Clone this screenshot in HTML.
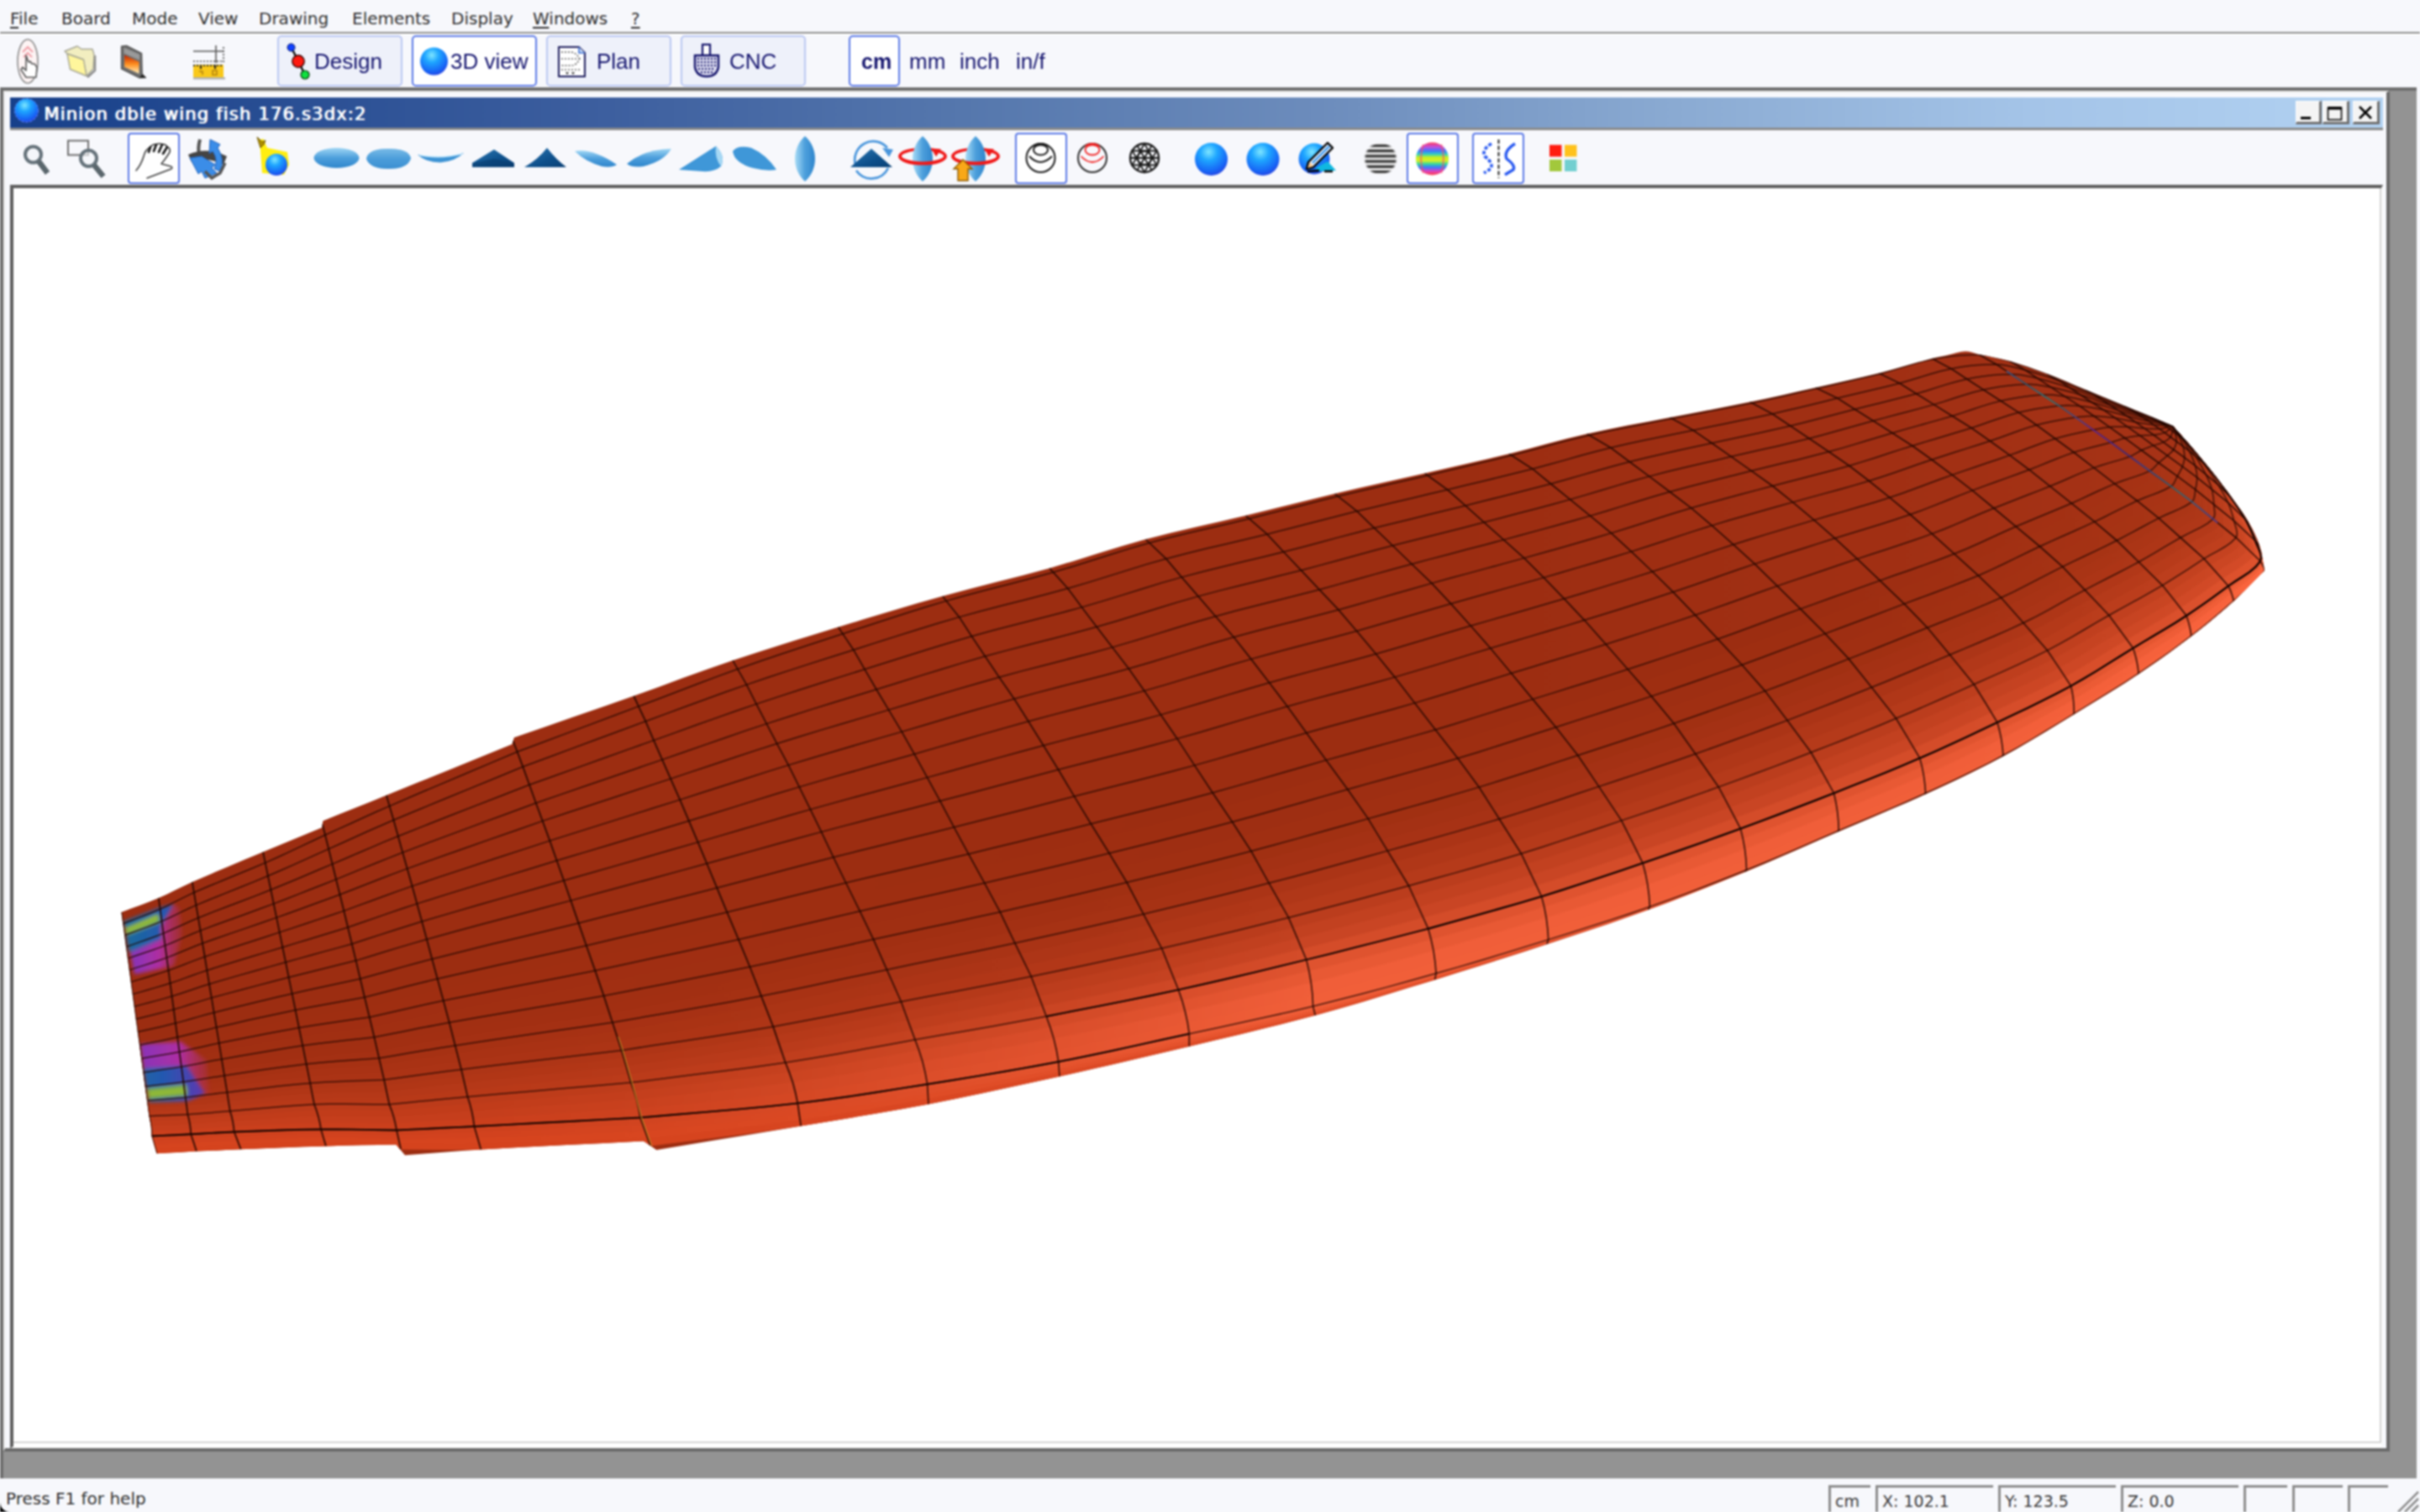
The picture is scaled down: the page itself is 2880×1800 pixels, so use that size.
<!DOCTYPE html>
<html lang="en">
<head>
<meta charset="utf-8">
<title>Minion dble wing fish 176.s3dx:2</title>
<style>
html,body{margin:0;padding:0;}
body{width:2880px;height:1800px;overflow:hidden;background:#f7f8fc;position:relative;font-family:"DejaVu Sans","Liberation Sans",sans-serif;color:#2a2a2a;}
.abs{position:absolute;}
#menubar{left:0;top:0;width:2880px;height:38px;background:#f7f8fc;}
#menubar span{position:absolute;top:8px;font-size:20px;line-height:28px;color:#303030;white-space:nowrap;}
#menubar u{text-decoration:underline;text-underline-offset:3px;text-decoration-thickness:2px;}
#menuline{left:0;top:38px;width:2880px;height:2px;background:#8e8e8e;}
#menuline2{left:0;top:40px;width:2880px;height:2px;background:#ffffff;}
.tbtn{position:absolute;top:42px;height:57px;width:145px;border:2px solid #b9c6f2;border-radius:5px;background:#eef1fa;box-sizing:content-box;}
.tbtn.sel{border-color:#5a78e6;background:#ffffff;}
.tlabel{position:absolute;font-family:"Liberation Sans",sans-serif;font-size:26px;line-height:30px;color:#14146e;white-space:nowrap;top:58px;}
#mdi{left:0;top:104px;width:2876px;height:1656px;background:#939393;}
#mdi .topline{position:absolute;left:0;top:0;width:2876px;height:4px;background:#6e6e6e;}
#mdi .leftline{position:absolute;left:0;top:0;width:4px;height:1656px;background:#6e6e6e;}
#child{left:4px;top:108px;width:2840px;height:1620px;background:#f7f8fc;box-sizing:border-box;border-right:4px solid #6a6a6a;border-bottom:4px solid #6a6a6a;border-left:2px solid #e8e8e8;border-top:2px solid #e8e8e8;}
#title{left:12px;top:116px;width:2824px;height:36px;background:linear-gradient(90deg,#17408a 0%,#2a4f94 12%,#3d5f9f 25%,#5577ad 40%,#6c8cbc 55%,#8aaad2 70%,#a4c4e8 85%,#b2d2f2 100%);}
#title .txt{position:absolute;left:40px;top:5px;font-size:21px;line-height:30px;color:#fff;font-weight:normal;letter-spacing:1.2px;text-shadow:1px 0 0 #fff;white-space:nowrap;font-family:"DejaVu Sans",sans-serif;}
#titleline{left:12px;top:152px;width:2824px;height:3px;background:#8a8a8a;}
.wbtn{position:absolute;top:120px;height:24px;background:#f4f4f4;border-right:3px solid #707070;border-bottom:3px solid #707070;border-left:1px solid #fff;border-top:1px solid #fff;}
#canvasframe{left:12px;top:220px;width:2824px;height:1504px;background:#fff;box-sizing:border-box;border-left:4px solid #5e5e5e;border-top:4px solid #5e5e5e;border-right:2px solid #fafafa;border-bottom:2px solid #fafafa;}
#canvasinner{left:16px;top:224px;width:2818px;height:1494px;background:#fff;box-sizing:border-box;border-right:2px solid #d4d4d4;border-bottom:2px solid #d4d4d4;}
.ibtn{position:absolute;top:158px;width:58px;height:57px;border:2px solid #5a78e6;border-radius:4px;background:#fff;box-sizing:content-box;}
#status{left:0;top:1760px;width:2880px;height:40px;background:#f7f8fc;}
#status .f{position:absolute;top:8px;height:32px;border-left:3px solid #8c8c8c;border-top:3px solid #8c8c8c;box-sizing:border-box;font-size:19px;line-height:28px;color:#383838;padding-left:5px;padding-top:2px;white-space:nowrap;}
#status .help{position:absolute;left:7px;top:10px;font-size:20px;line-height:28px;color:#303030;white-space:nowrap;}
svg{position:absolute;overflow:visible;}
#root{position:absolute;left:0;top:0;width:2880px;height:1800px;overflow:hidden;filter:blur(0.8px);}
</style>
</head>
<body>
<div id="root">
<div id="menubar" class="abs">
<span style="left:12px"><u>F</u>ile</span>
<span style="left:73px">Board</span>
<span style="left:157px">Mode</span>
<span style="left:236px">View</span>
<span style="left:308px">Drawing</span>
<span style="left:419px">Elements</span>
<span style="left:537px">Display</span>
<span style="left:634px"><u>W</u>indows</span>
<span style="left:751px"><u>?</u></span>
</div>
<div id="menuline" class="abs"></div>
<div id="menuline2" class="abs"></div>

<div class="tbtn" style="left:330px"></div>
<div class="tbtn sel" style="left:490px"></div>
<div class="tbtn" style="left:650px"></div>
<div class="tbtn" style="left:810px"></div>
<div class="tbtn sel" style="left:1010px;width:57px"></div>
<div class="tlabel" style="left:374px">Design</div>
<div class="tlabel" style="left:536px">3D view</div>
<div class="tlabel" style="left:710px">Plan</div>
<div class="tlabel" style="left:868px">CNC</div>
<div class="tlabel" style="left:1025px;font-weight:bold;font-size:25px">cm</div>
<div class="tlabel" style="left:1082px">mm</div>
<div class="tlabel" style="left:1142px">inch</div>
<div class="tlabel" style="left:1209px">in/f</div>

<div id="mdi" class="abs"><div class="topline"></div><div class="leftline"></div></div>
<div id="child" class="abs"></div>
<div id="title" class="abs"><div class="txt">Minion dble wing fish 176.s3dx:2</div></div>
<div id="titleline" class="abs"></div>
<div class="wbtn" style="left:2732px;width:27px"></div>
<div class="wbtn" style="left:2764px;width:28px"></div>
<div class="wbtn" style="left:2800px;width:28px"></div>
<svg style="left:2732px;top:120px" width="100" height="28" viewBox="0 0 100 28">
<rect x="6" y="19" width="12" height="3" fill="#000"/>
<rect x="38.5" y="8.5" width="16" height="14" fill="none" stroke="#000" stroke-width="1.6"/><rect x="38" y="7" width="17" height="3.5" fill="#000"/>
<path d="M76 7 L90 21 M90 7 L76 21" stroke="#000" stroke-width="2.6" fill="none"/>
</svg>

<div class="ibtn" style="left:152px"></div>
<div class="ibtn" style="left:1208px"></div>
<div class="ibtn" style="left:1674px"></div>
<div class="ibtn" style="left:1752px"></div>

<div id="canvasframe" class="abs"></div>
<div id="canvasinner" class="abs"></div>

<div id="status" class="abs">
<div class="help">Press F1 for help</div>
<div class="f" style="left:2176px;width:50px">cm</div>
<div class="f" style="left:2232px;width:140px">X: 102.1</div>
<div class="f" style="left:2378px;width:140px">Y: 123.5</div>
<div class="f" style="left:2524px;width:140px">Z: 0.0</div>
<div class="f" style="left:2670px;width:52px"></div>
<div class="f" style="left:2728px;width:60px"></div>
<div class="f" style="left:2794px;width:48px"></div>
<svg style="left:2846px;top:8px" width="34" height="32" viewBox="0 0 34 32"><path d="M8 32 L32 8 M16 32 L32 16 M24 32 L32 24" stroke="#8c8c8c" stroke-width="2.5" fill="none"/></svg>
</div>
<svg style="left:0;top:1788px" width="12" height="12" viewBox="0 0 12 12"><path d="M0 0 L0 12 L12 12 A12 12 0 0 1 0 0 Z" fill="#000"/></svg>
<svg id="icons" style="left:0;top:0" width="2880" height="230" viewBox="0 0 2880 230">
<defs>
<radialGradient id="gSph" cx="0.42" cy="0.28" r="0.75"><stop offset="0" stop-color="#7fe6ff"/><stop offset="0.35" stop-color="#1ea6ff"/><stop offset="0.8" stop-color="#1763f5"/><stop offset="1" stop-color="#2a44e0"/></radialGradient>
<linearGradient id="gEl" x1="0" y1="0" x2="0" y2="1"><stop offset="0" stop-color="#9fd6f4"/><stop offset="0.5" stop-color="#4d9fdc"/><stop offset="1" stop-color="#2f86cc"/></linearGradient>
<linearGradient id="gElH" x1="0" y1="0" x2="1" y2="0"><stop offset="0" stop-color="#a8dcf6"/><stop offset="0.5" stop-color="#4d9fdc"/><stop offset="1" stop-color="#2f86cc"/></linearGradient>
<linearGradient id="gTri" x1="0" y1="0" x2="1" y2="1"><stop offset="0" stop-color="#2c78b4"/><stop offset="0.6" stop-color="#0d4f8a"/><stop offset="1" stop-color="#0a3f74"/></linearGradient>
<linearGradient id="gFlame" x1="0" y1="0" x2="0" y2="1"><stop offset="0" stop-color="#c02000"/><stop offset="0.5" stop-color="#ff9020"/><stop offset="1" stop-color="#fff0c0"/></linearGradient>
<linearGradient id="gGrey" x1="0" y1="0" x2="0" y2="1"><stop offset="0" stop-color="#d8d8d8"/><stop offset="0.5" stop-color="#8a8a8a"/><stop offset="1" stop-color="#d0d0d0"/></linearGradient>
<linearGradient id="gRain" x1="0" y1="0" x2="0" y2="1"><stop offset="0" stop-color="#ff3a5a"/><stop offset="0.14" stop-color="#c050e0"/><stop offset="0.26" stop-color="#3c78ff"/><stop offset="0.36" stop-color="#30d0c0"/><stop offset="0.46" stop-color="#c8f020"/><stop offset="0.56" stop-color="#d8f028"/><stop offset="0.66" stop-color="#30d8a0"/><stop offset="0.76" stop-color="#3c78ff"/><stop offset="0.88" stop-color="#e040c0"/><stop offset="1" stop-color="#ff4040"/></linearGradient>
<clipPath id="cStr"><circle cx="1643" cy="189" r="19.5"/></clipPath>
</defs>

<!-- toolbar 1 -->
<g id="ic-board-hand">
<ellipse cx="33" cy="73" rx="12" ry="26" fill="#fdf4f4" stroke="#8a8a8a" stroke-width="1.6"/>
<path d="M27 62 L33 56 L39 62 M28 68 L33 63 L38 68" stroke="#f0a0a8" stroke-width="2" fill="none"/>
<path d="M31 66 L31 84 L27 80 L25 83 L31 92 L43 92 L44 80 L41 76 L38 76 L36 73 L34 74 Z" fill="#ffffff" stroke="#555" stroke-width="1.6" stroke-linejoin="round"/>
</g>
<g id="ic-folder">
<path d="M104 92 L113 84 L113 66" fill="none" stroke="#8c8c8c" stroke-width="2.4"/>
<path d="M77 61 L92 55 L97 58.500 L110 58.500 L112 65 L111 82 L103 90.500 L99 71 L80 64 Z" fill="#f2eec0" stroke="#a4a494" stroke-width="1.4" stroke-linejoin="round"/>
<path d="M80 64 L99.500 71 L103 90.500 L83.500 82.500 Z" fill="#fff69c" stroke="#a4a494" stroke-width="1.4" stroke-linejoin="round"/>
</g>
<g id="ic-save">
<path d="M144.500 55 L150.500 54.300 L168.600 63.600 L169.200 88.300 L173.500 92.500 L166 92.700 L144.500 82 Z" fill="#6e6e6e" stroke="#4a4a4a" stroke-width="1.2" stroke-linejoin="round"/>
<path d="M147.500 56.700 L166 64.800 L166 71.600 L147.500 63.500 Z" fill="#9a9a9a"/>
<path d="M148.100 65.400 L165.500 73.500 L165.500 87.700 L148.100 79.700 Z" fill="url(#gFlame)"/>
<path d="M166 92.700 L173.500 92.500 L169.200 88.300" fill="#222"/>
</g>
<g id="ic-ruler">
<path d="M230 61 L266 61 M257 54 L257 75" stroke="#555" stroke-width="1.6" fill="none"/>
<path d="M230 73 L266 73 M266 56 L266 75" stroke="#444" stroke-width="1.6" stroke-dasharray="2 2" fill="none"/>
<rect x="230" y="77" width="36" height="15" fill="#f9c81a"/>
<path d="M230 78 L266 78" stroke="#222" stroke-width="2" stroke-dasharray="2 2"/>
<path d="M239 77 L239 82 M256 77 L256 82" stroke="#222" stroke-width="2"/>
<path d="M237 85 L241 85 L241 89 M253 84 L258 84 L258 89 L253 89 Z" stroke="#b08010" stroke-width="1.5" fill="none"/>
<rect x="230" y="92" width="38" height="2.5" fill="#b0b0b0"/>
</g>
<g id="ic-design">
<path d="M347 57 L363 89" stroke="#000" stroke-width="2.2"/>
<circle cx="346.5" cy="56.5" r="4.5" fill="#1040ff" stroke="#001060" stroke-width="1"/>
<circle cx="363" cy="89" r="5" fill="#10e040" stroke="#003000" stroke-width="1.2"/>
<circle cx="355" cy="73" r="7.2" fill="#ff1a10" stroke="#300" stroke-width="1.4"/>
</g>
<circle cx="516.5" cy="73" r="16.5" fill="url(#gSph)"/>
<g id="ic-plan">
<path d="M665 56 L689 56 L696 63 L696 91 L665 91 Z" fill="#ffffff" stroke="#1a1a5a" stroke-width="2"/>
<path d="M689 56 L689 63 L696 63" fill="#cfe6ff" stroke="#3a6ad0" stroke-width="1.6"/>
<path d="M668 62 L680 62 Q686 63 690 70 Q686 78 680 78 L668 78" fill="none" stroke="#555" stroke-width="1.4" stroke-dasharray="2 2"/>
<path d="M668 70 L692 70 M668 83 L692 83" stroke="#666" stroke-width="1.4" stroke-dasharray="2 2"/>
<path d="M673 86 L677 86 L675 89 Z M680 86 L684 86 L682 89 Z" fill="#333"/>
</g>
<g id="ic-cnc">
<rect x="836" y="53" width="9" height="13" fill="#fff" stroke="#12126a" stroke-width="2.2"/>
<path d="M827 66 L855 66 L855 80 Q853 91 841 91 Q829 91 827 80 Z" fill="#dcdcf0" stroke="#12126a" stroke-width="2.4"/>
<path d="M830 70 L852 70 M830 74 L852 74 M830 78 L852 78 M831 82 L851 82 M834 86 L848 86" stroke="#12126a" stroke-width="2" stroke-dasharray="2 2"/>
</g>

<!-- toolbar 2 -->
<g id="ic-zoom">
<circle cx="39.5" cy="184" r="9.5" fill="#f4f6fa" stroke="#65727a" stroke-width="4"/>
<path d="M46 192 L56.5 206" stroke="#5a666c" stroke-width="6.5" stroke-linecap="butt"/>
</g>
<g id="ic-zoomrect">
<rect x="81" y="167.5" width="24" height="17" fill="none" stroke="#6e6e6e" stroke-width="2"/>
<circle cx="105.5" cy="188.5" r="9.5" fill="rgba(244,246,250,0.6)" stroke="#65727a" stroke-width="4"/>
<path d="M112 196.500 L123 210" stroke="#5a666c" stroke-width="6.5"/>
</g>
<g id="ic-hand" fill="none" stroke="#3c3c3c" stroke-width="1.6" stroke-linecap="round" stroke-linejoin="round">
<path d="M162 203 Q168 196 171 186 Q173 178 179 175 Q182 171 186 172 Q190 170 193 172 Q197 171 199 175 Q203 176 202 181 Q199 186 196 190 Q193 194 192 195 L203 198 Q206 199 204 201 L175 212"/>
<path d="M179 175 L177 181 M186 172 L183 180 M193 172 L189 181 M199 175 L194 183" stroke="#111" stroke-width="2.6"/>
</g>
<g id="ic-rotate">
<path d="M238 166 Q232 186 247 208" fill="none" stroke="#555" stroke-width="4"/>
<path d="M224 184 Q246 174 270 186 L266 196 Q246 186 228 193 Z" fill="#444"/>
<path d="M250 166 L262 172 L259 176 Q268 190 262 204 L255 201 Q260 190 253 180 L249 183 Z" fill="#3b8de8" stroke="#2060b8" stroke-width="1"/>
<path d="M226 188 L240 186 L256 196 L252 200 L258 206 L244 212 L240 204 L236 207 Z" fill="#3b8de8" stroke="#2060b8" stroke-width="1"/>
<path d="M244 204 L252 212 L262 206 L268 194" fill="none" stroke="#555" stroke-width="3.5"/>
</g>
<g id="ic-light">
<path d="M309 167 L313 165 L318 176 L342 181 L344 196 L338 208 L312 206 Z" fill="#ffee10"/>
<path d="M306 163 L312 169 L316 167 L314 172 L310 176 L308 170 Z" fill="#b09000" stroke="#705800" stroke-width="1"/>
<circle cx="329" cy="196" r="13" fill="url(#gSph)"/>
</g>
<ellipse cx="400.5" cy="188" rx="27" ry="12" fill="url(#gEl)"/>
<path d="M436 189 Q438 177 462 177 Q486 177 489 188 Q486 201 462 201 Q440 201 436 189 Z" fill="#4a9bd8"/>
<path d="M436 189 Q438 177 462 177 Q486 177 489 188 Q486 201 462 201 Q440 201 436 189 Z" fill="url(#gEl)" opacity="0.55"/>
<path d="M497 184 Q524 190 552 182 Q542 192 524 193.5 Q506 193 497 184 Z" fill="#3d93d4"/>
<path d="M499 184.5 Q524 189.5 550 183" stroke="#cfeeff" stroke-width="1.6" fill="none"/>
<path d="M562 199 L562 194 L588 178 L612 194 L612 199 Z" fill="url(#gTri)"/>
<path d="M562 194 L588 189 L612 194 L612 199 L562 199 Z" fill="#0a3a6c" opacity="0.55"/>
<path d="M624 199 Q640 190 651 176 Q662 190 674 199 Z" fill="url(#gTri)"/>
<path d="M684 180 Q704 176 734 196 Q728 200 716 198 Q696 192 684 180 Z" fill="url(#gEl)"/>
<path d="M746 195 Q766 178 799 177 Q790 192 766 198 Q752 200 746 195 Z" fill="url(#gEl)"/>
<path d="M808 202 L852 174 Q864 186 858 198 Q850 205 836 204 Z" fill="#3f97d8"/>
<path d="M852 174 Q864 186 858 198 Q850 188 852 174 Z" fill="#a6d8f4"/>
<path d="M872 180 Q878 172 894 176 Q912 184 924 202 Q912 204 896 200 Q874 194 872 180 Z" fill="#3f97d8"/>
<path d="M958 162 C966 169 970 179 970 189 C970 199 966 209 958 216 C950 209 946 199 946 189 C946 179 950 169 958 162 Z" fill="url(#gElH)"/>
<g id="ic-tri-rot">
<path d="M1018 196 A22 22 0 0 1 1056 176" fill="none" stroke="#4a96dc" stroke-width="2.8"/>
<path d="M1050 176 L1063 178 L1058 187 Z" fill="#4a96dc"/>
<path d="M1057 200 A22 22 0 0 1 1019 203" fill="none" stroke="#4a96dc" stroke-width="2.8"/>
<path d="M1012 199 L1062 199 L1037 177 Z" fill="url(#gTri)"/>
</g>
<g id="ic-rot1">
<path d="M1071 186 A27 8.500 0 0 1 1125 186" fill="none" stroke="#f01818" stroke-width="3.6"/>
<path d="M1098 162 C1106 169 1110 179 1110 189 C1110 199 1106 209 1098 216 C1090 209 1086 199 1086 189 C1086 179 1090 169 1098 162 Z" fill="url(#gElH)"/>
<path d="M1071 186 A27 8.500 0 0 0 1125 186" fill="none" stroke="#f01818" stroke-width="4"/>
<path d="M1108 176.500 L1120 177.500 L1114 186.500 Z" fill="#f01818"/>
</g>
<g id="ic-rot2">
<path d="M1134 186 A27 8.500 0 0 1 1188 186" fill="none" stroke="#f01818" stroke-width="3.6"/>
<path d="M1161 162 C1169 169 1173 179 1173 189 C1173 199 1169 209 1161 216 C1153 209 1149 199 1149 189 C1149 179 1153 169 1161 162 Z" fill="url(#gElH)"/>
<path d="M1134 186 A27 8.500 0 0 0 1188 186" fill="none" stroke="#f01818" stroke-width="4"/>
<path d="M1171 176.500 L1183 177.500 L1177 186.500 Z" fill="#f01818"/>
<path d="M1146 190 L1157 201 L1152 201 L1152 215 L1140 215 L1140 201 L1135 201 Z" fill="#f9a818" stroke="#8a5800" stroke-width="1.4"/>
</g>
<g id="ic-circ-black" fill="none" stroke="#1a1a1a" stroke-width="2">
<circle cx="1238.5" cy="188" r="17"/>
<ellipse cx="1238.5" cy="178.500" rx="8.5" ry="6"/>
<path d="M1225 186 Q1238 200 1252 186"/>
<path d="M1230 174 Q1238.500 168 1247 174"/>
</g>
<g id="ic-circ-red" fill="none" stroke="#f02020" stroke-width="1.8">
<circle cx="1300" cy="188" r="17" stroke="#2a2a2a" stroke-width="2"/>
<ellipse cx="1300" cy="178.500" rx="8.5" ry="6"/>
<path d="M1286.500 186 Q1300 200 1313.500 186"/>
<path d="M1291.500 174 Q1300 168 1308.500 174"/>
</g>
<g id="ic-mesh" fill="none" stroke="#1a1a1a" stroke-width="1.8">
<circle cx="1362" cy="188" r="17" stroke-width="2.4"/>
<circle cx="1362" cy="188" r="8"/>
<path d="M1362 171 L1347.500 196.500 L1376.500 196.500 Z M1362 205 L1347.500 179.500 L1376.500 179.500 Z"/>
<path d="M1345 188 L1379 188 M1353.500 173.500 L1370.500 202.500 M1370.500 173.500 L1353.500 202.500"/>
</g>
<circle cx="1441.500" cy="189.500" r="19.500" fill="url(#gSph)"/>
<circle cx="1503" cy="189.500" r="19.500" fill="url(#gSph)"/>
<g id="ic-sph-pen">
<circle cx="1564" cy="189" r="18.500" fill="url(#gSph)"/>
<path d="M1566 200 L1580 192 L1590 203 L1568 204 Z" fill="#10b8e0"/>
<path d="M1556 204 L1570 203 M1576 204 L1586 204" stroke="#000" stroke-width="2.4"/>
<path d="M1557 193 L1580 170 L1586 176 L1563 199 L1555 201 Z" fill="#e8f2ff" stroke="#000" stroke-width="2.4" stroke-linejoin="round"/>
<path d="M1562 194 L1582 174" stroke="#4aa0f0" stroke-width="2.5"/>
<path d="M1556 200 L1559 193 L1563 198 Z" fill="#f8c890"/>
</g>
<g id="ic-sph-stripe">
<circle cx="1643" cy="189" r="19.500" fill="#e4e4e4"/>
<g clip-path="url(#cStr)" stroke="#3c3c3c" stroke-width="3.2">
<path d="M1620 173.500 L1666 173.500 M1620 179.700 L1666 179.700 M1620 185.900 L1666 185.900 M1620 192.100 L1666 192.100 M1620 198.300 L1666 198.300 M1620 204.500 L1666 204.500"/>
</g>
<circle cx="1643" cy="189" r="19.500" fill="none" stroke="#f7f8fc" stroke-width="3" opacity="0.55"/>
</g>
<g id="ic-sph-rain">
<circle cx="1704.500" cy="189" r="19.500" fill="url(#gRain)"/>
<path d="M1694 172 Q1688 189 1694 206 M1715 172 Q1721 189 1715 206" fill="none" stroke="#ff4a60" stroke-width="2.4" opacity="0.55"/>
</g>
<g id="ic-sis" fill="none">
<path d="M1783.500 166 L1783.500 212" stroke="#222" stroke-width="2" stroke-dasharray="5 2.500"/>
<path d="M1775 171 Q1763 178 1767 186 Q1778 195 1774 201 L1766 206" stroke="#2858f0" stroke-width="3.6" stroke-dasharray="4 2.200"/>
<path d="M1803 171 Q1789 180 1793 189 Q1804 197 1801 202 L1791 208" stroke="#2858f0" stroke-width="3.400"/>
</g>
<g id="ic-squares">
<rect x="1844" y="172.500" width="14.500" height="14" fill="#ff1c10"/>
<rect x="1862" y="172.500" width="14.500" height="14" fill="#ffc21c"/>
<rect x="1844" y="190" width="14.500" height="14" fill="#a2c83c"/>
<rect x="1862" y="190" width="14.500" height="14" fill="#72cfd0"/>
</g>
<circle cx="31.5" cy="131.5" r="14" fill="url(#gSph)" stroke="#6a8cff" stroke-width="1" stroke-dasharray="3 2"/>
</svg>
<svg id="board" style="left:0;top:0" width="2880" height="1800" viewBox="0 0 2880 1800">
<defs><clipPath id="bclip"><path d="M144.4,1086.0 L155.5,1081.8 L166.7,1077.7 L177.8,1073.5 L188.8,1069.0 L198.9,1064.4 L208.8,1059.6 L218.8,1054.7 L228.8,1050.0 L249.8,1040.9 L270.8,1032.0 L291.9,1023.1 L313.0,1014.3 L330.5,1007.0 L348.0,999.7 L365.5,992.5 L383.0,985.2 L384.4,977.2 L403.3,969.6 L422.1,962.0 L441.0,954.4 L459.8,946.8 L497.2,931.6 L534.6,916.4 L571.9,901.2 L609.3,886.0 L611.9,878.0 L647.5,865.7 L683.1,853.3 L718.7,841.0 L754.2,828.5 L783.6,817.9 L813.0,807.1 L842.4,796.5 L872.0,786.2 L903.3,775.9 L934.7,765.9 L966.1,756.2 L997.6,746.5 L1028.5,737.1 L1059.5,727.8 L1090.6,718.6 L1121.7,709.8 L1153.5,701.3 L1185.4,693.1 L1217.2,685.0 L1249.0,676.4 L1277.7,667.9 L1306.2,659.0 L1334.8,650.2 L1363.5,642.0 L1393.1,634.5 L1422.9,627.5 L1452.7,620.8 L1482.5,613.8 L1509.0,607.3 L1535.4,600.7 L1561.9,594.2 L1588.4,587.8 L1615.1,581.6 L1641.9,575.6 L1668.7,569.6 L1695.5,563.5 L1720.6,557.8 L1745.8,552.0 L1770.9,546.2 L1796.0,540.2 L1819.2,534.3 L1842.3,528.1 L1865.4,522.0 L1888.6,516.4 L1913.2,511.2 L1937.9,506.3 L1962.6,501.7 L1987.3,497.0 L2011.1,492.4 L2034.9,487.9 L2058.7,483.3 L2082.5,478.6 L2102.1,474.5 L2121.6,470.2 L2141.1,465.8 L2160.6,461.4 L2179.5,457.2 L2198.4,453.0 L2217.2,448.7 L2236.0,444.2 L2251.9,440.0 L2267.7,435.6 L2283.5,431.1 L2299.3,426.8 L2304.4,425.6 L2309.6,424.4 L2314.8,423.4 L2320.0,422.3 L2324.7,421.1 L2329.4,419.8 L2334.1,418.7 L2338.8,418.2 L2342.9,418.6 L2346.9,419.6 L2350.9,420.8 L2355.0,421.9 L2364.3,423.8 L2373.6,425.7 L2382.8,427.7 L2392.0,430.0 L2403.1,433.4 L2414.1,437.0 L2425.1,440.9 L2436.0,445.0 L2447.6,449.6 L2459.1,454.3 L2470.5,459.2 L2482.0,464.0 L2493.5,468.8 L2505.0,473.5 L2516.5,478.3 L2528.0,483.0 L2536.0,486.3 L2544.0,489.5 L2552.0,492.7 L2560.0,496.0 L2566.4,498.7 L2572.9,501.5 L2579.3,504.2 L2585.7,507.0 L2591.3,513.2 L2596.9,519.4 L2602.5,525.7 L2608.0,532.0 L2614.1,539.2 L2620.1,546.4 L2626.1,553.7 L2632.0,561.0 L2638.4,569.1 L2644.7,577.4 L2650.9,585.6 L2657.0,594.0 L2662.0,600.9 L2666.9,607.8 L2671.6,614.8 L2676.0,622.0 L2679.7,628.8 L2683.2,635.7 L2686.3,642.8 L2689.0,650.0 L2691.0,657.1 L2692.4,664.4 L2693.7,671.7 L2695.0,679.0 L2687.6,686.5 L2680.2,694.0 L2672.9,701.5 L2665.4,708.8 L2657.7,716.0 L2647.8,724.7 L2637.8,733.3 L2627.7,741.7 L2617.4,749.9 L2607.0,758.0 L2594.6,767.3 L2582.2,776.5 L2569.6,785.5 L2556.8,794.3 L2544.0,803.0 L2528.8,812.9 L2513.5,822.6 L2498.0,832.1 L2482.5,841.6 L2467.0,851.0 L2450.2,861.2 L2433.5,871.5 L2416.6,881.6 L2399.7,891.5 L2382.5,901.0 L2364.3,910.5 L2345.9,919.7 L2327.3,928.7 L2308.7,937.4 L2290.0,946.0 L2269.4,955.2 L2248.7,964.1 L2228.0,972.9 L2207.2,981.7 L2186.5,990.5 L2164.6,1000.0 L2142.7,1009.7 L2120.7,1019.3 L2098.8,1028.8 L2076.7,1038.0 L2053.8,1047.3 L2030.9,1056.5 L2007.9,1065.6 L1984.8,1074.4 L1961.6,1083.0 L1937.6,1091.6 L1913.5,1099.9 L1889.4,1108.0 L1865.2,1116.0 L1841.0,1124.0 L1814.4,1132.7 L1787.7,1141.3 L1761.1,1149.7 L1734.3,1158.1 L1707.6,1166.4 L1679.2,1175.1 L1650.8,1183.8 L1622.4,1192.4 L1593.9,1200.7 L1565.3,1208.7 L1535.4,1216.6 L1505.5,1224.1 L1475.4,1231.4 L1445.4,1238.6 L1415.3,1245.7 L1384.5,1253.0 L1353.6,1260.3 L1322.8,1267.4 L1291.9,1274.5 L1261.0,1281.4 L1229.9,1288.3 L1198.7,1295.1 L1167.5,1301.8 L1136.3,1308.3 L1105.0,1314.5 L1074.7,1320.1 L1044.4,1325.3 L1014.0,1330.4 L983.6,1335.4 L953.2,1340.4 L918.8,1346.2 L884.4,1351.9 L850.1,1357.6 L815.7,1363.3 L781.3,1369.0 L766.0,1358.4 L717.6,1360.9 L669.2,1363.3 L620.8,1365.8 L572.4,1368.5 L549.8,1370.0 L527.2,1371.7 L504.6,1373.5 L482.0,1375.3 L471.2,1362.4 L450.4,1362.9 L429.5,1363.3 L408.7,1363.8 L387.9,1364.4 L362.6,1365.3 L337.3,1366.2 L312.0,1367.3 L286.7,1368.3 L273.5,1368.8 L260.3,1369.4 L247.1,1370.0 L233.9,1370.6 L222.0,1371.2 L210.2,1371.9 L198.3,1372.6 L186.5,1373.3 L183.5,1362.9 L180.5,1352.5 L179.7,1340.5 L177.5,1328.7 L176.2,1319.5 L175.0,1310.3 L173.8,1301.8 L172.7,1293.4 L171.5,1285.1 L170.4,1276.7 L169.3,1268.5 L168.2,1260.2 L167.1,1252.2 L166.0,1244.2 L164.9,1236.3 L163.8,1228.5 L162.8,1220.8 L161.7,1213.2 L160.7,1205.8 L159.7,1198.3 L158.7,1191.0 L157.7,1183.6 L156.7,1176.4 L155.7,1169.1 L154.8,1162.0 L153.8,1154.9 L152.9,1148.0 L151.9,1141.1 L151.0,1134.2 L150.0,1127.3 L149.1,1120.4 L148.2,1113.5 L146.3,1099.7 Z"/></clipPath>
<linearGradient id="g0" gradientUnits="userSpaceOnUse" x1="144" y1="0" x2="2700" y2="0"><stop offset="0.009" stop-color="#9e2e11"/><stop offset="0.027" stop-color="#9e2e11"/><stop offset="0.045" stop-color="#9e2e11"/><stop offset="0.082" stop-color="#9e2e11"/><stop offset="0.114" stop-color="#9e2e11"/><stop offset="0.148" stop-color="#9e2e11"/><stop offset="0.218" stop-color="#9e2e11"/><stop offset="0.284" stop-color="#9e2e11"/><stop offset="0.339" stop-color="#9e2e11"/><stop offset="0.396" stop-color="#9d2e11"/><stop offset="0.454" stop-color="#9d2d11"/><stop offset="0.511" stop-color="#9c2d11"/><stop offset="0.564" stop-color="#9c2d11"/><stop offset="0.615" stop-color="#9c2d11"/><stop offset="0.660" stop-color="#9c2d11"/><stop offset="0.704" stop-color="#9c2d11"/><stop offset="0.746" stop-color="#9c2d11"/><stop offset="0.785" stop-color="#9c2d11"/><stop offset="0.822" stop-color="#9e2e12"/><stop offset="0.856" stop-color="#a02f12"/><stop offset="0.885" stop-color="#a23013"/><stop offset="0.911" stop-color="#a43114"/><stop offset="0.931" stop-color="#a53214"/><stop offset="0.947" stop-color="#a73315"/><stop offset="0.951" stop-color="#a93416"/><stop offset="0.955" stop-color="#aa3516"/><stop offset="0.957" stop-color="#aa3516"/><stop offset="0.958" stop-color="#aa3516"/><stop offset="0.957" stop-color="#aa3516"/></linearGradient><linearGradient id="g1" gradientUnits="userSpaceOnUse" x1="144" y1="0" x2="2700" y2="0"><stop offset="0.009" stop-color="#9f2e11"/><stop offset="0.027" stop-color="#9f2e11"/><stop offset="0.045" stop-color="#9f2e11"/><stop offset="0.082" stop-color="#9f2e11"/><stop offset="0.115" stop-color="#9f2e11"/><stop offset="0.149" stop-color="#9f2e11"/><stop offset="0.220" stop-color="#9f2e11"/><stop offset="0.286" stop-color="#9f2e11"/><stop offset="0.342" stop-color="#9e2e11"/><stop offset="0.400" stop-color="#9e2e11"/><stop offset="0.458" stop-color="#9e2e11"/><stop offset="0.515" stop-color="#9e2e11"/><stop offset="0.569" stop-color="#9e2e11"/><stop offset="0.620" stop-color="#9e2e11"/><stop offset="0.665" stop-color="#9e2e11"/><stop offset="0.710" stop-color="#9e2e11"/><stop offset="0.752" stop-color="#9e2e11"/><stop offset="0.791" stop-color="#9e2e11"/><stop offset="0.827" stop-color="#9f2f12"/><stop offset="0.862" stop-color="#a13013"/><stop offset="0.891" stop-color="#a33113"/><stop offset="0.916" stop-color="#a43214"/><stop offset="0.936" stop-color="#a63314"/><stop offset="0.952" stop-color="#a83415"/><stop offset="0.955" stop-color="#aa3516"/><stop offset="0.958" stop-color="#ac3616"/><stop offset="0.959" stop-color="#ac3616"/><stop offset="0.959" stop-color="#ac3616"/><stop offset="0.958" stop-color="#ac3616"/></linearGradient><linearGradient id="g2" gradientUnits="userSpaceOnUse" x1="144" y1="0" x2="2700" y2="0"><stop offset="0.010" stop-color="#a02e12"/><stop offset="0.027" stop-color="#a02e12"/><stop offset="0.046" stop-color="#a02e12"/><stop offset="0.083" stop-color="#a02e12"/><stop offset="0.116" stop-color="#a02e12"/><stop offset="0.151" stop-color="#a02e12"/><stop offset="0.222" stop-color="#a02e12"/><stop offset="0.289" stop-color="#a02e12"/><stop offset="0.346" stop-color="#9f2e12"/><stop offset="0.404" stop-color="#9f2e12"/><stop offset="0.462" stop-color="#9f2e12"/><stop offset="0.520" stop-color="#9e2e12"/><stop offset="0.574" stop-color="#9e2e12"/><stop offset="0.625" stop-color="#9e2e12"/><stop offset="0.671" stop-color="#9e2e12"/><stop offset="0.715" stop-color="#9e2e12"/><stop offset="0.757" stop-color="#9e2e12"/><stop offset="0.796" stop-color="#9e2e12"/><stop offset="0.833" stop-color="#a02f12"/><stop offset="0.867" stop-color="#a23013"/><stop offset="0.896" stop-color="#a43114"/><stop offset="0.921" stop-color="#a63214"/><stop offset="0.941" stop-color="#a73315"/><stop offset="0.957" stop-color="#a93415"/><stop offset="0.960" stop-color="#ab3516"/><stop offset="0.961" stop-color="#ac3617"/><stop offset="0.962" stop-color="#ac3617"/><stop offset="0.961" stop-color="#ac3617"/><stop offset="0.958" stop-color="#ac3617"/></linearGradient><linearGradient id="g3" gradientUnits="userSpaceOnUse" x1="144" y1="0" x2="2700" y2="0"><stop offset="0.010" stop-color="#a12f12"/><stop offset="0.028" stop-color="#a12f12"/><stop offset="0.047" stop-color="#a12f12"/><stop offset="0.084" stop-color="#a12f12"/><stop offset="0.117" stop-color="#a12f12"/><stop offset="0.152" stop-color="#a12f12"/><stop offset="0.224" stop-color="#a12f12"/><stop offset="0.291" stop-color="#a02f12"/><stop offset="0.349" stop-color="#a02f12"/><stop offset="0.407" stop-color="#a02f12"/><stop offset="0.466" stop-color="#a02f12"/><stop offset="0.524" stop-color="#a02f12"/><stop offset="0.578" stop-color="#a02f12"/><stop offset="0.630" stop-color="#a02f12"/><stop offset="0.676" stop-color="#a02f12"/><stop offset="0.720" stop-color="#a02f12"/><stop offset="0.763" stop-color="#a02f12"/><stop offset="0.802" stop-color="#a02f12"/><stop offset="0.838" stop-color="#a13012"/><stop offset="0.873" stop-color="#a33113"/><stop offset="0.901" stop-color="#a53214"/><stop offset="0.927" stop-color="#a63314"/><stop offset="0.946" stop-color="#a83415"/><stop offset="0.962" stop-color="#aa3516"/><stop offset="0.964" stop-color="#ac3616"/><stop offset="0.965" stop-color="#ae3717"/><stop offset="0.964" stop-color="#ae3717"/><stop offset="0.962" stop-color="#ae3717"/><stop offset="0.959" stop-color="#ae3717"/></linearGradient><linearGradient id="g4" gradientUnits="userSpaceOnUse" x1="144" y1="0" x2="2700" y2="0"><stop offset="0.010" stop-color="#a12f12"/><stop offset="0.028" stop-color="#a12f12"/><stop offset="0.047" stop-color="#a12f12"/><stop offset="0.085" stop-color="#a12f12"/><stop offset="0.118" stop-color="#a12f12"/><stop offset="0.153" stop-color="#a12f12"/><stop offset="0.225" stop-color="#a12f12"/><stop offset="0.294" stop-color="#a12f12"/><stop offset="0.351" stop-color="#a12f12"/><stop offset="0.410" stop-color="#a12f12"/><stop offset="0.470" stop-color="#a13012"/><stop offset="0.528" stop-color="#a13012"/><stop offset="0.582" stop-color="#a13012"/><stop offset="0.634" stop-color="#a13012"/><stop offset="0.680" stop-color="#a13012"/><stop offset="0.725" stop-color="#a13012"/><stop offset="0.767" stop-color="#a13012"/><stop offset="0.806" stop-color="#a13012"/><stop offset="0.843" stop-color="#a33113"/><stop offset="0.877" stop-color="#a53214"/><stop offset="0.906" stop-color="#a73314"/><stop offset="0.931" stop-color="#a83415"/><stop offset="0.950" stop-color="#aa3516"/><stop offset="0.966" stop-color="#ac3616"/><stop offset="0.967" stop-color="#ae3717"/><stop offset="0.968" stop-color="#af3817"/><stop offset="0.967" stop-color="#af3817"/><stop offset="0.963" stop-color="#af3817"/><stop offset="0.959" stop-color="#af3817"/></linearGradient><linearGradient id="g5" gradientUnits="userSpaceOnUse" x1="144" y1="0" x2="2700" y2="0"><stop offset="0.011" stop-color="#a22f12"/><stop offset="0.029" stop-color="#a22f12"/><stop offset="0.048" stop-color="#a22f12"/><stop offset="0.085" stop-color="#a22f12"/><stop offset="0.119" stop-color="#a22f12"/><stop offset="0.154" stop-color="#a22f12"/><stop offset="0.227" stop-color="#a22f12"/><stop offset="0.295" stop-color="#a33012"/><stop offset="0.353" stop-color="#a33013"/><stop offset="0.413" stop-color="#a33013"/><stop offset="0.472" stop-color="#a43113"/><stop offset="0.530" stop-color="#a43114"/><stop offset="0.585" stop-color="#a43114"/><stop offset="0.637" stop-color="#a43114"/><stop offset="0.683" stop-color="#a43114"/><stop offset="0.728" stop-color="#a43114"/><stop offset="0.771" stop-color="#a43114"/><stop offset="0.810" stop-color="#a43114"/><stop offset="0.846" stop-color="#a63214"/><stop offset="0.881" stop-color="#a83315"/><stop offset="0.909" stop-color="#a93415"/><stop offset="0.934" stop-color="#ab3516"/><stop offset="0.954" stop-color="#ad3617"/><stop offset="0.969" stop-color="#ae3717"/><stop offset="0.970" stop-color="#b03818"/><stop offset="0.970" stop-color="#b23918"/><stop offset="0.968" stop-color="#b23918"/><stop offset="0.964" stop-color="#b23918"/><stop offset="0.960" stop-color="#b23918"/></linearGradient><linearGradient id="g6" gradientUnits="userSpaceOnUse" x1="144" y1="0" x2="2700" y2="0"><stop offset="0.011" stop-color="#a43013"/><stop offset="0.029" stop-color="#a43013"/><stop offset="0.048" stop-color="#a43013"/><stop offset="0.086" stop-color="#a43013"/><stop offset="0.120" stop-color="#a43013"/><stop offset="0.155" stop-color="#a43013"/><stop offset="0.228" stop-color="#a43013"/><stop offset="0.297" stop-color="#a53113"/><stop offset="0.356" stop-color="#a53114"/><stop offset="0.415" stop-color="#a63214"/><stop offset="0.475" stop-color="#a63214"/><stop offset="0.533" stop-color="#a73215"/><stop offset="0.588" stop-color="#a73215"/><stop offset="0.640" stop-color="#a73215"/><stop offset="0.687" stop-color="#a73215"/><stop offset="0.731" stop-color="#a73215"/><stop offset="0.774" stop-color="#a73215"/><stop offset="0.813" stop-color="#a73215"/><stop offset="0.850" stop-color="#a83315"/><stop offset="0.884" stop-color="#aa3416"/><stop offset="0.913" stop-color="#ac3516"/><stop offset="0.938" stop-color="#ae3617"/><stop offset="0.957" stop-color="#af3718"/><stop offset="0.972" stop-color="#b13818"/><stop offset="0.973" stop-color="#b33919"/><stop offset="0.972" stop-color="#b53a1a"/><stop offset="0.970" stop-color="#b53a1a"/><stop offset="0.965" stop-color="#b53a1a"/><stop offset="0.960" stop-color="#b53a1a"/></linearGradient><linearGradient id="g7" gradientUnits="userSpaceOnUse" x1="144" y1="0" x2="2700" y2="0"><stop offset="0.011" stop-color="#a63113"/><stop offset="0.029" stop-color="#a63113"/><stop offset="0.048" stop-color="#a63113"/><stop offset="0.087" stop-color="#a63113"/><stop offset="0.121" stop-color="#a63113"/><stop offset="0.156" stop-color="#a63113"/><stop offset="0.230" stop-color="#a73114"/><stop offset="0.299" stop-color="#a83214"/><stop offset="0.358" stop-color="#a83315"/><stop offset="0.417" stop-color="#a93315"/><stop offset="0.477" stop-color="#aa3416"/><stop offset="0.536" stop-color="#ab3416"/><stop offset="0.591" stop-color="#ab3416"/><stop offset="0.643" stop-color="#ab3416"/><stop offset="0.690" stop-color="#ab3416"/><stop offset="0.735" stop-color="#ab3416"/><stop offset="0.778" stop-color="#ab3416"/><stop offset="0.817" stop-color="#ab3416"/><stop offset="0.853" stop-color="#ac3517"/><stop offset="0.888" stop-color="#ae3617"/><stop offset="0.916" stop-color="#b03718"/><stop offset="0.941" stop-color="#b23818"/><stop offset="0.961" stop-color="#b33919"/><stop offset="0.976" stop-color="#b53a1a"/><stop offset="0.976" stop-color="#b73b1a"/><stop offset="0.975" stop-color="#b93c1b"/><stop offset="0.972" stop-color="#b93c1b"/><stop offset="0.967" stop-color="#b93c1b"/><stop offset="0.961" stop-color="#b93c1b"/></linearGradient><linearGradient id="g8" gradientUnits="userSpaceOnUse" x1="144" y1="0" x2="2700" y2="0"><stop offset="0.012" stop-color="#a93214"/><stop offset="0.030" stop-color="#a93214"/><stop offset="0.049" stop-color="#a93214"/><stop offset="0.087" stop-color="#a93214"/><stop offset="0.121" stop-color="#a93214"/><stop offset="0.157" stop-color="#a93214"/><stop offset="0.231" stop-color="#a93314"/><stop offset="0.301" stop-color="#ab3415"/><stop offset="0.360" stop-color="#ac3416"/><stop offset="0.420" stop-color="#ad3517"/><stop offset="0.480" stop-color="#af3617"/><stop offset="0.539" stop-color="#b03718"/><stop offset="0.595" stop-color="#b03718"/><stop offset="0.647" stop-color="#b03718"/><stop offset="0.693" stop-color="#b03718"/><stop offset="0.738" stop-color="#b03718"/><stop offset="0.781" stop-color="#b03718"/><stop offset="0.821" stop-color="#b03718"/><stop offset="0.857" stop-color="#b23819"/><stop offset="0.891" stop-color="#b43919"/><stop offset="0.920" stop-color="#b53a1a"/><stop offset="0.945" stop-color="#b73b1a"/><stop offset="0.964" stop-color="#b93c1b"/><stop offset="0.979" stop-color="#ba3d1c"/><stop offset="0.979" stop-color="#bc3e1c"/><stop offset="0.977" stop-color="#be3f1d"/><stop offset="0.973" stop-color="#be3f1d"/><stop offset="0.968" stop-color="#be3f1d"/><stop offset="0.961" stop-color="#be3f1d"/></linearGradient><linearGradient id="g9" gradientUnits="userSpaceOnUse" x1="144" y1="0" x2="2700" y2="0"><stop offset="0.012" stop-color="#ab3315"/><stop offset="0.030" stop-color="#ab3315"/><stop offset="0.049" stop-color="#ab3315"/><stop offset="0.088" stop-color="#ab3315"/><stop offset="0.122" stop-color="#ab3315"/><stop offset="0.158" stop-color="#ab3315"/><stop offset="0.232" stop-color="#ac3415"/><stop offset="0.303" stop-color="#ae3516"/><stop offset="0.362" stop-color="#b03617"/><stop offset="0.423" stop-color="#b23718"/><stop offset="0.483" stop-color="#b33919"/><stop offset="0.542" stop-color="#b53a1a"/><stop offset="0.598" stop-color="#b53a1a"/><stop offset="0.650" stop-color="#b53a1a"/><stop offset="0.697" stop-color="#b53a1a"/><stop offset="0.742" stop-color="#b53a1a"/><stop offset="0.785" stop-color="#b53a1a"/><stop offset="0.825" stop-color="#b53a1a"/><stop offset="0.861" stop-color="#b73b1b"/><stop offset="0.895" stop-color="#b93c1b"/><stop offset="0.924" stop-color="#bb3d1c"/><stop offset="0.949" stop-color="#bc3e1d"/><stop offset="0.968" stop-color="#be3f1d"/><stop offset="0.983" stop-color="#c0401e"/><stop offset="0.982" stop-color="#c2411e"/><stop offset="0.980" stop-color="#c3421f"/><stop offset="0.975" stop-color="#c3421f"/><stop offset="0.969" stop-color="#c3421f"/><stop offset="0.962" stop-color="#c3421f"/></linearGradient><linearGradient id="g10" gradientUnits="userSpaceOnUse" x1="144" y1="0" x2="2700" y2="0"><stop offset="0.012" stop-color="#ae3516"/><stop offset="0.030" stop-color="#ae3516"/><stop offset="0.050" stop-color="#ae3516"/><stop offset="0.088" stop-color="#ae3516"/><stop offset="0.123" stop-color="#ae3516"/><stop offset="0.159" stop-color="#ae3516"/><stop offset="0.234" stop-color="#af3516"/><stop offset="0.304" stop-color="#b13717"/><stop offset="0.364" stop-color="#b43819"/><stop offset="0.425" stop-color="#b63a1a"/><stop offset="0.486" stop-color="#b93b1b"/><stop offset="0.545" stop-color="#bb3d1d"/><stop offset="0.601" stop-color="#bb3d1d"/><stop offset="0.653" stop-color="#bb3d1d"/><stop offset="0.700" stop-color="#bb3d1d"/><stop offset="0.745" stop-color="#bb3d1d"/><stop offset="0.788" stop-color="#bb3d1d"/><stop offset="0.828" stop-color="#bb3d1d"/><stop offset="0.864" stop-color="#bd3e1d"/><stop offset="0.898" stop-color="#bf3f1e"/><stop offset="0.927" stop-color="#c1401f"/><stop offset="0.952" stop-color="#c2411f"/><stop offset="0.971" stop-color="#c44220"/><stop offset="0.986" stop-color="#c64320"/><stop offset="0.985" stop-color="#c84421"/><stop offset="0.982" stop-color="#c94522"/><stop offset="0.977" stop-color="#c94522"/><stop offset="0.970" stop-color="#c94522"/><stop offset="0.962" stop-color="#c94522"/></linearGradient><linearGradient id="g11" gradientUnits="userSpaceOnUse" x1="144" y1="0" x2="2700" y2="0"><stop offset="0.012" stop-color="#b13616"/><stop offset="0.030" stop-color="#b13616"/><stop offset="0.050" stop-color="#b13616"/><stop offset="0.089" stop-color="#b13616"/><stop offset="0.123" stop-color="#b13616"/><stop offset="0.160" stop-color="#b13616"/><stop offset="0.235" stop-color="#b33717"/><stop offset="0.306" stop-color="#b63919"/><stop offset="0.366" stop-color="#b93b1b"/><stop offset="0.426" stop-color="#bc3d1d"/><stop offset="0.487" stop-color="#bf3f1e"/><stop offset="0.547" stop-color="#c24120"/><stop offset="0.603" stop-color="#c24120"/><stop offset="0.656" stop-color="#c24120"/><stop offset="0.702" stop-color="#c24120"/><stop offset="0.748" stop-color="#c24120"/><stop offset="0.791" stop-color="#c24120"/><stop offset="0.831" stop-color="#c24120"/><stop offset="0.867" stop-color="#c44221"/><stop offset="0.901" stop-color="#c64321"/><stop offset="0.930" stop-color="#c74422"/><stop offset="0.955" stop-color="#c94522"/><stop offset="0.974" stop-color="#cb4623"/><stop offset="0.989" stop-color="#cc4724"/><stop offset="0.988" stop-color="#ce4824"/><stop offset="0.984" stop-color="#d04925"/><stop offset="0.978" stop-color="#d04925"/><stop offset="0.970" stop-color="#d04925"/><stop offset="0.963" stop-color="#d04925"/></linearGradient><linearGradient id="g12" gradientUnits="userSpaceOnUse" x1="144" y1="0" x2="2700" y2="0"><stop offset="0.013" stop-color="#b53818"/><stop offset="0.031" stop-color="#b53818"/><stop offset="0.050" stop-color="#b53818"/><stop offset="0.089" stop-color="#b53818"/><stop offset="0.124" stop-color="#b53818"/><stop offset="0.160" stop-color="#b53818"/><stop offset="0.236" stop-color="#b73919"/><stop offset="0.307" stop-color="#ba3b1b"/><stop offset="0.367" stop-color="#be3e1d"/><stop offset="0.428" stop-color="#c2401f"/><stop offset="0.489" stop-color="#c54221"/><stop offset="0.549" stop-color="#c94524"/><stop offset="0.605" stop-color="#c94524"/><stop offset="0.658" stop-color="#c94524"/><stop offset="0.705" stop-color="#c94524"/><stop offset="0.750" stop-color="#c94524"/><stop offset="0.794" stop-color="#c94524"/><stop offset="0.833" stop-color="#c94524"/><stop offset="0.870" stop-color="#cb4624"/><stop offset="0.904" stop-color="#cd4725"/><stop offset="0.933" stop-color="#ce4825"/><stop offset="0.957" stop-color="#d04926"/><stop offset="0.977" stop-color="#d24a27"/><stop offset="0.992" stop-color="#d44b27"/><stop offset="0.990" stop-color="#d54c28"/><stop offset="0.986" stop-color="#d74d29"/><stop offset="0.980" stop-color="#d74d29"/><stop offset="0.971" stop-color="#d74d29"/><stop offset="0.963" stop-color="#d74d29"/></linearGradient><linearGradient id="g13" gradientUnits="userSpaceOnUse" x1="144" y1="0" x2="2700" y2="0"><stop offset="0.013" stop-color="#b83918"/><stop offset="0.031" stop-color="#b83918"/><stop offset="0.051" stop-color="#b83918"/><stop offset="0.090" stop-color="#b83918"/><stop offset="0.125" stop-color="#b83918"/><stop offset="0.161" stop-color="#b83918"/><stop offset="0.237" stop-color="#bb3b1a"/><stop offset="0.309" stop-color="#c03e1d"/><stop offset="0.369" stop-color="#c54220"/><stop offset="0.430" stop-color="#ca4523"/><stop offset="0.491" stop-color="#cf4826"/><stop offset="0.551" stop-color="#d44c29"/><stop offset="0.608" stop-color="#d44c29"/><stop offset="0.660" stop-color="#d44c29"/><stop offset="0.707" stop-color="#d44c29"/><stop offset="0.753" stop-color="#d44c29"/><stop offset="0.796" stop-color="#d44c29"/><stop offset="0.836" stop-color="#d44c29"/><stop offset="0.872" stop-color="#d64d2a"/><stop offset="0.907" stop-color="#d84e2a"/><stop offset="0.935" stop-color="#d94f2b"/><stop offset="0.960" stop-color="#db502c"/><stop offset="0.980" stop-color="#dd512c"/><stop offset="0.995" stop-color="#df522d"/><stop offset="0.992" stop-color="#e0532d"/><stop offset="0.988" stop-color="#e2542e"/><stop offset="0.981" stop-color="#e2542e"/><stop offset="0.972" stop-color="#e2542e"/><stop offset="0.963" stop-color="#e2542e"/></linearGradient><linearGradient id="g14" gradientUnits="userSpaceOnUse" x1="144" y1="0" x2="2700" y2="0"><stop offset="0.013" stop-color="#bc3b1a"/><stop offset="0.031" stop-color="#bc3b1a"/><stop offset="0.051" stop-color="#bc3b1a"/><stop offset="0.091" stop-color="#bc3b1a"/><stop offset="0.126" stop-color="#bc3b1a"/><stop offset="0.162" stop-color="#bc3b1a"/><stop offset="0.238" stop-color="#bf3d1b"/><stop offset="0.310" stop-color="#c6411f"/><stop offset="0.371" stop-color="#cc4623"/><stop offset="0.432" stop-color="#d24a27"/><stop offset="0.493" stop-color="#d94e2b"/><stop offset="0.553" stop-color="#df532f"/><stop offset="0.609" stop-color="#df532f"/><stop offset="0.662" stop-color="#df532f"/><stop offset="0.709" stop-color="#df532f"/><stop offset="0.755" stop-color="#df532f"/><stop offset="0.798" stop-color="#df532f"/><stop offset="0.838" stop-color="#df532f"/><stop offset="0.874" stop-color="#e1542f"/><stop offset="0.908" stop-color="#e25530"/><stop offset="0.937" stop-color="#e45630"/><stop offset="0.962" stop-color="#e65731"/><stop offset="0.982" stop-color="#e85832"/><stop offset="0.996" stop-color="#e95932"/><stop offset="0.994" stop-color="#eb5a33"/><stop offset="0.989" stop-color="#ed5b34"/><stop offset="0.982" stop-color="#ed5b34"/><stop offset="0.973" stop-color="#ed5b34"/><stop offset="0.964" stop-color="#ed5b34"/></linearGradient><linearGradient id="g15" gradientUnits="userSpaceOnUse" x1="144" y1="0" x2="2700" y2="0"><stop offset="0.014" stop-color="#c13c1a"/><stop offset="0.032" stop-color="#c13c1a"/><stop offset="0.052" stop-color="#c13c1a"/><stop offset="0.091" stop-color="#c13c1a"/><stop offset="0.127" stop-color="#c13c1a"/><stop offset="0.163" stop-color="#c13c1a"/><stop offset="0.240" stop-color="#c43f1d"/><stop offset="0.312" stop-color="#cb4421"/><stop offset="0.372" stop-color="#d34926"/><stop offset="0.434" stop-color="#da4e2b"/><stop offset="0.495" stop-color="#e1532f"/><stop offset="0.554" stop-color="#e85934"/><stop offset="0.611" stop-color="#e85934"/><stop offset="0.663" stop-color="#e85934"/><stop offset="0.710" stop-color="#e85934"/><stop offset="0.756" stop-color="#e85934"/><stop offset="0.799" stop-color="#e85934"/><stop offset="0.839" stop-color="#e85934"/><stop offset="0.875" stop-color="#ea5a35"/><stop offset="0.909" stop-color="#eb5b35"/><stop offset="0.938" stop-color="#ed5c36"/><stop offset="0.963" stop-color="#ef5d37"/><stop offset="0.982" stop-color="#f15e37"/><stop offset="0.997" stop-color="#f25f38"/><stop offset="0.994" stop-color="#f46038"/><stop offset="0.990" stop-color="#f66139"/><stop offset="0.982" stop-color="#f66139"/><stop offset="0.973" stop-color="#f66139"/><stop offset="0.964" stop-color="#f66139"/></linearGradient><linearGradient id="g16" gradientUnits="userSpaceOnUse" x1="144" y1="0" x2="2700" y2="0"><stop offset="0.014" stop-color="#c53e1c"/><stop offset="0.032" stop-color="#c53e1c"/><stop offset="0.052" stop-color="#c53e1c"/><stop offset="0.092" stop-color="#c53e1c"/><stop offset="0.127" stop-color="#c53e1c"/><stop offset="0.164" stop-color="#c53e1c"/><stop offset="0.241" stop-color="#c9411e"/><stop offset="0.313" stop-color="#d14724"/><stop offset="0.374" stop-color="#d94c29"/><stop offset="0.435" stop-color="#e1522e"/><stop offset="0.496" stop-color="#e85834"/><stop offset="0.554" stop-color="#f05e39"/><stop offset="0.612" stop-color="#f05e39"/><stop offset="0.664" stop-color="#f05e39"/><stop offset="0.711" stop-color="#f05e39"/><stop offset="0.756" stop-color="#f05e39"/><stop offset="0.799" stop-color="#f05e39"/><stop offset="0.840" stop-color="#f05e39"/><stop offset="0.876" stop-color="#f25f3a"/><stop offset="0.909" stop-color="#f4603a"/><stop offset="0.939" stop-color="#f5613b"/><stop offset="0.963" stop-color="#f7623c"/><stop offset="0.983" stop-color="#f9633c"/><stop offset="0.997" stop-color="#fb643d"/><stop offset="0.995" stop-color="#fc653d"/><stop offset="0.990" stop-color="#fe663e"/><stop offset="0.983" stop-color="#fe663e"/><stop offset="0.973" stop-color="#fe663e"/><stop offset="0.964" stop-color="#fe663e"/></linearGradient><linearGradient id="g17" gradientUnits="userSpaceOnUse" x1="144" y1="0" x2="2700" y2="0"><stop offset="0.014" stop-color="#ca3f1c"/><stop offset="0.032" stop-color="#ca3f1c"/><stop offset="0.053" stop-color="#ca3f1c"/><stop offset="0.093" stop-color="#ca3f1c"/><stop offset="0.128" stop-color="#ca3f1c"/><stop offset="0.164" stop-color="#ca3f1c"/><stop offset="0.241" stop-color="#cd421f"/><stop offset="0.315" stop-color="#d54824"/><stop offset="0.375" stop-color="#dc4e2a"/><stop offset="0.436" stop-color="#e3532f"/><stop offset="0.497" stop-color="#ea5934"/><stop offset="0.555" stop-color="#f15f39"/><stop offset="0.612" stop-color="#f15f39"/><stop offset="0.664" stop-color="#f15f39"/><stop offset="0.712" stop-color="#f15f39"/><stop offset="0.757" stop-color="#f15f39"/><stop offset="0.800" stop-color="#f15f39"/><stop offset="0.840" stop-color="#f15f39"/><stop offset="0.876" stop-color="#f3603a"/><stop offset="0.909" stop-color="#f5613b"/><stop offset="0.939" stop-color="#f7623b"/><stop offset="0.964" stop-color="#f8633c"/><stop offset="0.983" stop-color="#fa643d"/><stop offset="0.998" stop-color="#fc653d"/><stop offset="0.995" stop-color="#fe663e"/><stop offset="0.990" stop-color="#ff673e"/><stop offset="0.983" stop-color="#ff673e"/><stop offset="0.973" stop-color="#ff673e"/><stop offset="0.964" stop-color="#ff673e"/></linearGradient><linearGradient id="g18" gradientUnits="userSpaceOnUse" x1="144" y1="0" x2="2700" y2="0"><stop offset="0.015" stop-color="#ce411d"/><stop offset="0.033" stop-color="#ce411d"/><stop offset="0.053" stop-color="#ce411d"/><stop offset="0.093" stop-color="#ce411d"/><stop offset="0.129" stop-color="#ce411d"/><stop offset="0.165" stop-color="#ce411d"/><stop offset="0.242" stop-color="#d14420"/><stop offset="0.315" stop-color="#d84925"/><stop offset="0.375" stop-color="#df4f2a"/><stop offset="0.437" stop-color="#e5552f"/><stop offset="0.497" stop-color="#ec5a35"/><stop offset="0.555" stop-color="#f3603a"/><stop offset="0.612" stop-color="#f3603a"/><stop offset="0.665" stop-color="#f3603a"/><stop offset="0.712" stop-color="#f3603a"/><stop offset="0.757" stop-color="#f3603a"/><stop offset="0.800" stop-color="#f3603a"/><stop offset="0.840" stop-color="#f3603a"/><stop offset="0.876" stop-color="#f4613a"/><stop offset="0.909" stop-color="#f6623b"/><stop offset="0.939" stop-color="#f8633c"/><stop offset="0.964" stop-color="#fa643c"/><stop offset="0.984" stop-color="#fb653d"/><stop offset="0.998" stop-color="#fd663e"/><stop offset="0.996" stop-color="#ff673e"/><stop offset="0.991" stop-color="#ff683f"/><stop offset="0.983" stop-color="#ff683f"/><stop offset="0.973" stop-color="#ff683f"/><stop offset="0.964" stop-color="#ff683f"/></linearGradient><linearGradient id="g19" gradientUnits="userSpaceOnUse" x1="144" y1="0" x2="2700" y2="0"><stop offset="0.015" stop-color="#d2421e"/><stop offset="0.034" stop-color="#d2421e"/><stop offset="0.054" stop-color="#d2421e"/><stop offset="0.094" stop-color="#d2421e"/><stop offset="0.129" stop-color="#d2421e"/><stop offset="0.166" stop-color="#d2421e"/><stop offset="0.244" stop-color="#d54520"/><stop offset="0.316" stop-color="#da4924"/><stop offset="0.376" stop-color="#df4e29"/><stop offset="0.437" stop-color="#e5532d"/><stop offset="0.497" stop-color="#ea5731"/><stop offset="0.555" stop-color="#ef5c36"/><stop offset="0.612" stop-color="#ef5c36"/><stop offset="0.664" stop-color="#ef5c36"/><stop offset="0.712" stop-color="#ef5c36"/><stop offset="0.757" stop-color="#ef5c36"/><stop offset="0.800" stop-color="#ef5c36"/><stop offset="0.840" stop-color="#ef5c36"/><stop offset="0.876" stop-color="#f15d36"/><stop offset="0.909" stop-color="#f35e37"/><stop offset="0.939" stop-color="#f45f38"/><stop offset="0.964" stop-color="#f66038"/><stop offset="0.984" stop-color="#f86139"/><stop offset="0.998" stop-color="#fa623a"/><stop offset="0.996" stop-color="#fb633a"/><stop offset="0.991" stop-color="#fd643b"/><stop offset="0.983" stop-color="#fd643b"/><stop offset="0.973" stop-color="#fd643b"/><stop offset="0.964" stop-color="#fd643b"/></linearGradient><linearGradient id="g20" gradientUnits="userSpaceOnUse" x1="144" y1="0" x2="2700" y2="0"><stop offset="0.016" stop-color="#d6441e"/><stop offset="0.034" stop-color="#d6441e"/><stop offset="0.055" stop-color="#d6441e"/><stop offset="0.095" stop-color="#d6441e"/><stop offset="0.130" stop-color="#d6441e"/><stop offset="0.166" stop-color="#d6441e"/><stop offset="0.245" stop-color="#d84620"/><stop offset="0.316" stop-color="#db4923"/><stop offset="0.376" stop-color="#df4c26"/><stop offset="0.437" stop-color="#e24f29"/><stop offset="0.497" stop-color="#e6532d"/><stop offset="0.556" stop-color="#ea5630"/><stop offset="0.612" stop-color="#ea5630"/><stop offset="0.664" stop-color="#ea5630"/><stop offset="0.711" stop-color="#ea5630"/><stop offset="0.756" stop-color="#ea5630"/><stop offset="0.799" stop-color="#ea5630"/><stop offset="0.840" stop-color="#ea5630"/><stop offset="0.876" stop-color="#eb5730"/><stop offset="0.909" stop-color="#ed5831"/><stop offset="0.939" stop-color="#ef5932"/><stop offset="0.964" stop-color="#f15a32"/><stop offset="0.984" stop-color="#f25b33"/><stop offset="0.998" stop-color="#f45c34"/><stop offset="0.996" stop-color="#f65d34"/><stop offset="0.991" stop-color="#f85e35"/><stop offset="0.983" stop-color="#f85e35"/><stop offset="0.973" stop-color="#f85e35"/><stop offset="0.964" stop-color="#f85e35"/></linearGradient><linearGradient id="g21" gradientUnits="userSpaceOnUse" x1="144" y1="0" x2="2700" y2="0"><stop offset="0.016" stop-color="#d5431d"/><stop offset="0.035" stop-color="#d5431d"/><stop offset="0.055" stop-color="#d5431d"/><stop offset="0.095" stop-color="#d5431d"/><stop offset="0.130" stop-color="#d5431d"/><stop offset="0.167" stop-color="#d5431d"/><stop offset="0.246" stop-color="#d6441e"/><stop offset="0.316" stop-color="#d84520"/><stop offset="0.376" stop-color="#da4722"/><stop offset="0.437" stop-color="#dc4924"/><stop offset="0.497" stop-color="#de4b26"/><stop offset="0.556" stop-color="#e04d28"/><stop offset="0.612" stop-color="#e04d28"/><stop offset="0.664" stop-color="#e04d28"/><stop offset="0.711" stop-color="#e04d28"/><stop offset="0.756" stop-color="#e04d28"/><stop offset="0.799" stop-color="#e04d28"/><stop offset="0.840" stop-color="#e04d28"/><stop offset="0.876" stop-color="#e24e29"/><stop offset="0.909" stop-color="#e34f29"/><stop offset="0.939" stop-color="#e5502a"/><stop offset="0.964" stop-color="#e7512b"/><stop offset="0.983" stop-color="#e9522b"/><stop offset="0.998" stop-color="#ea532c"/><stop offset="0.996" stop-color="#ec542d"/><stop offset="0.991" stop-color="#ee552d"/><stop offset="0.983" stop-color="#ee552d"/><stop offset="0.973" stop-color="#ee552d"/><stop offset="0.964" stop-color="#ee552d"/></linearGradient>
<linearGradient id="zb1" gradientUnits="userSpaceOnUse" x1="150" y1="1100" x2="178" y2="1168"><stop offset="0" stop-color="#b8d028"/><stop offset="0.16" stop-color="#58b838"/><stop offset="0.3" stop-color="#1878a8"/><stop offset="0.5" stop-color="#3850c0"/><stop offset="0.7" stop-color="#9830b0"/><stop offset="0.9" stop-color="#b02890" stop-opacity="0.8"/><stop offset="1" stop-color="#a02c40" stop-opacity="0"/></linearGradient>
<linearGradient id="zb2" gradientUnits="userSpaceOnUse" x1="190" y1="1240" x2="196" y2="1312"><stop offset="0" stop-color="#a83060" stop-opacity="0"/><stop offset="0.18" stop-color="#b02898"/><stop offset="0.4" stop-color="#7838b8"/><stop offset="0.58" stop-color="#2858b8"/><stop offset="0.72" stop-color="#1888a0"/><stop offset="0.84" stop-color="#68c030"/><stop offset="1" stop-color="#b0c820"/></linearGradient>
<linearGradient id="zf1" gradientUnits="userSpaceOnUse" x1="150" y1="0" x2="215" y2="0"><stop offset="0" stop-color="#fff" stop-opacity="1"/><stop offset="0.55" stop-color="#fff" stop-opacity="1"/><stop offset="1" stop-color="#fff" stop-opacity="0"/></linearGradient>
<linearGradient id="zf2" gradientUnits="userSpaceOnUse" x1="172" y1="0" x2="250" y2="0"><stop offset="0" stop-color="#fff" stop-opacity="1"/><stop offset="0.6" stop-color="#fff" stop-opacity="1"/><stop offset="1" stop-color="#fff" stop-opacity="0"/></linearGradient>
<mask id="zm1"><rect x="100" y="1000" width="300" height="400" fill="url(#zf1)"/></mask>
<mask id="zm2"><rect x="100" y="1000" width="300" height="400" fill="url(#zf2)"/></mask>
<linearGradient id="bl" gradientUnits="userSpaceOnUse" x1="2388" y1="444" x2="2641" y2="622"><stop offset="0" stop-color="#3070c0"/><stop offset="0.2" stop-color="#30a0a0"/><stop offset="0.4" stop-color="#7030d0"/><stop offset="0.6" stop-color="#4040c0"/><stop offset="0.8" stop-color="#30a0b0"/><stop offset="1" stop-color="#5040c0"/></linearGradient>
<filter id="zblur" x="-20%" y="-20%" width="140%" height="140%"><feGaussianBlur stdDeviation="2.2"/></filter><linearGradient id="zblu" gradientUnits="userSpaceOnUse" x1="150" y1="0" x2="240" y2="0"><stop offset="0" stop-color="#1a6a9c"/><stop offset="0.5" stop-color="#2458b0"/><stop offset="1" stop-color="#5a3ab0"/></linearGradient><linearGradient id="zmag1" gradientUnits="userSpaceOnUse" x1="160" y1="0" x2="218" y2="0"><stop offset="0" stop-color="#8a34b8"/><stop offset="0.5" stop-color="#ae2ea2"/><stop offset="1" stop-color="#b03070" stop-opacity="0.25"/></linearGradient><linearGradient id="zmag2" gradientUnits="userSpaceOnUse" x1="170" y1="0" x2="250" y2="0"><stop offset="0" stop-color="#8a34b8"/><stop offset="0.55" stop-color="#ae2ea2"/><stop offset="1" stop-color="#b03070" stop-opacity="0.2"/></linearGradient>
</defs>
<linearGradient id="gdeck" gradientUnits="userSpaceOnUse" x1="144" y1="0" x2="2700" y2="0"><stop offset="0" stop-color="#9c2d11"/><stop offset="0.6" stop-color="#9c2d11"/><stop offset="0.85" stop-color="#a23014"/><stop offset="1" stop-color="#a83417"/></linearGradient>
<path d="M144.4,1086.0 L155.5,1081.8 L166.7,1077.7 L177.8,1073.5 L188.8,1069.0 L198.9,1064.4 L208.8,1059.6 L218.8,1054.7 L228.8,1050.0 L249.8,1040.9 L270.8,1032.0 L291.9,1023.1 L313.0,1014.3 L330.5,1007.0 L348.0,999.7 L365.5,992.5 L383.0,985.2 L384.4,977.2 L403.3,969.6 L422.1,962.0 L441.0,954.4 L459.8,946.8 L497.2,931.6 L534.6,916.4 L571.9,901.2 L609.3,886.0 L611.9,878.0 L647.5,865.7 L683.1,853.3 L718.7,841.0 L754.2,828.5 L783.6,817.9 L813.0,807.1 L842.4,796.5 L872.0,786.2 L903.3,775.9 L934.7,765.9 L966.1,756.2 L997.6,746.5 L1028.5,737.1 L1059.5,727.8 L1090.6,718.6 L1121.7,709.8 L1153.5,701.3 L1185.4,693.1 L1217.2,685.0 L1249.0,676.4 L1277.7,667.9 L1306.2,659.0 L1334.8,650.2 L1363.5,642.0 L1393.1,634.5 L1422.9,627.5 L1452.7,620.8 L1482.5,613.8 L1509.0,607.3 L1535.4,600.7 L1561.9,594.2 L1588.4,587.8 L1615.1,581.6 L1641.9,575.6 L1668.7,569.6 L1695.5,563.5 L1720.6,557.8 L1745.8,552.0 L1770.9,546.2 L1796.0,540.2 L1819.2,534.3 L1842.3,528.1 L1865.4,522.0 L1888.6,516.4 L1913.2,511.2 L1937.9,506.3 L1962.6,501.7 L1987.3,497.0 L2011.1,492.4 L2034.9,487.9 L2058.7,483.3 L2082.5,478.6 L2102.1,474.5 L2121.6,470.2 L2141.1,465.8 L2160.6,461.4 L2179.5,457.2 L2198.4,453.0 L2217.2,448.7 L2236.0,444.2 L2251.9,440.0 L2267.7,435.6 L2283.5,431.1 L2299.3,426.8 L2304.4,425.6 L2309.6,424.4 L2314.8,423.4 L2320.0,422.3 L2324.7,421.1 L2329.4,419.8 L2334.1,418.7 L2338.8,418.2 L2342.9,418.6 L2346.9,419.6 L2350.9,420.8 L2355.0,421.9 L2364.3,423.8 L2373.6,425.7 L2382.8,427.7 L2392.0,430.0 L2403.1,433.4 L2414.1,437.0 L2425.1,440.9 L2436.0,445.0 L2447.6,449.6 L2459.1,454.3 L2470.5,459.2 L2482.0,464.0 L2493.5,468.8 L2505.0,473.5 L2516.5,478.3 L2528.0,483.0 L2536.0,486.3 L2544.0,489.5 L2552.0,492.7 L2560.0,496.0 L2566.4,498.7 L2572.9,501.5 L2579.3,504.2 L2585.7,507.0 L2591.3,513.2 L2596.9,519.4 L2602.5,525.7 L2608.0,532.0 L2614.1,539.2 L2620.1,546.4 L2626.1,553.7 L2632.0,561.0 L2638.4,569.1 L2644.7,577.4 L2650.9,585.6 L2657.0,594.0 L2662.0,600.9 L2666.9,607.8 L2671.6,614.8 L2676.0,622.0 L2679.7,628.8 L2683.2,635.7 L2686.3,642.8 L2689.0,650.0 L2691.0,657.1 L2692.4,664.4 L2693.7,671.7 L2695.0,679.0 L2687.6,686.5 L2680.2,694.0 L2672.9,701.5 L2665.4,708.8 L2657.7,716.0 L2647.8,724.7 L2637.8,733.3 L2627.7,741.7 L2617.4,749.9 L2607.0,758.0 L2594.6,767.3 L2582.2,776.5 L2569.6,785.5 L2556.8,794.3 L2544.0,803.0 L2528.8,812.9 L2513.5,822.6 L2498.0,832.1 L2482.5,841.6 L2467.0,851.0 L2450.2,861.2 L2433.5,871.5 L2416.6,881.6 L2399.7,891.5 L2382.5,901.0 L2364.3,910.5 L2345.9,919.7 L2327.3,928.7 L2308.7,937.4 L2290.0,946.0 L2269.4,955.2 L2248.7,964.1 L2228.0,972.9 L2207.2,981.7 L2186.5,990.5 L2164.6,1000.0 L2142.7,1009.7 L2120.7,1019.3 L2098.8,1028.8 L2076.7,1038.0 L2053.8,1047.3 L2030.9,1056.5 L2007.9,1065.6 L1984.8,1074.4 L1961.6,1083.0 L1937.6,1091.6 L1913.5,1099.9 L1889.4,1108.0 L1865.2,1116.0 L1841.0,1124.0 L1814.4,1132.7 L1787.7,1141.3 L1761.1,1149.7 L1734.3,1158.1 L1707.6,1166.4 L1679.2,1175.1 L1650.8,1183.8 L1622.4,1192.4 L1593.9,1200.7 L1565.3,1208.7 L1535.4,1216.6 L1505.5,1224.1 L1475.4,1231.4 L1445.4,1238.6 L1415.3,1245.7 L1384.5,1253.0 L1353.6,1260.3 L1322.8,1267.4 L1291.9,1274.5 L1261.0,1281.4 L1229.9,1288.3 L1198.7,1295.1 L1167.5,1301.8 L1136.3,1308.3 L1105.0,1314.5 L1074.7,1320.1 L1044.4,1325.3 L1014.0,1330.4 L983.6,1335.4 L953.2,1340.4 L918.8,1346.2 L884.4,1351.9 L850.1,1357.6 L815.7,1363.3 L781.3,1369.0 L766.0,1358.4 L717.6,1360.9 L669.2,1363.3 L620.8,1365.8 L572.4,1368.5 L549.8,1370.0 L527.2,1371.7 L504.6,1373.5 L482.0,1375.3 L471.2,1362.4 L450.4,1362.9 L429.5,1363.3 L408.7,1363.8 L387.9,1364.4 L362.6,1365.3 L337.3,1366.2 L312.0,1367.3 L286.7,1368.3 L273.5,1368.8 L260.3,1369.4 L247.1,1370.0 L233.9,1370.6 L222.0,1371.2 L210.2,1371.9 L198.3,1372.6 L186.5,1373.3 L183.5,1362.9 L180.5,1352.5 L179.7,1340.5 L177.5,1328.7 L176.2,1319.5 L175.0,1310.3 L173.8,1301.8 L172.7,1293.4 L171.5,1285.1 L170.4,1276.7 L169.3,1268.5 L168.2,1260.2 L167.1,1252.2 L166.0,1244.2 L164.9,1236.3 L163.8,1228.5 L162.8,1220.8 L161.7,1213.2 L160.7,1205.8 L159.7,1198.3 L158.7,1191.0 L157.7,1183.6 L156.7,1176.4 L155.7,1169.1 L154.8,1162.0 L153.8,1154.9 L152.9,1148.0 L151.9,1141.1 L151.0,1134.2 L150.0,1127.3 L149.1,1120.4 L148.2,1113.5 L146.3,1099.7 Z" fill="url(#gdeck)"/>
<g clip-path="url(#bclip)">
<path d="M166.0,1244.2 L175.0,1242.3 L184.1,1240.5 L193.1,1238.7 L202.1,1236.8 L211.2,1234.8 L220.5,1232.5 L229.7,1230.2 L239.0,1227.8 L248.3,1225.4 L257.6,1223.1 L276.3,1218.9 L295.1,1214.6 L313.9,1210.5 L332.7,1206.5 L351.6,1202.6 L368.0,1199.3 L384.5,1196.2 L401.0,1193.2 L417.5,1190.2 L433.9,1187.2 L451.3,1182.8 L468.6,1178.3 L485.9,1173.8 L503.2,1169.5 L520.6,1165.3 L556.0,1157.2 L591.4,1149.3 L626.9,1141.5 L662.3,1133.7 L697.8,1125.8 L731.3,1117.8 L764.8,1109.9 L798.3,1101.9 L831.7,1094.0 L865.2,1085.9 L893.5,1079.0 L921.8,1072.0 L950.1,1064.9 L978.4,1057.9 L1006.7,1051.0 L1035.9,1044.1 L1065.0,1037.2 L1094.2,1030.4 L1123.4,1023.6 L1152.6,1016.7 L1181.7,1009.6 L1210.9,1002.5 L1240.1,995.3 L1269.2,988.1 L1298.3,980.8 L1327.3,973.6 L1356.3,966.3 L1385.3,958.9 L1414.2,951.4 L1443.1,943.7 L1470.2,936.1 L1497.3,928.4 L1524.3,920.5 L1551.3,912.7 L1578.3,904.9 L1604.3,897.7 L1630.4,890.5 L1656.4,883.4 L1682.4,876.1 L1708.3,868.7 L1731.5,861.7 L1754.7,854.4 L1777.9,847.1 L1801.0,839.7 L1824.1,832.4 L1846.8,825.4 L1869.4,818.3 L1892.0,811.2 L1914.6,804.1 L1937.2,796.8 L1958.7,789.8 L1980.1,782.6 L2001.5,775.4 L2022.9,768.1 L2044.3,760.7 L2064.0,753.7 L2083.7,746.5 L2103.3,739.3 L2123.0,732.0 L2142.7,724.9 L2161.6,718.1 L2180.5,711.3 L2199.4,704.6 L2218.4,697.9 L2237.3,691.1 L2255.0,684.8 L2272.8,678.7 L2290.6,672.4 L2308.2,666.0 L2325.8,659.3 L2340.6,653.2 L2355.3,646.7 L2369.9,640.0 L2384.6,633.3 L2399.2,626.8 L2412.4,621.3 L2425.6,615.8 L2438.9,610.3 L2452.1,604.8 L2465.2,599.2 L2475.5,594.6 L2485.8,589.8 L2496.0,585.0 L2506.3,580.4 L2516.6,575.9 L2525.0,572.7 L2533.4,569.9 L2541.9,567.1 L2550.3,564.1 L2558.4,560.7 L2560.8,559.2 L2562.9,557.3 L2564.9,555.2 L2566.9,553.0 L2569.0,551.0 L2571.1,549.2 L2573.1,547.6 L2575.2,545.9 L2577.3,544.2 L2579.3,542.4 L2580.9,541.1 L2582.5,539.7 L2584.0,538.4 L2585.5,536.9 L2586.7,535.3 L2587.7,533.5 L2588.6,531.6 L2589.3,529.6 L2589.9,527.6 L2590.2,525.5 L2590.3,523.6 L2590.1,521.5 L2589.7,519.5 L2589.2,517.5 L2588.7,515.5 L2588.2,513.8 L2587.6,512.1 L2587.0,510.4 L2586.3,508.7 L2585.7,507.0 L2585.7,507.0 L2586.7,509.0 L2587.7,510.9 L2588.7,512.8 L2589.6,514.8 L2590.5,516.8 L2591.4,519.1 L2592.3,521.4 L2593.0,523.7 L2593.7,526.0 L2594.1,528.4 L2594.2,530.7 L2594.2,533.1 L2594.1,535.4 L2593.7,537.8 L2593.2,540.0 L2592.5,541.9 L2591.6,543.7 L2590.6,545.5 L2589.4,547.2 L2588.3,548.9 L2586.7,551.0 L2585.1,553.0 L2583.4,555.0 L2581.8,557.0 L2580.1,558.9 L2578.4,561.3 L2576.8,563.7 L2575.1,566.1 L2573.3,568.2 L2571.1,569.8 L2563.2,573.6 L2555.0,576.8 L2546.6,579.8 L2538.2,582.8 L2530.0,586.1 L2519.7,590.7 L2509.5,595.5 L2499.4,600.5 L2489.2,605.4 L2479.0,610.1 L2465.9,615.9 L2452.8,621.6 L2439.6,627.2 L2426.5,632.9 L2413.4,638.6 L2398.8,645.4 L2384.2,652.2 L2369.6,659.1 L2354.9,665.8 L2340.1,672.2 L2322.6,679.1 L2305.0,685.7 L2287.3,692.2 L2269.5,698.5 L2251.8,705.0 L2233.0,711.9 L2214.1,718.8 L2195.2,725.7 L2176.3,732.7 L2157.5,739.6 L2137.7,746.9 L2118.0,754.3 L2098.3,761.6 L2078.5,768.9 L2058.7,776.0 L2037.3,783.6 L2015.9,791.0 L1994.4,798.4 L1972.9,805.6 L1951.3,812.8 L1928.7,820.2 L1906.0,827.5 L1883.3,834.7 L1860.6,841.8 L1837.9,849.0 L1814.7,856.5 L1791.5,863.9 L1768.2,871.3 L1745.0,878.6 L1721.6,885.7 L1695.6,893.3 L1669.5,900.6 L1643.4,907.8 L1617.2,915.0 L1591.1,922.3 L1563.9,930.1 L1536.6,938.0 L1509.4,945.8 L1482.2,953.6 L1454.8,961.1 L1425.8,968.8 L1396.7,976.3 L1367.5,983.7 L1338.4,991.0 L1309.2,998.3 L1279.8,1005.6 L1250.4,1012.8 L1221.0,1019.9 L1191.6,1026.9 L1162.1,1033.9 L1132.7,1040.8 L1103.3,1047.6 L1073.8,1054.3 L1044.4,1061.0 L1015.0,1067.9 L986.4,1074.7 L957.8,1081.6 L929.3,1088.5 L900.7,1095.4 L872.1,1102.1 L838.3,1110.0 L804.5,1117.7 L770.7,1125.4 L736.8,1133.0 L703.0,1140.7 L667.2,1148.2 L631.4,1155.6 L595.6,1163.0 L559.9,1170.6 L524.1,1178.3 L506.6,1182.2 L489.2,1186.3 L471.7,1190.6 L454.3,1194.8 L436.8,1199.0 L420.2,1201.8 L403.5,1204.5 L386.9,1207.2 L370.3,1210.0 L353.7,1213.0 L334.7,1216.7 L315.8,1220.5 L296.9,1224.4 L278.0,1228.4 L259.1,1232.5 L249.8,1234.6 L240.4,1236.8 L231.1,1239.1 L221.7,1241.4 L212.3,1243.5 L203.3,1245.3 L194.3,1247.1 L185.2,1248.8 L176.1,1250.5 L167.1,1252.2 Z" fill="url(#g0)" stroke="url(#g0)" stroke-width="0.8"/>
<path d="M167.1,1252.2 L176.1,1250.5 L185.2,1248.8 L194.3,1247.1 L203.3,1245.3 L212.3,1243.5 L221.7,1241.4 L231.1,1239.1 L240.4,1236.8 L249.8,1234.6 L259.1,1232.5 L278.0,1228.4 L296.9,1224.4 L315.8,1220.5 L334.7,1216.7 L353.7,1213.0 L370.3,1210.0 L386.9,1207.2 L403.5,1204.5 L420.2,1201.8 L436.8,1199.0 L454.3,1194.8 L471.7,1190.6 L489.2,1186.3 L506.6,1182.2 L524.1,1178.3 L559.9,1170.6 L595.6,1163.0 L631.4,1155.6 L667.2,1148.2 L703.0,1140.7 L736.8,1133.0 L770.7,1125.4 L804.5,1117.7 L838.3,1110.0 L872.1,1102.1 L900.7,1095.4 L929.3,1088.5 L957.8,1081.6 L986.4,1074.7 L1015.0,1067.9 L1044.4,1061.0 L1073.8,1054.3 L1103.3,1047.6 L1132.7,1040.8 L1162.1,1033.9 L1191.6,1026.9 L1221.0,1019.9 L1250.4,1012.8 L1279.8,1005.6 L1309.2,998.3 L1338.4,991.0 L1367.5,983.7 L1396.7,976.3 L1425.8,968.8 L1454.8,961.1 L1482.2,953.6 L1509.4,945.8 L1536.6,938.0 L1563.9,930.1 L1591.1,922.3 L1617.2,915.0 L1643.4,907.8 L1669.5,900.6 L1695.6,893.3 L1721.6,885.7 L1745.0,878.6 L1768.2,871.3 L1791.5,863.9 L1814.7,856.5 L1837.9,849.0 L1860.6,841.8 L1883.3,834.7 L1906.0,827.5 L1928.7,820.2 L1951.3,812.8 L1972.9,805.6 L1994.4,798.4 L2015.9,791.0 L2037.3,783.6 L2058.7,776.0 L2078.5,768.9 L2098.3,761.6 L2118.0,754.3 L2137.7,746.9 L2157.5,739.6 L2176.3,732.7 L2195.2,725.7 L2214.1,718.8 L2233.0,711.9 L2251.8,705.0 L2269.5,698.5 L2287.3,692.2 L2305.0,685.7 L2322.6,679.1 L2340.1,672.2 L2354.9,665.8 L2369.6,659.1 L2384.2,652.2 L2398.8,645.4 L2413.4,638.6 L2426.5,632.9 L2439.6,627.2 L2452.8,621.6 L2465.9,615.9 L2479.0,610.1 L2489.2,605.4 L2499.4,600.5 L2509.5,595.5 L2519.7,590.7 L2530.0,586.1 L2538.2,582.8 L2546.6,579.8 L2555.0,576.8 L2563.2,573.6 L2571.1,569.8 L2573.3,568.2 L2575.1,566.1 L2576.8,563.7 L2578.4,561.3 L2580.1,558.9 L2581.8,557.0 L2583.4,555.0 L2585.1,553.0 L2586.7,551.0 L2588.3,548.9 L2589.4,547.2 L2590.6,545.5 L2591.6,543.7 L2592.5,541.9 L2593.2,540.0 L2593.7,537.8 L2594.1,535.4 L2594.2,533.1 L2594.2,530.7 L2594.1,528.4 L2593.7,526.0 L2593.0,523.7 L2592.3,521.4 L2591.4,519.1 L2590.5,516.8 L2589.6,514.8 L2588.7,512.8 L2587.7,510.9 L2586.7,509.0 L2585.7,507.0 L2585.7,507.0 L2587.0,509.2 L2588.4,511.4 L2589.8,513.6 L2591.1,515.9 L2592.3,518.1 L2593.6,520.7 L2594.8,523.3 L2596.0,525.9 L2597.1,528.5 L2597.9,531.2 L2598.6,533.9 L2599.1,536.6 L2599.5,539.3 L2599.7,542.1 L2599.7,544.8 L2599.5,546.9 L2599.2,549.1 L2598.6,551.2 L2598.0,553.3 L2597.2,555.4 L2596.2,557.7 L2595.0,560.1 L2593.8,562.4 L2592.5,564.7 L2591.2,566.9 L2589.9,569.5 L2588.7,572.3 L2587.4,574.9 L2585.8,577.2 L2583.8,579.0 L2576.2,583.0 L2568.1,586.5 L2559.8,589.6 L2551.5,592.8 L2543.3,596.2 L2533.1,601.1 L2523.0,606.1 L2512.9,611.2 L2502.9,616.2 L2492.7,621.1 L2479.7,627.1 L2466.7,633.0 L2453.6,638.8 L2440.5,644.6 L2427.5,650.5 L2412.9,657.5 L2398.3,664.6 L2383.7,671.7 L2369.1,678.6 L2354.3,685.2 L2336.8,692.3 L2319.2,699.1 L2301.6,705.8 L2283.9,712.3 L2266.2,718.9 L2247.4,726.1 L2228.6,733.2 L2209.8,740.3 L2191.0,747.3 L2172.1,754.4 L2152.3,761.9 L2132.6,769.4 L2112.8,776.8 L2092.9,784.2 L2073.1,791.5 L2051.6,799.1 L2030.1,806.7 L2008.5,814.2 L1986.9,821.6 L1965.3,828.9 L1942.6,836.4 L1919.9,843.8 L1897.1,851.1 L1874.4,858.4 L1851.6,865.7 L1828.3,873.2 L1805.0,880.8 L1781.7,888.3 L1758.3,895.7 L1734.9,902.8 L1708.7,910.5 L1682.5,917.9 L1656.3,925.2 L1630.0,932.4 L1603.8,939.8 L1576.4,947.6 L1549.0,955.5 L1521.5,963.3 L1494.1,971.0 L1466.5,978.5 L1437.3,986.3 L1408.0,993.8 L1378.7,1001.2 L1349.4,1008.5 L1320.1,1015.8 L1290.4,1023.1 L1260.8,1030.2 L1231.1,1037.3 L1201.4,1044.3 L1171.6,1051.2 L1142.0,1058.0 L1112.3,1064.7 L1082.6,1071.3 L1053.0,1078.0 L1023.3,1084.7 L994.4,1091.4 L965.6,1098.2 L936.7,1105.0 L907.8,1111.8 L878.9,1118.4 L844.8,1126.0 L810.7,1133.4 L776.5,1140.8 L742.4,1148.2 L708.3,1155.6 L672.1,1162.7 L636.0,1169.7 L599.9,1176.8 L563.8,1183.9 L527.7,1191.2 L510.0,1195.0 L492.4,1198.9 L474.8,1202.9 L457.3,1206.9 L439.7,1210.9 L422.9,1213.3 L406.1,1215.8 L389.3,1218.2 L372.6,1220.8 L355.8,1223.5 L336.8,1226.9 L317.7,1230.5 L298.7,1234.2 L279.7,1238.0 L260.7,1241.8 L251.2,1243.8 L241.8,1245.9 L232.4,1248.1 L222.9,1250.2 L213.5,1252.2 L204.5,1253.9 L195.4,1255.5 L186.3,1257.1 L177.2,1258.6 L168.2,1260.2 Z" fill="url(#g1)" stroke="url(#g1)" stroke-width="0.8"/>
<path d="M168.2,1260.2 L177.2,1258.6 L186.3,1257.1 L195.4,1255.5 L204.5,1253.9 L213.5,1252.2 L222.9,1250.2 L232.4,1248.1 L241.8,1245.9 L251.2,1243.8 L260.7,1241.8 L279.7,1238.0 L298.7,1234.2 L317.7,1230.5 L336.8,1226.9 L355.8,1223.5 L372.6,1220.8 L389.3,1218.2 L406.1,1215.8 L422.9,1213.3 L439.7,1210.9 L457.3,1206.9 L474.8,1202.9 L492.4,1198.9 L510.0,1195.0 L527.7,1191.2 L563.8,1183.9 L599.9,1176.8 L636.0,1169.7 L672.1,1162.7 L708.3,1155.6 L742.4,1148.2 L776.5,1140.8 L810.7,1133.4 L844.8,1126.0 L878.9,1118.4 L907.8,1111.8 L936.7,1105.0 L965.6,1098.2 L994.4,1091.4 L1023.3,1084.7 L1053.0,1078.0 L1082.6,1071.3 L1112.3,1064.7 L1142.0,1058.0 L1171.6,1051.2 L1201.4,1044.3 L1231.1,1037.3 L1260.8,1030.2 L1290.4,1023.1 L1320.1,1015.8 L1349.4,1008.5 L1378.7,1001.2 L1408.0,993.8 L1437.3,986.3 L1466.5,978.5 L1494.1,971.0 L1521.5,963.3 L1549.0,955.5 L1576.4,947.6 L1603.8,939.8 L1630.0,932.4 L1656.3,925.2 L1682.5,917.9 L1708.7,910.5 L1734.9,902.8 L1758.3,895.7 L1781.7,888.3 L1805.0,880.8 L1828.3,873.2 L1851.6,865.7 L1874.4,858.4 L1897.1,851.1 L1919.9,843.8 L1942.6,836.4 L1965.3,828.9 L1986.9,821.6 L2008.5,814.2 L2030.1,806.7 L2051.6,799.1 L2073.1,791.5 L2092.9,784.2 L2112.8,776.8 L2132.6,769.4 L2152.3,761.9 L2172.1,754.4 L2191.0,747.3 L2209.8,740.3 L2228.6,733.2 L2247.4,726.1 L2266.2,718.9 L2283.9,712.3 L2301.6,705.8 L2319.2,699.1 L2336.8,692.3 L2354.3,685.2 L2369.1,678.6 L2383.7,671.7 L2398.3,664.6 L2412.9,657.5 L2427.5,650.5 L2440.5,644.6 L2453.6,638.8 L2466.7,633.0 L2479.7,627.1 L2492.7,621.1 L2502.9,616.2 L2512.9,611.2 L2523.0,606.1 L2533.1,601.1 L2543.3,596.2 L2551.5,592.8 L2559.8,589.6 L2568.1,586.5 L2576.2,583.0 L2583.8,579.0 L2585.8,577.2 L2587.4,574.9 L2588.7,572.3 L2589.9,569.5 L2591.2,566.9 L2592.5,564.7 L2593.8,562.4 L2595.0,560.1 L2596.2,557.7 L2597.2,555.4 L2598.0,553.3 L2598.6,551.2 L2599.2,549.1 L2599.5,546.9 L2599.7,544.8 L2599.7,542.1 L2599.5,539.3 L2599.1,536.6 L2598.6,533.9 L2597.9,531.2 L2597.1,528.5 L2596.0,525.9 L2594.8,523.3 L2593.6,520.7 L2592.3,518.1 L2591.1,515.9 L2589.8,513.6 L2588.4,511.4 L2587.0,509.2 L2585.7,507.0 L2585.7,507.0 L2587.4,509.5 L2589.1,511.9 L2590.8,514.4 L2592.4,516.9 L2594.0,519.4 L2595.7,522.3 L2597.3,525.2 L2598.9,528.1 L2600.4,531.0 L2601.7,534.1 L2602.8,537.1 L2603.8,540.1 L2604.7,543.3 L2605.5,546.4 L2606.1,549.5 L2606.3,552.0 L2606.5,554.4 L2606.4,556.9 L2606.3,559.4 L2605.9,561.8 L2605.4,564.5 L2604.7,567.1 L2603.8,569.7 L2602.9,572.3 L2602.0,574.9 L2601.1,577.8 L2600.3,580.8 L2599.4,583.7 L2598.1,586.2 L2596.2,588.2 L2588.9,592.5 L2580.9,596.2 L2572.7,599.6 L2564.3,602.9 L2556.2,606.5 L2546.1,611.6 L2536.1,616.8 L2526.1,622.0 L2516.1,627.2 L2506.0,632.2 L2493.0,638.4 L2480.1,644.5 L2467.0,650.5 L2454.0,656.5 L2441.1,662.6 L2426.5,669.7 L2411.9,677.1 L2397.4,684.4 L2382.7,691.5 L2367.9,698.3 L2350.5,705.7 L2333.0,712.7 L2315.4,719.5 L2297.7,726.3 L2280.1,733.1 L2261.3,740.4 L2242.6,747.7 L2223.8,754.9 L2205.0,762.1 L2186.2,769.3 L2166.4,777.0 L2146.5,784.6 L2126.7,792.1 L2106.8,799.6 L2086.9,807.0 L2065.3,814.8 L2043.7,822.5 L2022.1,830.1 L2000.4,837.6 L1978.7,845.1 L1956.0,852.7 L1933.2,860.2 L1910.4,867.6 L1887.6,875.0 L1864.8,882.4 L1841.3,890.0 L1817.9,897.7 L1794.5,905.3 L1771.1,912.7 L1747.5,920.0 L1721.3,927.7 L1695.0,935.2 L1668.7,942.5 L1642.4,949.8 L1616.0,957.2 L1588.4,965.0 L1560.8,972.9 L1533.1,980.7 L1505.5,988.4 L1477.8,995.9 L1448.4,1003.6 L1419.0,1011.2 L1389.5,1018.6 L1360.0,1025.9 L1330.5,1033.2 L1300.7,1040.4 L1270.7,1047.5 L1240.8,1054.6 L1210.9,1061.6 L1180.9,1068.4 L1151.0,1075.2 L1121.1,1081.8 L1091.2,1088.3 L1061.3,1094.9 L1031.4,1101.5 L1002.3,1108.1 L973.1,1114.8 L944.0,1121.6 L914.8,1128.2 L885.7,1134.7 L851.3,1142.0 L816.8,1149.2 L782.4,1156.4 L747.9,1163.5 L713.4,1170.6 L677.0,1177.3 L640.5,1183.9 L604.1,1190.6 L567.6,1197.4 L531.2,1204.3 L513.4,1207.8 L495.7,1211.5 L478.0,1215.3 L460.2,1219.1 L442.5,1222.8 L425.6,1225.0 L408.7,1227.2 L391.8,1229.3 L374.9,1231.6 L358.0,1234.2 L338.8,1237.3 L319.6,1240.7 L300.5,1244.2 L281.4,1247.8 L262.3,1251.4 L252.7,1253.2 L243.2,1255.2 L233.7,1257.2 L224.2,1259.2 L214.7,1261.0 L205.6,1262.6 L196.5,1264.1 L187.5,1265.6 L178.4,1267.0 L169.3,1268.5 Z" fill="url(#g2)" stroke="url(#g2)" stroke-width="0.8"/>
<path d="M169.3,1268.5 L178.4,1267.0 L187.5,1265.6 L196.5,1264.1 L205.6,1262.6 L214.7,1261.0 L224.2,1259.2 L233.7,1257.2 L243.2,1255.2 L252.7,1253.2 L262.3,1251.4 L281.4,1247.8 L300.5,1244.2 L319.6,1240.7 L338.8,1237.3 L358.0,1234.2 L374.9,1231.6 L391.8,1229.3 L408.7,1227.2 L425.6,1225.0 L442.5,1222.8 L460.2,1219.1 L478.0,1215.3 L495.7,1211.5 L513.4,1207.8 L531.2,1204.3 L567.6,1197.4 L604.1,1190.6 L640.5,1183.9 L677.0,1177.3 L713.4,1170.6 L747.9,1163.5 L782.4,1156.4 L816.8,1149.2 L851.3,1142.0 L885.7,1134.7 L914.8,1128.2 L944.0,1121.6 L973.1,1114.8 L1002.3,1108.1 L1031.4,1101.5 L1061.3,1094.9 L1091.2,1088.3 L1121.1,1081.8 L1151.0,1075.2 L1180.9,1068.4 L1210.9,1061.6 L1240.8,1054.6 L1270.7,1047.5 L1300.7,1040.4 L1330.5,1033.2 L1360.0,1025.9 L1389.5,1018.6 L1419.0,1011.2 L1448.4,1003.6 L1477.8,995.9 L1505.5,988.4 L1533.1,980.7 L1560.8,972.9 L1588.4,965.0 L1616.0,957.2 L1642.4,949.8 L1668.7,942.5 L1695.0,935.2 L1721.3,927.7 L1747.5,920.0 L1771.1,912.7 L1794.5,905.3 L1817.9,897.7 L1841.3,890.0 L1864.8,882.4 L1887.6,875.0 L1910.4,867.6 L1933.2,860.2 L1956.0,852.7 L1978.7,845.1 L2000.4,837.6 L2022.1,830.1 L2043.7,822.5 L2065.3,814.8 L2086.9,807.0 L2106.8,799.6 L2126.7,792.1 L2146.5,784.6 L2166.4,777.0 L2186.2,769.3 L2205.0,762.1 L2223.8,754.9 L2242.6,747.7 L2261.3,740.4 L2280.1,733.1 L2297.7,726.3 L2315.4,719.5 L2333.0,712.7 L2350.5,705.7 L2367.9,698.3 L2382.7,691.5 L2397.4,684.4 L2411.9,677.1 L2426.5,669.7 L2441.1,662.6 L2454.0,656.5 L2467.0,650.5 L2480.1,644.5 L2493.0,638.4 L2506.0,632.2 L2516.1,627.2 L2526.1,622.0 L2536.1,616.8 L2546.1,611.6 L2556.2,606.5 L2564.3,602.9 L2572.7,599.6 L2580.9,596.2 L2588.9,592.5 L2596.2,588.2 L2598.1,586.2 L2599.4,583.7 L2600.3,580.8 L2601.1,577.8 L2602.0,574.9 L2602.9,572.3 L2603.8,569.7 L2604.7,567.1 L2605.4,564.5 L2605.9,561.8 L2606.3,559.4 L2606.4,556.9 L2606.5,554.4 L2606.3,552.0 L2606.1,549.5 L2605.5,546.4 L2604.7,543.3 L2603.8,540.1 L2602.8,537.1 L2601.7,534.1 L2600.4,531.0 L2598.9,528.1 L2597.3,525.2 L2595.7,522.3 L2594.0,519.4 L2592.4,516.9 L2590.8,514.4 L2589.1,511.9 L2587.4,509.5 L2585.7,507.0 L2585.7,507.0 L2587.7,509.7 L2589.8,512.5 L2591.8,515.2 L2593.8,518.0 L2595.7,520.8 L2597.8,523.9 L2599.8,527.1 L2601.8,530.3 L2603.7,533.6 L2605.4,536.9 L2607.1,540.3 L2608.6,543.7 L2610.0,547.2 L2611.3,550.7 L2612.4,554.3 L2613.1,557.0 L2613.7,559.8 L2614.2,562.7 L2614.5,565.5 L2614.6,568.3 L2614.6,571.2 L2614.3,574.2 L2613.9,577.1 L2613.3,580.0 L2612.7,582.9 L2612.3,586.0 L2611.9,589.3 L2611.3,592.5 L2610.3,595.2 L2608.6,597.4 L2601.5,602.0 L2593.7,605.9 L2585.5,609.5 L2577.2,613.0 L2569.1,616.8 L2559.1,622.1 L2549.1,627.5 L2539.2,632.9 L2529.2,638.2 L2519.1,643.5 L2506.3,649.8 L2493.4,656.1 L2480.4,662.2 L2467.5,668.4 L2454.6,674.7 L2440.0,682.1 L2425.4,689.7 L2410.9,697.2 L2396.3,704.6 L2381.5,711.5 L2364.1,719.1 L2346.6,726.4 L2329.0,733.4 L2311.4,740.3 L2293.8,747.3 L2275.1,754.8 L2256.4,762.3 L2237.7,769.7 L2219.0,777.1 L2200.2,784.4 L2180.3,792.2 L2160.4,799.9 L2140.5,807.6 L2120.5,815.2 L2100.5,822.6 L2078.9,830.6 L2057.2,838.4 L2035.5,846.1 L2013.8,853.8 L1992.1,861.3 L1969.3,869.1 L1946.4,876.7 L1923.6,884.2 L1900.7,891.7 L1877.8,899.2 L1854.3,906.9 L1830.8,914.7 L1807.3,922.3 L1783.8,929.8 L1760.1,937.1 L1733.8,944.9 L1707.5,952.5 L1681.0,959.9 L1654.6,967.2 L1628.2,974.6 L1600.4,982.5 L1572.5,990.3 L1544.7,998.1 L1516.9,1005.8 L1489.0,1013.3 L1459.4,1021.0 L1429.9,1028.6 L1400.3,1036.0 L1370.6,1043.3 L1341.0,1050.5 L1310.9,1057.7 L1280.7,1064.9 L1250.5,1071.9 L1220.3,1078.8 L1190.1,1085.7 L1160.0,1092.3 L1129.9,1098.9 L1099.8,1105.3 L1069.6,1111.8 L1039.5,1118.3 L1010.1,1124.9 L980.7,1131.5 L951.3,1138.1 L921.9,1144.7 L892.4,1151.0 L857.7,1158.1 L822.9,1165.1 L788.2,1171.9 L753.4,1178.7 L718.6,1185.6 L681.8,1191.9 L645.0,1198.2 L608.3,1204.4 L571.5,1210.8 L534.7,1217.3 L516.8,1220.7 L499.0,1224.1 L481.1,1227.7 L463.2,1231.3 L445.4,1234.8 L428.3,1236.7 L411.3,1238.6 L394.2,1240.5 L377.2,1242.5 L360.2,1244.8 L340.9,1247.7 L321.6,1250.9 L302.3,1254.2 L283.1,1257.5 L263.8,1260.9 L254.2,1262.6 L244.6,1264.5 L235.1,1266.4 L225.5,1268.2 L215.9,1269.9 L206.8,1271.4 L197.7,1272.7 L188.6,1274.1 L179.5,1275.4 L170.4,1276.7 Z" fill="url(#g3)" stroke="url(#g3)" stroke-width="0.8"/>
<path d="M170.4,1276.7 L179.5,1275.4 L188.6,1274.1 L197.7,1272.7 L206.8,1271.4 L215.9,1269.9 L225.5,1268.2 L235.1,1266.4 L244.6,1264.5 L254.2,1262.6 L263.8,1260.9 L283.1,1257.5 L302.3,1254.2 L321.6,1250.9 L340.9,1247.7 L360.2,1244.8 L377.2,1242.5 L394.2,1240.5 L411.3,1238.6 L428.3,1236.7 L445.4,1234.8 L463.2,1231.3 L481.1,1227.7 L499.0,1224.1 L516.8,1220.7 L534.7,1217.3 L571.5,1210.8 L608.3,1204.4 L645.0,1198.2 L681.8,1191.9 L718.6,1185.6 L753.4,1178.7 L788.2,1171.9 L822.9,1165.1 L857.7,1158.1 L892.4,1151.0 L921.9,1144.7 L951.3,1138.1 L980.7,1131.5 L1010.1,1124.9 L1039.5,1118.3 L1069.6,1111.8 L1099.8,1105.3 L1129.9,1098.9 L1160.0,1092.3 L1190.1,1085.7 L1220.3,1078.8 L1250.5,1071.9 L1280.7,1064.9 L1310.9,1057.7 L1341.0,1050.5 L1370.6,1043.3 L1400.3,1036.0 L1429.9,1028.6 L1459.4,1021.0 L1489.0,1013.3 L1516.9,1005.8 L1544.7,998.1 L1572.5,990.3 L1600.4,982.5 L1628.2,974.6 L1654.6,967.2 L1681.0,959.9 L1707.5,952.5 L1733.8,944.9 L1760.1,937.1 L1783.8,929.8 L1807.3,922.3 L1830.8,914.7 L1854.3,906.9 L1877.8,899.2 L1900.7,891.7 L1923.6,884.2 L1946.4,876.7 L1969.3,869.1 L1992.1,861.3 L2013.8,853.8 L2035.5,846.1 L2057.2,838.4 L2078.9,830.6 L2100.5,822.6 L2120.5,815.2 L2140.5,807.6 L2160.4,799.9 L2180.3,792.2 L2200.2,784.4 L2219.0,777.1 L2237.7,769.7 L2256.4,762.3 L2275.1,754.8 L2293.8,747.3 L2311.4,740.3 L2329.0,733.4 L2346.6,726.4 L2364.1,719.1 L2381.5,711.5 L2396.3,704.6 L2410.9,697.2 L2425.4,689.7 L2440.0,682.1 L2454.6,674.7 L2467.5,668.4 L2480.4,662.2 L2493.4,656.1 L2506.3,649.8 L2519.1,643.5 L2529.2,638.2 L2539.2,632.9 L2549.1,627.5 L2559.1,622.1 L2569.1,616.8 L2577.2,613.0 L2585.5,609.5 L2593.7,605.9 L2601.5,602.0 L2608.6,597.4 L2610.3,595.2 L2611.3,592.5 L2611.9,589.3 L2612.3,586.0 L2612.7,582.9 L2613.3,580.0 L2613.9,577.1 L2614.3,574.2 L2614.6,571.2 L2614.6,568.3 L2614.5,565.5 L2614.2,562.7 L2613.7,559.8 L2613.1,557.0 L2612.4,554.3 L2611.3,550.7 L2610.0,547.2 L2608.6,543.7 L2607.1,540.3 L2605.4,536.9 L2603.7,533.6 L2601.8,530.3 L2599.8,527.1 L2597.8,523.9 L2595.7,520.8 L2593.8,518.0 L2591.8,515.2 L2589.8,512.5 L2587.7,509.7 L2585.7,507.0 L2585.7,507.0 L2588.0,509.9 L2590.2,512.9 L2592.5,515.8 L2594.7,518.7 L2596.9,521.7 L2599.2,525.1 L2601.5,528.5 L2603.8,532.0 L2605.9,535.5 L2608.0,539.0 L2609.9,542.7 L2611.8,546.4 L2613.5,550.2 L2615.1,554.0 L2616.6,557.8 L2617.7,560.8 L2618.6,563.8 L2619.4,566.9 L2620.0,570.0 L2620.5,573.1 L2620.7,576.2 L2620.7,579.3 L2620.6,582.5 L2620.3,585.6 L2620.0,588.8 L2619.8,592.1 L2619.7,595.5 L2619.4,598.9 L2618.5,601.8 L2616.8,604.1 L2610.0,608.9 L2602.3,613.1 L2594.1,616.8 L2585.7,620.5 L2577.7,624.4 L2567.7,629.9 L2557.7,635.4 L2547.8,641.0 L2537.8,646.5 L2527.8,651.8 L2515.0,658.4 L2502.1,664.7 L2489.2,671.0 L2476.3,677.3 L2463.4,683.8 L2448.8,691.3 L2434.3,699.0 L2419.7,706.7 L2405.1,714.2 L2390.3,721.4 L2373.0,729.1 L2355.5,736.5 L2337.9,743.7 L2320.3,750.7 L2302.7,757.9 L2284.0,765.5 L2265.4,773.1 L2246.7,780.6 L2228.0,788.1 L2209.2,795.5 L2189.3,803.4 L2169.3,811.2 L2149.4,818.9 L2129.3,826.6 L2109.3,834.1 L2087.6,842.1 L2065.9,850.0 L2044.2,857.9 L2022.4,865.6 L2000.6,873.2 L1977.7,881.0 L1954.9,888.7 L1931.9,896.3 L1909.0,903.9 L1886.1,911.4 L1862.5,919.2 L1839.0,927.0 L1815.4,934.7 L1791.8,942.3 L1768.1,949.6 L1741.8,957.4 L1715.3,965.0 L1688.9,972.5 L1662.3,979.8 L1635.8,987.2 L1607.9,995.1 L1580.0,1002.9 L1552.0,1010.7 L1524.0,1018.3 L1496.0,1025.8 L1466.4,1033.5 L1436.7,1041.1 L1407.0,1048.5 L1377.3,1055.8 L1347.5,1063.0 L1317.3,1070.2 L1287.0,1077.3 L1256.7,1084.2 L1226.3,1091.1 L1196.0,1097.9 L1165.8,1104.5 L1135.5,1111.0 L1105.3,1117.4 L1075.0,1123.8 L1044.8,1130.2 L1015.2,1136.7 L985.6,1143.3 L956.1,1149.8 L926.5,1156.2 L896.9,1162.4 L861.9,1169.4 L827.0,1176.2 L792.0,1182.8 L757.0,1189.4 L722.0,1196.1 L685.0,1202.1 L648.0,1208.1 L611.0,1214.1 L574.0,1220.1 L537.0,1226.4 L519.1,1229.5 L501.1,1232.9 L483.2,1236.2 L465.2,1239.7 L447.3,1243.0 L430.1,1244.8 L413.0,1246.4 L395.8,1248.1 L378.7,1250.0 L361.6,1252.1 L342.2,1254.8 L322.9,1257.8 L303.5,1260.9 L284.2,1264.1 L264.9,1267.3 L255.2,1269.0 L245.6,1270.7 L236.0,1272.5 L226.3,1274.3 L216.7,1275.9 L207.6,1277.2 L198.5,1278.5 L189.4,1279.8 L180.3,1281.0 L171.2,1282.2 Z" fill="url(#g4)" stroke="url(#g4)" stroke-width="0.8"/>
<path d="M171.2,1282.2 L180.3,1281.0 L189.4,1279.8 L198.5,1278.5 L207.6,1277.2 L216.7,1275.9 L226.3,1274.3 L236.0,1272.5 L245.6,1270.7 L255.2,1269.0 L264.9,1267.3 L284.2,1264.1 L303.5,1260.9 L322.9,1257.8 L342.2,1254.8 L361.6,1252.1 L378.7,1250.0 L395.8,1248.1 L413.0,1246.4 L430.1,1244.8 L447.3,1243.0 L465.2,1239.7 L483.2,1236.2 L501.1,1232.9 L519.1,1229.5 L537.0,1226.4 L574.0,1220.1 L611.0,1214.1 L648.0,1208.1 L685.0,1202.1 L722.0,1196.1 L757.0,1189.4 L792.0,1182.8 L827.0,1176.2 L861.9,1169.4 L896.9,1162.4 L926.5,1156.2 L956.1,1149.8 L985.6,1143.3 L1015.2,1136.7 L1044.8,1130.2 L1075.0,1123.8 L1105.3,1117.4 L1135.5,1111.0 L1165.8,1104.5 L1196.0,1097.9 L1226.3,1091.1 L1256.7,1084.2 L1287.0,1077.3 L1317.3,1070.2 L1347.5,1063.0 L1377.3,1055.8 L1407.0,1048.5 L1436.7,1041.1 L1466.4,1033.5 L1496.0,1025.8 L1524.0,1018.3 L1552.0,1010.7 L1580.0,1002.9 L1607.9,995.1 L1635.8,987.2 L1662.3,979.8 L1688.9,972.5 L1715.3,965.0 L1741.8,957.4 L1768.1,949.6 L1791.8,942.3 L1815.4,934.7 L1839.0,927.0 L1862.5,919.2 L1886.1,911.4 L1909.0,903.9 L1931.9,896.3 L1954.9,888.7 L1977.7,881.0 L2000.6,873.2 L2022.4,865.6 L2044.2,857.9 L2065.9,850.0 L2087.6,842.1 L2109.3,834.1 L2129.3,826.6 L2149.4,818.9 L2169.3,811.2 L2189.3,803.4 L2209.2,795.5 L2228.0,788.1 L2246.7,780.6 L2265.4,773.1 L2284.0,765.5 L2302.7,757.9 L2320.3,750.7 L2337.9,743.7 L2355.5,736.5 L2373.0,729.1 L2390.3,721.4 L2405.1,714.2 L2419.7,706.7 L2434.3,699.0 L2448.8,691.3 L2463.4,683.8 L2476.3,677.3 L2489.2,671.0 L2502.1,664.7 L2515.0,658.4 L2527.8,651.8 L2537.8,646.5 L2547.8,641.0 L2557.7,635.4 L2567.7,629.9 L2577.7,624.4 L2585.7,620.5 L2594.1,616.8 L2602.3,613.1 L2610.0,608.9 L2616.8,604.1 L2618.5,601.8 L2619.4,598.9 L2619.7,595.5 L2619.8,592.1 L2620.0,588.8 L2620.3,585.6 L2620.6,582.5 L2620.7,579.3 L2620.7,576.2 L2620.5,573.1 L2620.0,570.0 L2619.4,566.9 L2618.6,563.8 L2617.7,560.8 L2616.6,557.8 L2615.1,554.0 L2613.5,550.2 L2611.8,546.4 L2609.9,542.7 L2608.0,539.0 L2605.9,535.5 L2603.8,532.0 L2601.5,528.5 L2599.2,525.1 L2596.9,521.7 L2594.7,518.7 L2592.5,515.8 L2590.2,512.9 L2588.0,509.9 L2585.7,507.0 L2585.7,507.0 L2588.2,510.1 L2590.7,513.3 L2593.2,516.4 L2595.7,519.5 L2598.1,522.7 L2600.7,526.4 L2603.3,530.0 L2605.8,533.7 L2608.2,537.4 L2610.5,541.2 L2612.8,545.1 L2615.0,549.1 L2617.1,553.2 L2619.1,557.3 L2621.0,561.4 L2622.4,564.6 L2623.6,567.9 L2624.8,571.2 L2625.7,574.6 L2626.5,578.0 L2627.0,581.3 L2627.3,584.7 L2627.5,588.0 L2627.5,591.4 L2627.4,594.8 L2627.5,598.3 L2627.7,601.9 L2627.7,605.5 L2627.0,608.6 L2625.4,611.1 L2618.7,616.1 L2611.1,620.5 L2602.9,624.4 L2594.5,628.2 L2586.4,632.3 L2576.5,638.0 L2566.6,643.7 L2556.7,649.4 L2546.7,655.0 L2536.7,660.5 L2523.9,667.2 L2511.1,673.7 L2498.2,680.1 L2485.3,686.6 L2472.5,693.1 L2457.9,700.9 L2443.3,708.7 L2428.8,716.6 L2414.1,724.3 L2399.3,731.6 L2382.0,739.4 L2364.5,747.0 L2347.0,754.3 L2329.4,761.5 L2311.8,768.8 L2293.2,776.6 L2274.5,784.3 L2255.9,791.9 L2237.2,799.5 L2218.5,807.0 L2198.5,815.0 L2178.5,822.9 L2158.5,830.7 L2138.4,838.4 L2118.3,846.0 L2096.6,854.1 L2074.8,862.1 L2053.0,870.0 L2031.2,877.8 L2009.3,885.5 L1986.4,893.4 L1963.5,901.2 L1940.5,908.9 L1917.6,916.5 L1894.6,924.1 L1871.0,931.9 L1847.4,939.8 L1823.8,947.5 L1800.1,955.1 L1776.3,962.5 L1749.9,970.4 L1723.4,978.0 L1696.9,985.5 L1670.3,992.9 L1643.7,1000.3 L1615.7,1008.1 L1587.6,1015.9 L1559.5,1023.7 L1531.4,1031.3 L1503.2,1038.7 L1473.5,1046.4 L1443.7,1053.9 L1413.9,1061.3 L1384.1,1068.6 L1354.3,1075.8 L1323.9,1083.0 L1293.4,1090.0 L1263.0,1097.0 L1232.5,1103.8 L1202.0,1110.5 L1171.7,1117.1 L1141.3,1123.5 L1110.9,1129.8 L1080.5,1136.1 L1050.2,1142.5 L1020.4,1148.9 L990.7,1155.4 L961.0,1161.8 L931.2,1168.2 L901.4,1174.3 L866.3,1181.1 L831.1,1187.6 L795.9,1194.0 L760.7,1200.4 L725.5,1206.8 L688.3,1212.6 L651.1,1218.2 L613.8,1224.0 L576.6,1229.7 L539.4,1235.7 L521.4,1238.7 L503.3,1241.8 L485.3,1245.1 L467.3,1248.3 L449.2,1251.5 L432.0,1253.0 L414.7,1254.5 L397.5,1256.0 L380.3,1257.6 L363.1,1259.5 L343.6,1262.1 L324.2,1264.9 L304.8,1267.9 L285.4,1270.9 L266.0,1274.0 L256.3,1275.5 L246.6,1277.2 L236.9,1278.9 L227.2,1280.5 L217.5,1282.0 L208.4,1283.3 L199.3,1284.5 L190.2,1285.6 L181.0,1286.7 L171.9,1287.9 Z" fill="url(#g5)" stroke="url(#g5)" stroke-width="0.8"/>
<path d="M171.9,1287.9 L181.0,1286.7 L190.2,1285.6 L199.3,1284.5 L208.4,1283.3 L217.5,1282.0 L227.2,1280.5 L236.9,1278.9 L246.6,1277.2 L256.3,1275.5 L266.0,1274.0 L285.4,1270.9 L304.8,1267.9 L324.2,1264.9 L343.6,1262.1 L363.1,1259.5 L380.3,1257.6 L397.5,1256.0 L414.7,1254.5 L432.0,1253.0 L449.2,1251.5 L467.3,1248.3 L485.3,1245.1 L503.3,1241.8 L521.4,1238.7 L539.4,1235.7 L576.6,1229.7 L613.8,1224.0 L651.1,1218.2 L688.3,1212.6 L725.5,1206.8 L760.7,1200.4 L795.9,1194.0 L831.1,1187.6 L866.3,1181.1 L901.4,1174.3 L931.2,1168.2 L961.0,1161.8 L990.7,1155.4 L1020.4,1148.9 L1050.2,1142.5 L1080.5,1136.1 L1110.9,1129.8 L1141.3,1123.5 L1171.7,1117.1 L1202.0,1110.5 L1232.5,1103.8 L1263.0,1097.0 L1293.4,1090.0 L1323.9,1083.0 L1354.3,1075.8 L1384.1,1068.6 L1413.9,1061.3 L1443.7,1053.9 L1473.5,1046.4 L1503.2,1038.7 L1531.4,1031.3 L1559.5,1023.7 L1587.6,1015.9 L1615.7,1008.1 L1643.7,1000.3 L1670.3,992.9 L1696.9,985.5 L1723.4,978.0 L1749.9,970.4 L1776.3,962.5 L1800.1,955.1 L1823.8,947.5 L1847.4,939.8 L1871.0,931.9 L1894.6,924.1 L1917.6,916.5 L1940.5,908.9 L1963.5,901.2 L1986.4,893.4 L2009.3,885.5 L2031.2,877.8 L2053.0,870.0 L2074.8,862.1 L2096.6,854.1 L2118.3,846.0 L2138.4,838.4 L2158.5,830.7 L2178.5,822.9 L2198.5,815.0 L2218.5,807.0 L2237.2,799.5 L2255.9,791.9 L2274.5,784.3 L2293.2,776.6 L2311.8,768.8 L2329.4,761.5 L2347.0,754.3 L2364.5,747.0 L2382.0,739.4 L2399.3,731.6 L2414.1,724.3 L2428.8,716.6 L2443.3,708.7 L2457.9,700.9 L2472.5,693.1 L2485.3,686.6 L2498.2,680.1 L2511.1,673.7 L2523.9,667.2 L2536.7,660.5 L2546.7,655.0 L2556.7,649.4 L2566.6,643.7 L2576.5,638.0 L2586.4,632.3 L2594.5,628.2 L2602.9,624.4 L2611.1,620.5 L2618.7,616.1 L2625.4,611.1 L2627.0,608.6 L2627.7,605.5 L2627.7,601.9 L2627.5,598.3 L2627.4,594.8 L2627.5,591.4 L2627.5,588.0 L2627.3,584.7 L2627.0,581.3 L2626.5,578.0 L2625.7,574.6 L2624.8,571.2 L2623.6,567.9 L2622.4,564.6 L2621.0,561.4 L2619.1,557.3 L2617.1,553.2 L2615.0,549.1 L2612.8,545.1 L2610.5,541.2 L2608.2,537.4 L2605.8,533.7 L2603.3,530.0 L2600.7,526.4 L2598.1,522.7 L2595.7,519.5 L2593.2,516.4 L2590.7,513.3 L2588.2,510.1 L2585.7,507.0 L2585.7,507.0 L2588.4,510.3 L2591.2,513.6 L2593.9,517.0 L2596.6,520.3 L2599.2,523.7 L2602.1,527.6 L2604.9,531.4 L2607.7,535.3 L2610.4,539.3 L2613.0,543.3 L2615.7,547.5 L2618.2,551.8 L2620.6,556.1 L2623.0,560.5 L2625.2,564.9 L2626.9,568.4 L2628.5,571.9 L2629.9,575.5 L2631.2,579.1 L2632.3,582.7 L2633.1,586.3 L2633.7,589.8 L2634.2,593.4 L2634.5,597.1 L2634.7,600.7 L2635.0,604.3 L2635.5,608.2 L2635.7,611.9 L2635.2,615.2 L2633.7,617.9 L2627.2,623.1 L2619.6,627.6 L2611.4,631.7 L2603.0,635.8 L2595.0,640.0 L2585.0,645.8 L2575.1,651.7 L2565.2,657.6 L2555.3,663.3 L2545.3,669.0 L2532.5,675.8 L2519.7,682.5 L2506.9,689.0 L2494.0,695.6 L2481.2,702.3 L2466.6,710.2 L2452.1,718.2 L2437.5,726.3 L2422.9,734.1 L2408.0,741.5 L2390.7,749.6 L2373.3,757.2 L2355.7,764.7 L2338.1,772.1 L2320.5,779.5 L2302.0,787.4 L2283.4,795.2 L2264.7,803.0 L2246.1,810.7 L2227.4,818.3 L2207.4,826.3 L2187.3,834.3 L2167.2,842.1 L2147.1,849.9 L2127.0,857.6 L2105.2,865.8 L2083.4,873.9 L2061.5,881.8 L2039.6,889.7 L2017.7,897.5 L1994.8,905.5 L1971.8,913.3 L1948.8,921.1 L1925.8,928.8 L1902.8,936.4 L1879.1,944.3 L1855.5,952.2 L1831.8,960.0 L1808.1,967.6 L1784.3,975.0 L1757.8,982.9 L1731.2,990.6 L1704.6,998.1 L1678.0,1005.5 L1651.3,1012.9 L1623.2,1020.8 L1595.0,1028.5 L1566.8,1036.3 L1538.5,1043.9 L1510.2,1051.3 L1480.4,1058.9 L1450.6,1066.5 L1420.7,1073.8 L1390.7,1081.1 L1360.8,1088.2 L1330.3,1095.4 L1299.7,1102.4 L1269.1,1109.3 L1238.5,1116.1 L1207.9,1122.8 L1177.4,1129.3 L1146.9,1135.6 L1116.4,1141.8 L1085.9,1148.1 L1055.4,1154.4 L1025.5,1160.7 L995.6,1167.1 L965.8,1173.5 L935.8,1179.8 L905.9,1185.7 L870.6,1192.4 L835.2,1198.7 L799.8,1204.9 L764.3,1211.1 L728.9,1217.3 L691.5,1222.7 L654.0,1228.1 L616.6,1233.6 L579.1,1239.1 L541.7,1244.7 L523.6,1247.6 L505.5,1250.6 L487.3,1253.6 L469.2,1256.7 L451.1,1259.7 L433.8,1261.1 L416.5,1262.3 L399.1,1263.6 L381.8,1265.0 L364.6,1266.8 L345.0,1269.2 L325.5,1271.8 L306.0,1274.6 L286.5,1277.6 L267.0,1280.4 L257.3,1281.9 L247.5,1283.5 L237.8,1285.0 L228.0,1286.6 L218.3,1288.0 L209.2,1289.2 L200.1,1290.3 L190.9,1291.3 L181.8,1292.3 L172.7,1293.4 Z" fill="url(#g6)" stroke="url(#g6)" stroke-width="0.8"/>
<path d="M172.7,1293.4 L181.8,1292.3 L190.9,1291.3 L200.1,1290.3 L209.2,1289.2 L218.3,1288.0 L228.0,1286.6 L237.8,1285.0 L247.5,1283.5 L257.3,1281.9 L267.0,1280.4 L286.5,1277.6 L306.0,1274.6 L325.5,1271.8 L345.0,1269.2 L364.6,1266.8 L381.8,1265.0 L399.1,1263.6 L416.5,1262.3 L433.8,1261.1 L451.1,1259.7 L469.2,1256.7 L487.3,1253.6 L505.5,1250.6 L523.6,1247.6 L541.7,1244.7 L579.1,1239.1 L616.6,1233.6 L654.0,1228.1 L691.5,1222.7 L728.9,1217.3 L764.3,1211.1 L799.8,1204.9 L835.2,1198.7 L870.6,1192.4 L905.9,1185.7 L935.8,1179.8 L965.8,1173.5 L995.6,1167.1 L1025.5,1160.7 L1055.4,1154.4 L1085.9,1148.1 L1116.4,1141.8 L1146.9,1135.6 L1177.4,1129.3 L1207.9,1122.8 L1238.5,1116.1 L1269.1,1109.3 L1299.7,1102.4 L1330.3,1095.4 L1360.8,1088.2 L1390.7,1081.1 L1420.7,1073.8 L1450.6,1066.5 L1480.4,1058.9 L1510.2,1051.3 L1538.5,1043.9 L1566.8,1036.3 L1595.0,1028.5 L1623.2,1020.8 L1651.3,1012.9 L1678.0,1005.5 L1704.6,998.1 L1731.2,990.6 L1757.8,982.9 L1784.3,975.0 L1808.1,967.6 L1831.8,960.0 L1855.5,952.2 L1879.1,944.3 L1902.8,936.4 L1925.8,928.8 L1948.8,921.1 L1971.8,913.3 L1994.8,905.5 L2017.7,897.5 L2039.6,889.7 L2061.5,881.8 L2083.4,873.9 L2105.2,865.8 L2127.0,857.6 L2147.1,849.9 L2167.2,842.1 L2187.3,834.3 L2207.4,826.3 L2227.4,818.3 L2246.1,810.7 L2264.7,803.0 L2283.4,795.2 L2302.0,787.4 L2320.5,779.5 L2338.1,772.1 L2355.7,764.7 L2373.3,757.2 L2390.7,749.6 L2408.0,741.5 L2422.9,734.1 L2437.5,726.3 L2452.1,718.2 L2466.6,710.2 L2481.2,702.3 L2494.0,695.6 L2506.9,689.0 L2519.7,682.5 L2532.5,675.8 L2545.3,669.0 L2555.3,663.3 L2565.2,657.6 L2575.1,651.7 L2585.0,645.8 L2595.0,640.0 L2603.0,635.8 L2611.4,631.7 L2619.6,627.6 L2627.2,623.1 L2633.7,617.9 L2635.2,615.2 L2635.7,611.9 L2635.5,608.2 L2635.0,604.3 L2634.7,600.7 L2634.5,597.1 L2634.2,593.4 L2633.7,589.8 L2633.1,586.3 L2632.3,582.7 L2631.2,579.1 L2629.9,575.5 L2628.5,571.9 L2626.9,568.4 L2625.2,564.9 L2623.0,560.5 L2620.6,556.1 L2618.2,551.8 L2615.7,547.5 L2613.0,543.3 L2610.4,539.3 L2607.7,535.3 L2604.9,531.4 L2602.1,527.6 L2599.2,523.7 L2596.6,520.3 L2593.9,517.0 L2591.2,513.6 L2588.4,510.3 L2585.7,507.0 L2585.7,507.0 L2588.7,510.5 L2591.7,514.1 L2594.6,517.6 L2597.6,521.2 L2600.5,524.8 L2603.6,528.9 L2606.8,533.0 L2609.8,537.1 L2612.8,541.3 L2615.8,545.6 L2618.7,550.1 L2621.7,554.7 L2624.5,559.3 L2627.2,564.0 L2629.8,568.7 L2631.8,572.5 L2633.8,576.2 L2635.6,580.1 L2637.2,583.9 L2638.7,587.9 L2639.8,591.6 L2640.7,595.4 L2641.5,599.3 L2642.1,603.1 L2642.6,607.0 L2643.2,610.8 L2643.9,614.9 L2644.4,618.8 L2644.1,622.3 L2642.7,625.2 L2636.4,630.6 L2628.9,635.3 L2620.7,639.7 L2612.3,643.9 L2604.2,648.3 L2594.3,654.3 L2584.5,660.4 L2574.6,666.4 L2564.6,672.3 L2554.6,678.1 L2541.9,685.1 L2529.2,691.9 L2516.3,698.6 L2503.5,705.4 L2490.8,712.2 L2476.1,720.3 L2461.6,728.5 L2447.0,736.7 L2432.3,744.7 L2417.5,752.3 L2400.2,760.5 L2382.8,768.3 L2365.2,776.0 L2347.6,783.5 L2330.1,791.1 L2311.5,799.1 L2293.0,807.0 L2274.4,814.9 L2255.7,822.7 L2237.1,830.4 L2217.0,838.6 L2196.9,846.6 L2176.8,854.6 L2156.6,862.4 L2136.4,870.2 L2114.6,878.4 L2092.7,886.6 L2070.8,894.6 L2048.9,902.6 L2026.9,910.5 L2003.9,918.5 L1980.9,926.4 L1957.9,934.3 L1934.8,942.0 L1911.7,949.7 L1888.0,957.7 L1864.3,965.6 L1840.6,973.4 L1816.8,981.1 L1792.9,988.6 L1766.4,996.5 L1739.8,1004.2 L1713.1,1011.8 L1686.4,1019.2 L1659.7,1026.6 L1631.4,1034.4 L1603.0,1042.2 L1574.7,1049.9 L1546.3,1057.4 L1517.9,1064.8 L1488.0,1072.5 L1458.0,1080.0 L1428.1,1087.3 L1398.1,1094.6 L1368.0,1101.7 L1337.3,1108.8 L1306.6,1115.7 L1275.8,1122.6 L1245.0,1129.3 L1214.2,1135.9 L1183.6,1142.3 L1153.0,1148.5 L1122.3,1154.7 L1091.7,1160.8 L1061.0,1167.0 L1030.9,1173.2 L1000.9,1179.5 L970.8,1185.8 L940.7,1191.9 L910.6,1197.7 L875.0,1204.2 L839.4,1210.3 L803.8,1216.3 L768.1,1222.2 L732.5,1228.2 L694.8,1233.3 L657.1,1238.5 L619.5,1243.6 L581.8,1248.8 L544.1,1254.1 L525.9,1256.8 L507.7,1259.6 L489.5,1262.5 L471.3,1265.4 L453.1,1268.3 L435.7,1269.4 L418.2,1270.4 L400.8,1271.4 L383.4,1272.7 L366.0,1274.2 L346.4,1276.4 L326.8,1278.9 L307.2,1281.6 L287.7,1284.3 L268.1,1287.0 L258.3,1288.4 L248.5,1289.9 L238.7,1291.3 L228.9,1292.7 L219.1,1294.1 L210.0,1295.1 L200.9,1296.1 L191.7,1297.1 L182.6,1298.0 L173.4,1299.0 Z" fill="url(#g7)" stroke="url(#g7)" stroke-width="0.8"/>
<path d="M173.4,1299.0 L182.6,1298.0 L191.7,1297.1 L200.9,1296.1 L210.0,1295.1 L219.1,1294.1 L228.9,1292.7 L238.7,1291.3 L248.5,1289.9 L258.3,1288.4 L268.1,1287.0 L287.7,1284.3 L307.2,1281.6 L326.8,1278.9 L346.4,1276.4 L366.0,1274.2 L383.4,1272.7 L400.8,1271.4 L418.2,1270.4 L435.7,1269.4 L453.1,1268.3 L471.3,1265.4 L489.5,1262.5 L507.7,1259.6 L525.9,1256.8 L544.1,1254.1 L581.8,1248.8 L619.5,1243.6 L657.1,1238.5 L694.8,1233.3 L732.5,1228.2 L768.1,1222.2 L803.8,1216.3 L839.4,1210.3 L875.0,1204.2 L910.6,1197.7 L940.7,1191.9 L970.8,1185.8 L1000.9,1179.5 L1030.9,1173.2 L1061.0,1167.0 L1091.7,1160.8 L1122.3,1154.7 L1153.0,1148.5 L1183.6,1142.3 L1214.2,1135.9 L1245.0,1129.3 L1275.8,1122.6 L1306.6,1115.7 L1337.3,1108.8 L1368.0,1101.7 L1398.1,1094.6 L1428.1,1087.3 L1458.0,1080.0 L1488.0,1072.5 L1517.9,1064.8 L1546.3,1057.4 L1574.7,1049.9 L1603.0,1042.2 L1631.4,1034.4 L1659.7,1026.6 L1686.4,1019.2 L1713.1,1011.8 L1739.8,1004.2 L1766.4,996.5 L1792.9,988.6 L1816.8,981.1 L1840.6,973.4 L1864.3,965.6 L1888.0,957.7 L1911.7,949.7 L1934.8,942.0 L1957.9,934.3 L1980.9,926.4 L2003.9,918.5 L2026.9,910.5 L2048.9,902.6 L2070.8,894.6 L2092.7,886.6 L2114.6,878.4 L2136.4,870.2 L2156.6,862.4 L2176.8,854.6 L2196.9,846.6 L2217.0,838.6 L2237.1,830.4 L2255.7,822.7 L2274.4,814.9 L2293.0,807.0 L2311.5,799.1 L2330.1,791.1 L2347.6,783.5 L2365.2,776.0 L2382.8,768.3 L2400.2,760.5 L2417.5,752.3 L2432.3,744.7 L2447.0,736.7 L2461.6,728.5 L2476.1,720.3 L2490.8,712.2 L2503.5,705.4 L2516.3,698.6 L2529.2,691.9 L2541.9,685.1 L2554.6,678.1 L2564.6,672.3 L2574.6,666.4 L2584.5,660.4 L2594.3,654.3 L2604.2,648.3 L2612.3,643.9 L2620.7,639.7 L2628.9,635.3 L2636.4,630.6 L2642.7,625.2 L2644.1,622.3 L2644.4,618.8 L2643.9,614.9 L2643.2,610.8 L2642.6,607.0 L2642.1,603.1 L2641.5,599.3 L2640.7,595.4 L2639.8,591.6 L2638.7,587.9 L2637.2,583.9 L2635.6,580.1 L2633.8,576.2 L2631.8,572.5 L2629.8,568.7 L2627.2,564.0 L2624.5,559.3 L2621.7,554.7 L2618.7,550.1 L2615.8,545.6 L2612.8,541.3 L2609.8,537.1 L2606.8,533.0 L2603.6,528.9 L2600.5,524.8 L2597.6,521.2 L2594.6,517.6 L2591.7,514.1 L2588.7,510.5 L2585.7,507.0 L2585.7,507.0 L2588.9,510.8 L2592.2,514.5 L2595.4,518.3 L2598.6,522.0 L2601.8,525.9 L2605.2,530.2 L2608.6,534.6 L2612.0,539.0 L2615.3,543.4 L2618.6,547.9 L2621.9,552.8 L2625.2,557.7 L2628.4,562.6 L2631.6,567.6 L2634.6,572.6 L2636.9,576.6 L2639.2,580.7 L2641.4,584.8 L2643.4,588.9 L2645.2,593.2 L2646.6,597.1 L2647.9,601.2 L2649.0,605.3 L2649.9,609.4 L2650.7,613.5 L2651.6,617.5 L2652.7,621.8 L2653.4,625.9 L2653.4,629.7 L2652.0,632.7 L2645.9,638.3 L2638.5,643.3 L2630.2,647.8 L2621.8,652.3 L2613.8,656.9 L2603.9,663.1 L2594.0,669.3 L2584.2,675.5 L2574.2,681.6 L2564.2,687.6 L2551.6,694.7 L2538.8,701.7 L2526.0,708.6 L2513.3,715.5 L2500.5,722.5 L2485.9,730.7 L2471.3,739.1 L2456.7,747.5 L2442.1,755.7 L2427.2,763.4 L2409.9,771.8 L2392.5,779.9 L2375.0,787.7 L2357.4,795.4 L2339.8,803.1 L2321.3,811.2 L2302.8,819.3 L2284.2,827.3 L2265.6,835.2 L2247.0,843.0 L2226.9,851.3 L2206.7,859.4 L2186.5,867.4 L2166.3,875.3 L2146.0,883.1 L2124.2,891.5 L2102.2,899.7 L2080.3,907.9 L2058.3,915.9 L2036.3,923.9 L2013.3,932.0 L1990.2,940.0 L1967.1,947.9 L1944.0,955.7 L1920.9,963.5 L1897.1,971.5 L1873.4,979.5 L1849.6,987.4 L1825.7,995.1 L1801.8,1002.6 L1775.2,1010.5 L1748.5,1018.3 L1721.8,1025.9 L1695.0,1033.3 L1668.2,1040.7 L1639.8,1048.5 L1611.3,1056.3 L1582.9,1063.9 L1554.4,1071.4 L1525.8,1078.8 L1495.8,1086.4 L1465.8,1093.9 L1435.7,1101.2 L1405.6,1108.5 L1375.4,1115.5 L1344.6,1122.6 L1313.7,1129.5 L1282.7,1136.2 L1251.8,1142.9 L1220.8,1149.4 L1190.0,1155.7 L1159.2,1161.8 L1128.4,1167.9 L1097.6,1173.9 L1066.8,1180.0 L1036.5,1186.1 L1006.3,1192.3 L976.0,1198.5 L945.8,1204.5 L915.4,1210.1 L879.6,1216.4 L843.8,1222.3 L807.9,1228.0 L772.0,1233.7 L736.2,1239.5 L698.3,1244.3 L660.3,1249.1 L622.4,1253.9 L584.5,1258.8 L546.6,1263.8 L528.3,1266.3 L510.0,1268.9 L491.7,1271.6 L473.4,1274.3 L455.1,1277.0 L437.6,1277.9 L420.1,1278.7 L402.6,1279.5 L385.1,1280.6 L367.6,1281.9 L347.9,1283.9 L328.2,1286.2 L308.5,1288.7 L288.9,1291.3 L269.2,1293.8 L259.3,1295.1 L249.5,1296.5 L239.6,1297.8 L229.8,1299.1 L219.9,1300.3 L210.8,1301.3 L201.7,1302.2 L192.5,1303.0 L183.4,1303.8 L174.2,1304.7 Z" fill="url(#g8)" stroke="url(#g8)" stroke-width="0.8"/>
<path d="M174.2,1304.7 L183.4,1303.8 L192.5,1303.0 L201.7,1302.2 L210.8,1301.3 L219.9,1300.3 L229.8,1299.1 L239.6,1297.8 L249.5,1296.5 L259.3,1295.1 L269.2,1293.8 L288.9,1291.3 L308.5,1288.7 L328.2,1286.2 L347.9,1283.9 L367.6,1281.9 L385.1,1280.6 L402.6,1279.5 L420.1,1278.7 L437.6,1277.9 L455.1,1277.0 L473.4,1274.3 L491.7,1271.6 L510.0,1268.9 L528.3,1266.3 L546.6,1263.8 L584.5,1258.8 L622.4,1253.9 L660.3,1249.1 L698.3,1244.3 L736.2,1239.5 L772.0,1233.7 L807.9,1228.0 L843.8,1222.3 L879.6,1216.4 L915.4,1210.1 L945.8,1204.5 L976.0,1198.5 L1006.3,1192.3 L1036.5,1186.1 L1066.8,1180.0 L1097.6,1173.9 L1128.4,1167.9 L1159.2,1161.8 L1190.0,1155.7 L1220.8,1149.4 L1251.8,1142.9 L1282.7,1136.2 L1313.7,1129.5 L1344.6,1122.6 L1375.4,1115.5 L1405.6,1108.5 L1435.7,1101.2 L1465.8,1093.9 L1495.8,1086.4 L1525.8,1078.8 L1554.4,1071.4 L1582.9,1063.9 L1611.3,1056.3 L1639.8,1048.5 L1668.2,1040.7 L1695.0,1033.3 L1721.8,1025.9 L1748.5,1018.3 L1775.2,1010.5 L1801.8,1002.6 L1825.7,995.1 L1849.6,987.4 L1873.4,979.5 L1897.1,971.5 L1920.9,963.5 L1944.0,955.7 L1967.1,947.9 L1990.2,940.0 L2013.3,932.0 L2036.3,923.9 L2058.3,915.9 L2080.3,907.9 L2102.2,899.7 L2124.2,891.5 L2146.0,883.1 L2166.3,875.3 L2186.5,867.4 L2206.7,859.4 L2226.9,851.3 L2247.0,843.0 L2265.6,835.2 L2284.2,827.3 L2302.8,819.3 L2321.3,811.2 L2339.8,803.1 L2357.4,795.4 L2375.0,787.7 L2392.5,779.9 L2409.9,771.8 L2427.2,763.4 L2442.1,755.7 L2456.7,747.5 L2471.3,739.1 L2485.9,730.7 L2500.5,722.5 L2513.3,715.5 L2526.0,708.6 L2538.8,701.7 L2551.6,694.7 L2564.2,687.6 L2574.2,681.6 L2584.2,675.5 L2594.0,669.3 L2603.9,663.1 L2613.8,656.9 L2621.8,652.3 L2630.2,647.8 L2638.5,643.3 L2645.9,638.3 L2652.0,632.7 L2653.4,629.7 L2653.4,625.9 L2652.7,621.8 L2651.6,617.5 L2650.7,613.5 L2649.9,609.4 L2649.0,605.3 L2647.9,601.2 L2646.6,597.1 L2645.2,593.2 L2643.4,588.9 L2641.4,584.8 L2639.2,580.7 L2636.9,576.6 L2634.6,572.6 L2631.6,567.6 L2628.4,562.6 L2625.2,557.7 L2621.9,552.8 L2618.6,547.9 L2615.3,543.4 L2612.0,539.0 L2608.6,534.6 L2605.2,530.2 L2601.8,525.9 L2598.6,522.0 L2595.4,518.3 L2592.2,514.5 L2588.9,510.8 L2585.7,507.0 L2585.7,507.0 L2589.2,511.0 L2592.7,514.9 L2596.2,518.9 L2599.6,522.9 L2603.0,526.9 L2606.8,531.5 L2610.5,536.1 L2614.1,540.8 L2617.8,545.5 L2621.3,550.2 L2625.0,555.4 L2628.7,560.6 L2632.3,565.8 L2635.8,571.1 L2639.2,576.5 L2641.9,580.7 L2644.5,585.0 L2647.0,589.4 L2649.4,593.8 L2651.6,598.3 L2653.3,602.5 L2654.9,606.8 L2656.2,611.1 L2657.5,615.5 L2658.5,619.9 L2659.7,624.1 L2661.1,628.5 L2662.1,632.8 L2662.3,636.8 L2661.0,640.0 L2655.1,645.9 L2647.7,651.0 L2639.5,655.8 L2631.0,660.4 L2623.0,665.2 L2613.1,671.6 L2603.3,678.1 L2593.4,684.4 L2583.5,690.7 L2573.5,696.8 L2560.9,704.1 L2548.2,711.3 L2535.4,718.3 L2522.6,725.4 L2509.9,732.5 L2495.3,740.9 L2480.7,749.5 L2466.1,758.1 L2451.4,766.4 L2436.5,774.3 L2419.3,782.9 L2401.9,791.1 L2384.3,799.1 L2366.8,806.9 L2349.2,814.8 L2330.7,823.1 L2312.2,831.3 L2293.7,839.4 L2275.1,847.5 L2256.5,855.3 L2236.4,863.7 L2216.2,871.9 L2195.9,880.0 L2175.7,887.9 L2155.3,895.8 L2133.4,904.3 L2111.4,912.6 L2089.4,920.8 L2067.4,928.9 L2045.3,936.9 L2022.3,945.1 L1999.2,953.2 L1976.1,961.2 L1952.9,969.1 L1929.7,976.9 L1905.9,985.0 L1882.1,993.0 L1858.2,1000.9 L1834.3,1008.7 L1810.4,1016.2 L1783.7,1024.2 L1757.0,1032.0 L1730.2,1039.6 L1703.3,1047.0 L1676.5,1054.5 L1647.9,1062.3 L1619.4,1070.0 L1590.8,1077.5 L1562.1,1085.0 L1533.5,1092.4 L1503.4,1099.9 L1473.2,1107.4 L1443.1,1114.7 L1412.9,1121.9 L1382.6,1129.0 L1351.6,1136.0 L1320.5,1142.8 L1289.4,1149.5 L1258.3,1156.0 L1227.2,1162.5 L1196.2,1168.7 L1165.3,1174.7 L1134.3,1180.7 L1103.4,1186.6 L1072.4,1192.5 L1042.0,1198.6 L1011.5,1204.7 L981.1,1210.8 L950.7,1216.6 L920.1,1222.2 L884.1,1228.2 L848.1,1233.9 L812.0,1239.4 L775.8,1244.8 L739.7,1250.4 L701.6,1254.9 L663.5,1259.4 L625.3,1263.9 L587.2,1268.5 L549.0,1273.2 L530.6,1275.5 L512.2,1278.0 L493.8,1280.5 L475.5,1283.0 L457.1,1285.5 L439.5,1286.2 L421.8,1286.8 L404.2,1287.4 L386.6,1288.2 L369.1,1289.4 L349.3,1291.2 L329.5,1293.3 L309.8,1295.7 L290.0,1298.1 L270.3,1300.4 L260.4,1301.6 L250.5,1302.8 L240.6,1304.1 L230.7,1305.3 L220.7,1306.4 L211.6,1307.3 L202.4,1308.1 L193.3,1308.8 L184.1,1309.5 L175.0,1310.3 Z" fill="url(#g9)" stroke="url(#g9)" stroke-width="0.8"/>
<path d="M175.0,1310.3 L184.1,1309.5 L193.3,1308.8 L202.4,1308.1 L211.6,1307.3 L220.7,1306.4 L230.7,1305.3 L240.6,1304.1 L250.5,1302.8 L260.4,1301.6 L270.3,1300.4 L290.0,1298.1 L309.8,1295.7 L329.5,1293.3 L349.3,1291.2 L369.1,1289.4 L386.6,1288.2 L404.2,1287.4 L421.8,1286.8 L439.5,1286.2 L457.1,1285.5 L475.5,1283.0 L493.8,1280.5 L512.2,1278.0 L530.6,1275.5 L549.0,1273.2 L587.2,1268.5 L625.3,1263.9 L663.5,1259.4 L701.6,1254.9 L739.7,1250.4 L775.8,1244.8 L812.0,1239.4 L848.1,1233.9 L884.1,1228.2 L920.1,1222.2 L950.7,1216.6 L981.1,1210.8 L1011.5,1204.7 L1042.0,1198.6 L1072.4,1192.5 L1103.4,1186.6 L1134.3,1180.7 L1165.3,1174.7 L1196.2,1168.7 L1227.2,1162.5 L1258.3,1156.0 L1289.4,1149.5 L1320.5,1142.8 L1351.6,1136.0 L1382.6,1129.0 L1412.9,1121.9 L1443.1,1114.7 L1473.2,1107.4 L1503.4,1099.9 L1533.5,1092.4 L1562.1,1085.0 L1590.8,1077.5 L1619.4,1070.0 L1647.9,1062.3 L1676.5,1054.5 L1703.3,1047.0 L1730.2,1039.6 L1757.0,1032.0 L1783.7,1024.2 L1810.4,1016.2 L1834.3,1008.7 L1858.2,1000.9 L1882.1,993.0 L1905.9,985.0 L1929.7,976.9 L1952.9,969.1 L1976.1,961.2 L1999.2,953.2 L2022.3,945.1 L2045.3,936.9 L2067.4,928.9 L2089.4,920.8 L2111.4,912.6 L2133.4,904.3 L2155.3,895.8 L2175.7,887.9 L2195.9,880.0 L2216.2,871.9 L2236.4,863.7 L2256.5,855.3 L2275.1,847.5 L2293.7,839.4 L2312.2,831.3 L2330.7,823.1 L2349.2,814.8 L2366.8,806.9 L2384.3,799.1 L2401.9,791.1 L2419.3,782.9 L2436.5,774.3 L2451.4,766.4 L2466.1,758.1 L2480.7,749.5 L2495.3,740.9 L2509.9,732.5 L2522.6,725.4 L2535.4,718.3 L2548.2,711.3 L2560.9,704.1 L2573.5,696.8 L2583.5,690.7 L2593.4,684.4 L2603.3,678.1 L2613.1,671.6 L2623.0,665.2 L2631.0,660.4 L2639.5,655.8 L2647.7,651.0 L2655.1,645.9 L2661.0,640.0 L2662.3,636.8 L2662.1,632.8 L2661.1,628.5 L2659.7,624.1 L2658.5,619.9 L2657.5,615.5 L2656.2,611.1 L2654.9,606.8 L2653.3,602.5 L2651.6,598.3 L2649.4,593.8 L2647.0,589.4 L2644.5,585.0 L2641.9,580.7 L2639.2,576.5 L2635.8,571.1 L2632.3,565.8 L2628.7,560.6 L2625.0,555.4 L2621.3,550.2 L2617.8,545.5 L2614.1,540.8 L2610.5,536.1 L2606.8,531.5 L2603.0,526.9 L2599.6,522.9 L2596.2,518.9 L2592.7,514.9 L2589.2,511.0 L2585.7,507.0 L2585.7,507.0 L2589.4,511.2 L2593.1,515.3 L2596.8,519.5 L2600.4,523.7 L2604.0,527.9 L2608.0,532.8 L2611.9,537.6 L2615.8,542.5 L2619.7,547.4 L2623.5,552.4 L2627.5,557.9 L2631.4,563.3 L2635.3,568.9 L2639.2,574.5 L2642.9,580.1 L2645.9,584.6 L2648.8,589.2 L2651.6,593.8 L2654.2,598.5 L2656.7,603.2 L2658.7,607.6 L2660.5,612.1 L2662.1,616.7 L2663.6,621.3 L2664.9,625.9 L2666.3,630.3 L2667.9,634.9 L2669.2,639.4 L2669.5,643.6 L2668.2,647.0 L2662.5,653.1 L2655.1,658.5 L2646.9,663.4 L2638.4,668.3 L2630.3,673.3 L2620.4,679.9 L2610.6,686.5 L2600.7,693.1 L2590.7,699.5 L2580.7,705.8 L2568.1,713.3 L2555.4,720.6 L2542.6,727.8 L2529.9,734.9 L2517.1,742.2 L2502.5,750.8 L2487.9,759.6 L2473.3,768.3 L2458.5,776.7 L2443.6,784.8 L2426.4,793.5 L2409.0,801.9 L2391.4,810.0 L2373.8,818.0 L2356.2,826.0 L2337.8,834.4 L2319.3,842.7 L2300.8,851.0 L2282.3,859.1 L2263.6,867.1 L2243.5,875.5 L2223.2,883.8 L2202.9,891.9 L2182.6,899.9 L2162.2,907.9 L2140.2,916.3 L2118.2,924.7 L2096.1,933.0 L2074.0,941.2 L2051.9,949.3 L2028.8,957.5 L2005.7,965.7 L1982.5,973.7 L1959.3,981.6 L1936.1,989.5 L1912.3,997.6 L1888.4,1005.7 L1864.5,1013.6 L1840.5,1021.4 L1816.5,1028.9 L1789.8,1036.9 L1763.0,1044.7 L1736.1,1052.3 L1709.2,1059.8 L1682.3,1067.2 L1653.7,1075.0 L1625.0,1082.6 L1596.3,1090.2 L1567.6,1097.6 L1538.8,1104.9 L1508.6,1112.4 L1478.4,1119.9 L1448.2,1127.2 L1417.9,1134.3 L1387.6,1141.3 L1356.5,1148.2 L1325.3,1155.0 L1294.1,1161.6 L1262.9,1168.0 L1231.7,1174.4 L1200.7,1180.5 L1169.7,1186.4 L1138.6,1192.2 L1107.6,1198.0 L1076.5,1203.9 L1046.0,1209.8 L1015.5,1215.8 L985.0,1221.7 L954.4,1227.5 L923.8,1232.9 L887.6,1238.7 L851.3,1244.2 L815.1,1249.4 L778.8,1254.7 L742.5,1260.0 L704.2,1264.2 L665.9,1268.4 L627.5,1272.7 L589.2,1276.9 L550.9,1281.3 L532.4,1283.5 L514.0,1285.8 L495.5,1288.2 L477.1,1290.5 L458.6,1292.8 L441.0,1293.3 L423.3,1293.7 L405.6,1294.1 L387.9,1294.7 L370.3,1295.7 L350.5,1297.4 L330.6,1299.4 L310.8,1301.5 L291.0,1303.8 L271.2,1306.0 L261.2,1307.1 L251.3,1308.2 L241.3,1309.4 L231.4,1310.5 L221.4,1311.5 L212.3,1312.3 L203.1,1312.9 L193.9,1313.6 L184.8,1314.2 L175.6,1314.9 Z" fill="url(#g10)" stroke="url(#g10)" stroke-width="0.8"/>
<path d="M175.6,1314.9 L184.8,1314.2 L193.9,1313.6 L203.1,1312.9 L212.3,1312.3 L221.4,1311.5 L231.4,1310.5 L241.3,1309.4 L251.3,1308.2 L261.2,1307.1 L271.2,1306.0 L291.0,1303.8 L310.8,1301.5 L330.6,1299.4 L350.5,1297.4 L370.3,1295.7 L387.9,1294.7 L405.6,1294.1 L423.3,1293.7 L441.0,1293.3 L458.6,1292.8 L477.1,1290.5 L495.5,1288.2 L514.0,1285.8 L532.4,1283.5 L550.9,1281.3 L589.2,1276.9 L627.5,1272.7 L665.9,1268.4 L704.2,1264.2 L742.5,1260.0 L778.8,1254.7 L815.1,1249.4 L851.3,1244.2 L887.6,1238.7 L923.8,1232.9 L954.4,1227.5 L985.0,1221.7 L1015.5,1215.8 L1046.0,1209.8 L1076.5,1203.9 L1107.6,1198.0 L1138.6,1192.2 L1169.7,1186.4 L1200.7,1180.5 L1231.7,1174.4 L1262.9,1168.0 L1294.1,1161.6 L1325.3,1155.0 L1356.5,1148.2 L1387.6,1141.3 L1417.9,1134.3 L1448.2,1127.2 L1478.4,1119.9 L1508.6,1112.4 L1538.8,1104.9 L1567.6,1097.6 L1596.3,1090.2 L1625.0,1082.6 L1653.7,1075.0 L1682.3,1067.2 L1709.2,1059.8 L1736.1,1052.3 L1763.0,1044.7 L1789.8,1036.9 L1816.5,1028.9 L1840.5,1021.4 L1864.5,1013.6 L1888.4,1005.7 L1912.3,997.6 L1936.1,989.5 L1959.3,981.6 L1982.5,973.7 L2005.7,965.7 L2028.8,957.5 L2051.9,949.3 L2074.0,941.2 L2096.1,933.0 L2118.2,924.7 L2140.2,916.3 L2162.2,907.9 L2182.6,899.9 L2202.9,891.9 L2223.2,883.8 L2243.5,875.5 L2263.6,867.1 L2282.3,859.1 L2300.8,851.0 L2319.3,842.7 L2337.8,834.4 L2356.2,826.0 L2373.8,818.0 L2391.4,810.0 L2409.0,801.9 L2426.4,793.5 L2443.6,784.8 L2458.5,776.7 L2473.3,768.3 L2487.9,759.6 L2502.5,750.8 L2517.1,742.2 L2529.9,734.9 L2542.6,727.8 L2555.4,720.6 L2568.1,713.3 L2580.7,705.8 L2590.7,699.5 L2600.7,693.1 L2610.6,686.5 L2620.4,679.9 L2630.3,673.3 L2638.4,668.3 L2646.9,663.4 L2655.1,658.5 L2662.5,653.1 L2668.2,647.0 L2669.5,643.6 L2669.2,639.4 L2667.9,634.9 L2666.3,630.3 L2664.9,625.9 L2663.6,621.3 L2662.1,616.7 L2660.5,612.1 L2658.7,607.6 L2656.7,603.2 L2654.2,598.5 L2651.6,593.8 L2648.8,589.2 L2645.9,584.6 L2642.9,580.1 L2639.2,574.5 L2635.3,568.9 L2631.4,563.3 L2627.5,557.9 L2623.5,552.4 L2619.7,547.4 L2615.8,542.5 L2611.9,537.6 L2608.0,532.8 L2604.0,527.9 L2600.4,523.7 L2596.8,519.5 L2593.1,515.3 L2589.4,511.2 L2585.7,507.0 L2585.7,507.0 L2589.6,511.4 L2593.5,515.7 L2597.4,520.1 L2601.2,524.5 L2605.0,529.0 L2609.2,534.0 L2613.4,539.1 L2617.5,544.2 L2621.6,549.4 L2625.6,554.6 L2630.0,560.3 L2634.2,566.1 L2638.4,571.9 L2642.6,577.8 L2646.6,583.7 L2649.8,588.5 L2653.0,593.3 L2656.1,598.2 L2659.0,603.1 L2661.8,608.2 L2664.0,612.8 L2666.1,617.4 L2668.0,622.2 L2669.7,627.1 L2671.3,631.9 L2672.9,636.5 L2674.7,641.2 L2676.2,646.0 L2676.7,650.3 L2675.5,654.0 L2669.9,660.3 L2662.5,665.9 L2654.2,671.1 L2645.7,676.2 L2637.5,681.4 L2627.7,688.2 L2617.8,695.0 L2607.9,701.8 L2597.9,708.4 L2587.8,714.8 L2575.2,722.5 L2562.6,729.9 L2549.8,737.3 L2537.1,744.6 L2524.3,751.9 L2509.6,760.7 L2495.0,769.6 L2480.4,778.5 L2465.6,787.1 L2450.7,795.4 L2433.4,804.2 L2416.0,812.7 L2398.4,821.0 L2380.8,829.1 L2363.2,837.3 L2344.8,845.8 L2326.4,854.3 L2307.9,862.6 L2289.3,870.8 L2270.7,878.9 L2250.5,887.4 L2230.2,895.7 L2209.8,903.9 L2189.4,911.9 L2169.0,919.9 L2147.0,928.5 L2124.9,936.9 L2102.8,945.3 L2080.6,953.5 L2058.4,961.6 L2035.3,970.0 L2012.2,978.1 L1989.0,986.2 L1965.7,994.2 L1942.5,1002.1 L1918.5,1010.3 L1894.6,1018.3 L1870.7,1026.3 L1846.6,1034.1 L1822.5,1041.6 L1795.8,1049.7 L1768.9,1057.5 L1742.0,1065.1 L1715.1,1072.6 L1688.1,1080.0 L1659.4,1087.7 L1630.6,1095.3 L1601.8,1102.8 L1573.0,1110.2 L1544.1,1117.4 L1513.9,1124.9 L1483.6,1132.3 L1453.3,1139.6 L1422.9,1146.7 L1392.5,1153.6 L1361.3,1160.5 L1330.1,1167.2 L1298.8,1173.7 L1267.5,1180.0 L1236.2,1186.2 L1205.1,1192.2 L1174.0,1198.1 L1142.9,1203.8 L1111.8,1209.4 L1080.7,1215.2 L1050.1,1221.0 L1019.4,1226.9 L988.8,1232.7 L958.1,1238.3 L927.4,1243.6 L891.1,1249.2 L854.6,1254.5 L818.2,1259.5 L781.7,1264.5 L745.3,1269.6 L706.8,1273.5 L668.3,1277.5 L629.8,1281.4 L591.3,1285.4 L552.8,1289.5 L534.2,1291.5 L515.7,1293.6 L497.2,1295.8 L478.7,1298.0 L460.2,1300.2 L442.4,1300.4 L424.7,1300.6 L407.0,1300.8 L389.2,1301.3 L371.5,1302.1 L351.6,1303.5 L331.7,1305.4 L311.8,1307.4 L291.9,1309.5 L272.0,1311.6 L262.0,1312.6 L252.1,1313.6 L242.1,1314.7 L232.1,1315.6 L222.1,1316.5 L212.9,1317.2 L203.7,1317.8 L194.6,1318.4 L185.4,1318.9 L176.2,1319.5 Z" fill="url(#g11)" stroke="url(#g11)" stroke-width="0.8"/>
<path d="M176.2,1319.5 L185.4,1318.9 L194.6,1318.4 L203.7,1317.8 L212.9,1317.2 L222.1,1316.5 L232.1,1315.6 L242.1,1314.7 L252.1,1313.6 L262.0,1312.6 L272.0,1311.6 L291.9,1309.5 L311.8,1307.4 L331.7,1305.4 L351.6,1303.5 L371.5,1302.1 L389.2,1301.3 L407.0,1300.8 L424.7,1300.6 L442.4,1300.4 L460.2,1300.2 L478.7,1298.0 L497.2,1295.8 L515.7,1293.6 L534.2,1291.5 L552.8,1289.5 L591.3,1285.4 L629.8,1281.4 L668.3,1277.5 L706.8,1273.5 L745.3,1269.6 L781.7,1264.5 L818.2,1259.5 L854.6,1254.5 L891.1,1249.2 L927.4,1243.6 L958.1,1238.3 L988.8,1232.7 L1019.4,1226.9 L1050.1,1221.0 L1080.7,1215.2 L1111.8,1209.4 L1142.9,1203.8 L1174.0,1198.1 L1205.1,1192.2 L1236.2,1186.2 L1267.5,1180.0 L1298.8,1173.7 L1330.1,1167.2 L1361.3,1160.5 L1392.5,1153.6 L1422.9,1146.7 L1453.3,1139.6 L1483.6,1132.3 L1513.9,1124.9 L1544.1,1117.4 L1573.0,1110.2 L1601.8,1102.8 L1630.6,1095.3 L1659.4,1087.7 L1688.1,1080.0 L1715.1,1072.6 L1742.0,1065.1 L1768.9,1057.5 L1795.8,1049.7 L1822.5,1041.6 L1846.6,1034.1 L1870.7,1026.3 L1894.6,1018.3 L1918.5,1010.3 L1942.5,1002.1 L1965.7,994.2 L1989.0,986.2 L2012.2,978.1 L2035.3,970.0 L2058.4,961.6 L2080.6,953.5 L2102.8,945.3 L2124.9,936.9 L2147.0,928.5 L2169.0,919.9 L2189.4,911.9 L2209.8,903.9 L2230.2,895.7 L2250.5,887.4 L2270.7,878.9 L2289.3,870.8 L2307.9,862.6 L2326.4,854.3 L2344.8,845.8 L2363.2,837.3 L2380.8,829.1 L2398.4,821.0 L2416.0,812.7 L2433.4,804.2 L2450.7,795.4 L2465.6,787.1 L2480.4,778.5 L2495.0,769.6 L2509.6,760.7 L2524.3,751.9 L2537.1,744.6 L2549.8,737.3 L2562.6,729.9 L2575.2,722.5 L2587.8,714.8 L2597.9,708.4 L2607.9,701.8 L2617.8,695.0 L2627.7,688.2 L2637.5,681.4 L2645.7,676.2 L2654.2,671.1 L2662.5,665.9 L2669.9,660.3 L2675.5,654.0 L2676.7,650.3 L2676.2,646.0 L2674.7,641.2 L2672.9,636.5 L2671.3,631.9 L2669.7,627.1 L2668.0,622.2 L2666.1,617.4 L2664.0,612.8 L2661.8,608.2 L2659.0,603.1 L2656.1,598.2 L2653.0,593.3 L2649.8,588.5 L2646.6,583.7 L2642.6,577.8 L2638.4,571.9 L2634.2,566.1 L2630.0,560.3 L2625.6,554.6 L2621.6,549.4 L2617.5,544.2 L2613.4,539.1 L2609.2,534.0 L2605.0,529.0 L2601.2,524.5 L2597.4,520.1 L2593.5,515.7 L2589.6,511.4 L2585.7,507.0 L2585.7,507.0 L2589.8,511.6 L2593.9,516.2 L2598.0,520.7 L2602.0,525.3 L2606.0,530.0 L2610.5,535.3 L2614.9,540.6 L2619.2,546.0 L2623.6,551.4 L2627.8,556.8 L2632.4,562.8 L2637.0,568.9 L2641.5,575.0 L2645.9,581.2 L2650.3,587.4 L2653.8,592.4 L2657.3,597.5 L2660.6,602.6 L2663.9,607.8 L2666.9,613.1 L2669.4,617.9 L2671.7,622.8 L2673.9,627.8 L2675.8,632.9 L2677.6,638.0 L2679.5,642.7 L2681.6,647.6 L2683.2,652.6 L2683.9,657.1 L2682.8,661.0 L2677.2,667.5 L2669.9,673.3 L2661.6,678.8 L2653.0,684.1 L2644.8,689.5 L2634.9,696.5 L2625.0,703.5 L2615.1,710.5 L2605.1,717.3 L2594.9,723.9 L2582.4,731.7 L2569.7,739.3 L2557.0,746.8 L2544.2,754.2 L2531.5,761.8 L2516.8,770.7 L2502.1,779.8 L2487.5,788.8 L2472.7,797.6 L2457.6,806.0 L2440.4,815.0 L2423.0,823.6 L2405.4,832.0 L2387.8,840.3 L2370.1,848.6 L2351.7,857.2 L2333.3,865.8 L2314.9,874.3 L2296.3,882.6 L2277.7,890.7 L2257.5,899.3 L2237.1,907.7 L2216.7,915.9 L2196.3,924.0 L2175.8,932.0 L2153.7,940.6 L2131.6,949.2 L2109.4,957.6 L2087.2,965.9 L2064.9,974.0 L2041.8,982.4 L2018.6,990.7 L1995.3,998.8 L1972.1,1006.8 L1948.7,1014.8 L1924.8,1023.0 L1900.8,1031.1 L1876.8,1039.0 L1852.7,1046.9 L1828.6,1054.4 L1801.8,1062.5 L1774.9,1070.3 L1747.9,1077.9 L1721.0,1085.4 L1693.9,1092.8 L1665.1,1100.5 L1636.2,1108.0 L1607.3,1115.5 L1578.4,1122.8 L1549.4,1130.0 L1519.1,1137.4 L1488.7,1144.8 L1458.3,1152.0 L1427.9,1159.1 L1397.5,1166.0 L1366.2,1172.8 L1334.9,1179.3 L1303.5,1185.7 L1272.1,1192.0 L1240.7,1198.1 L1209.6,1204.0 L1178.4,1209.7 L1147.2,1215.3 L1116.0,1220.9 L1084.8,1226.5 L1054.1,1232.2 L1023.4,1238.0 L992.7,1243.7 L961.9,1249.2 L931.1,1254.3 L894.5,1259.7 L857.9,1264.8 L821.3,1269.6 L784.7,1274.3 L748.0,1279.2 L709.4,1282.9 L670.7,1286.5 L632.0,1290.2 L593.3,1293.9 L554.6,1297.6 L536.0,1299.5 L517.5,1301.5 L498.9,1303.5 L480.3,1305.5 L461.7,1307.5 L443.9,1307.6 L426.1,1307.5 L408.3,1307.5 L390.5,1307.8 L372.8,1308.4 L352.8,1309.7 L332.8,1311.4 L312.8,1313.3 L292.9,1315.3 L272.9,1317.1 L262.9,1318.0 L252.8,1319.0 L242.8,1319.9 L232.8,1320.8 L222.7,1321.6 L213.6,1322.2 L204.4,1322.7 L195.2,1323.2 L186.0,1323.6 L176.9,1324.1 Z" fill="url(#g12)" stroke="url(#g12)" stroke-width="0.8"/>
<path d="M176.9,1324.1 L186.0,1323.6 L195.2,1323.2 L204.4,1322.7 L213.6,1322.2 L222.7,1321.6 L232.8,1320.8 L242.8,1319.9 L252.8,1319.0 L262.9,1318.0 L272.9,1317.1 L292.9,1315.3 L312.8,1313.3 L332.8,1311.4 L352.8,1309.7 L372.8,1308.4 L390.5,1307.8 L408.3,1307.5 L426.1,1307.5 L443.9,1307.6 L461.7,1307.5 L480.3,1305.5 L498.9,1303.5 L517.5,1301.5 L536.0,1299.5 L554.6,1297.6 L593.3,1293.9 L632.0,1290.2 L670.7,1286.5 L709.4,1282.9 L748.0,1279.2 L784.7,1274.3 L821.3,1269.6 L857.9,1264.8 L894.5,1259.7 L931.1,1254.3 L961.9,1249.2 L992.7,1243.7 L1023.4,1238.0 L1054.1,1232.2 L1084.8,1226.5 L1116.0,1220.9 L1147.2,1215.3 L1178.4,1209.7 L1209.6,1204.0 L1240.7,1198.1 L1272.1,1192.0 L1303.5,1185.7 L1334.9,1179.3 L1366.2,1172.8 L1397.5,1166.0 L1427.9,1159.1 L1458.3,1152.0 L1488.7,1144.8 L1519.1,1137.4 L1549.4,1130.0 L1578.4,1122.8 L1607.3,1115.5 L1636.2,1108.0 L1665.1,1100.5 L1693.9,1092.8 L1721.0,1085.4 L1747.9,1077.9 L1774.9,1070.3 L1801.8,1062.5 L1828.6,1054.4 L1852.7,1046.9 L1876.8,1039.0 L1900.8,1031.1 L1924.8,1023.0 L1948.7,1014.8 L1972.1,1006.8 L1995.3,998.8 L2018.6,990.7 L2041.8,982.4 L2064.9,974.0 L2087.2,965.9 L2109.4,957.6 L2131.6,949.2 L2153.7,940.6 L2175.8,932.0 L2196.3,924.0 L2216.7,915.9 L2237.1,907.7 L2257.5,899.3 L2277.7,890.7 L2296.3,882.6 L2314.9,874.3 L2333.3,865.8 L2351.7,857.2 L2370.1,848.6 L2387.8,840.3 L2405.4,832.0 L2423.0,823.6 L2440.4,815.0 L2457.6,806.0 L2472.7,797.6 L2487.5,788.8 L2502.1,779.8 L2516.8,770.7 L2531.5,761.8 L2544.2,754.2 L2557.0,746.8 L2569.7,739.3 L2582.4,731.7 L2594.9,723.9 L2605.1,717.3 L2615.1,710.5 L2625.0,703.5 L2634.9,696.5 L2644.8,689.5 L2653.0,684.1 L2661.6,678.8 L2669.9,673.3 L2677.2,667.5 L2682.8,661.0 L2683.9,657.1 L2683.2,652.6 L2681.6,647.6 L2679.5,642.7 L2677.6,638.0 L2675.8,632.9 L2673.9,627.8 L2671.7,622.8 L2669.4,617.9 L2666.9,613.1 L2663.9,607.8 L2660.6,602.6 L2657.3,597.5 L2653.8,592.4 L2650.3,587.4 L2645.9,581.2 L2641.5,575.0 L2637.0,568.9 L2632.4,562.8 L2627.8,556.8 L2623.6,551.4 L2619.2,546.0 L2614.9,540.6 L2610.5,535.3 L2606.0,530.0 L2602.0,525.3 L2598.0,520.7 L2593.9,516.2 L2589.8,511.6 L2585.7,507.0 L2585.7,507.0 L2590.0,511.8 L2594.3,516.6 L2598.6,521.3 L2602.8,526.1 L2607.0,531.0 L2611.7,536.5 L2616.3,542.1 L2620.9,547.7 L2625.5,553.3 L2630.0,559.0 L2634.9,565.3 L2639.8,571.7 L2644.6,578.1 L2649.3,584.5 L2654.0,591.0 L2657.8,596.3 L2661.5,601.6 L2665.2,607.0 L2668.7,612.4 L2672.0,618.0 L2674.7,623.0 L2677.3,628.2 L2679.7,633.4 L2682.0,638.7 L2684.0,644.0 L2686.0,648.9 L2688.4,654.0 L2690.3,659.2 L2691.0,663.9 L2690.0,668.0 L2684.6,674.7 L2677.3,680.8 L2668.9,686.5 L2660.2,692.0 L2652.0,697.6 L2642.1,704.9 L2632.2,712.1 L2622.3,719.2 L2612.2,726.2 L2602.0,733.0 L2589.5,741.0 L2576.8,748.7 L2564.1,756.3 L2551.3,763.9 L2538.6,771.6 L2523.9,780.7 L2509.2,789.9 L2494.5,799.1 L2479.6,808.0 L2464.6,816.6 L2447.3,825.8 L2429.9,834.6 L2412.3,843.2 L2394.7,851.6 L2377.0,860.0 L2358.6,868.7 L2340.3,877.4 L2321.8,886.0 L2303.3,894.4 L2284.7,902.6 L2264.4,911.2 L2244.0,919.7 L2223.5,927.9 L2203.0,936.1 L2182.5,944.2 L2160.4,952.9 L2138.2,961.4 L2116.0,969.9 L2093.7,978.3 L2071.4,986.5 L2048.2,994.9 L2025.0,1003.2 L2001.7,1011.4 L1978.3,1019.5 L1955.0,1027.5 L1931.0,1035.7 L1907.0,1043.8 L1882.9,1051.8 L1858.8,1059.6 L1834.6,1067.2 L1807.7,1075.3 L1780.8,1083.1 L1753.8,1090.8 L1726.8,1098.3 L1699.7,1105.6 L1670.8,1113.3 L1641.8,1120.8 L1612.8,1128.1 L1583.8,1135.4 L1554.7,1142.5 L1524.3,1149.9 L1493.9,1157.3 L1463.4,1164.5 L1432.9,1171.5 L1402.4,1178.3 L1371.0,1185.0 L1339.6,1191.5 L1308.2,1197.8 L1276.7,1204.0 L1245.2,1210.0 L1214.0,1215.8 L1182.8,1221.4 L1151.5,1226.9 L1120.3,1232.3 L1089.0,1237.8 L1058.2,1243.4 L1027.3,1249.1 L996.5,1254.7 L965.6,1260.1 L934.7,1265.0 L898.0,1270.3 L861.2,1275.1 L824.4,1279.6 L787.6,1284.2 L750.8,1288.8 L711.9,1292.2 L673.1,1295.5 L634.2,1298.9 L595.4,1302.3 L556.5,1305.8 L537.9,1307.5 L519.2,1309.3 L500.6,1311.1 L481.9,1313.0 L463.3,1314.8 L445.4,1314.7 L427.6,1314.4 L409.7,1314.3 L391.8,1314.3 L374.0,1314.8 L353.9,1315.9 L333.9,1317.4 L313.9,1319.2 L293.8,1321.0 L273.8,1322.7 L263.7,1323.5 L253.6,1324.4 L243.6,1325.2 L233.5,1326.0 L223.4,1326.7 L214.2,1327.2 L205.0,1327.6 L195.9,1328.0 L186.7,1328.3 L177.5,1328.7 Z" fill="url(#g13)" stroke="url(#g13)" stroke-width="0.8"/>
<path d="M177.5,1328.7 L186.7,1328.3 L195.9,1328.0 L205.0,1327.6 L214.2,1327.2 L223.4,1326.7 L233.5,1326.0 L243.6,1325.2 L253.6,1324.4 L263.7,1323.5 L273.8,1322.7 L293.8,1321.0 L313.9,1319.2 L333.9,1317.4 L353.9,1315.9 L374.0,1314.8 L391.8,1314.3 L409.7,1314.3 L427.6,1314.4 L445.4,1314.7 L463.3,1314.8 L481.9,1313.0 L500.6,1311.1 L519.2,1309.3 L537.9,1307.5 L556.5,1305.8 L595.4,1302.3 L634.2,1298.9 L673.1,1295.5 L711.9,1292.2 L750.8,1288.8 L787.6,1284.2 L824.4,1279.6 L861.2,1275.1 L898.0,1270.3 L934.7,1265.0 L965.6,1260.1 L996.5,1254.7 L1027.3,1249.1 L1058.2,1243.4 L1089.0,1237.8 L1120.3,1232.3 L1151.5,1226.9 L1182.8,1221.4 L1214.0,1215.8 L1245.2,1210.0 L1276.7,1204.0 L1308.2,1197.8 L1339.6,1191.5 L1371.0,1185.0 L1402.4,1178.3 L1432.9,1171.5 L1463.4,1164.5 L1493.9,1157.3 L1524.3,1149.9 L1554.7,1142.5 L1583.8,1135.4 L1612.8,1128.1 L1641.8,1120.8 L1670.8,1113.3 L1699.7,1105.6 L1726.8,1098.3 L1753.8,1090.8 L1780.8,1083.1 L1807.7,1075.3 L1834.6,1067.2 L1858.8,1059.6 L1882.9,1051.8 L1907.0,1043.8 L1931.0,1035.7 L1955.0,1027.5 L1978.3,1019.5 L2001.7,1011.4 L2025.0,1003.2 L2048.2,994.9 L2071.4,986.5 L2093.7,978.3 L2116.0,969.9 L2138.2,961.4 L2160.4,952.9 L2182.5,944.2 L2203.0,936.1 L2223.5,927.9 L2244.0,919.7 L2264.4,911.2 L2284.7,902.6 L2303.3,894.4 L2321.8,886.0 L2340.3,877.4 L2358.6,868.7 L2377.0,860.0 L2394.7,851.6 L2412.3,843.2 L2429.9,834.6 L2447.3,825.8 L2464.6,816.6 L2479.6,808.0 L2494.5,799.1 L2509.2,789.9 L2523.9,780.7 L2538.6,771.6 L2551.3,763.9 L2564.1,756.3 L2576.8,748.7 L2589.5,741.0 L2602.0,733.0 L2612.2,726.2 L2622.3,719.2 L2632.2,712.1 L2642.1,704.9 L2652.0,697.6 L2660.2,692.0 L2668.9,686.5 L2677.3,680.8 L2684.6,674.7 L2690.0,668.0 L2691.0,663.9 L2690.3,659.2 L2688.4,654.0 L2686.0,648.9 L2684.0,644.0 L2682.0,638.7 L2679.7,633.4 L2677.3,628.2 L2674.7,623.0 L2672.0,618.0 L2668.7,612.4 L2665.2,607.0 L2661.5,601.6 L2657.8,596.3 L2654.0,591.0 L2649.3,584.5 L2644.6,578.1 L2639.8,571.7 L2634.9,565.3 L2630.0,559.0 L2625.5,553.3 L2620.9,547.7 L2616.3,542.1 L2611.7,536.5 L2607.0,531.0 L2602.8,526.1 L2598.6,521.3 L2594.3,516.6 L2590.0,511.8 L2585.7,507.0 L2585.7,507.0 L2590.0,511.8 L2594.4,516.6 L2598.7,521.5 L2603.0,526.3 L2607.3,531.2 L2612.0,536.8 L2616.7,542.4 L2621.4,548.0 L2626.0,553.7 L2630.5,559.4 L2635.5,565.7 L2640.4,572.1 L2645.2,578.6 L2650.0,585.1 L2654.8,591.6 L2658.6,596.9 L2662.4,602.3 L2666.1,607.7 L2669.7,613.2 L2673.0,618.8 L2675.8,623.9 L2678.5,629.1 L2680.9,634.4 L2683.2,639.8 L2685.3,645.2 L2687.4,650.3 L2689.8,655.7 L2691.8,661.1 L2692.6,666.1 L2691.6,670.5 L2686.3,677.5 L2679.1,684.0 L2670.8,690.0 L2662.2,695.9 L2654.0,701.9 L2644.1,709.5 L2634.3,717.0 L2624.3,724.5 L2614.2,731.8 L2604.0,738.9 L2591.6,747.2 L2579.0,755.3 L2566.3,763.2 L2553.6,771.1 L2540.9,779.0 L2526.1,788.3 L2511.3,797.7 L2496.4,807.0 L2481.4,816.1 L2466.3,824.8 L2449.2,834.2 L2431.9,843.4 L2414.6,852.3 L2397.1,861.1 L2379.6,869.7 L2361.3,878.7 L2342.9,887.5 L2324.5,896.1 L2306.0,904.6 L2287.4,912.9 L2267.0,921.7 L2246.6,930.3 L2226.1,938.7 L2205.5,947.0 L2184.9,955.3 L2162.9,964.1 L2140.8,972.9 L2118.7,981.6 L2096.5,990.2 L2074.3,998.6 L2051.2,1007.2 L2028.0,1015.7 L2004.8,1024.0 L1981.6,1032.2 L1958.3,1040.3 L1934.3,1048.5 L1910.2,1056.6 L1886.1,1064.5 L1862.0,1072.3 L1837.8,1079.9 L1811.0,1088.0 L1784.1,1095.9 L1757.2,1103.7 L1730.2,1111.3 L1703.2,1118.7 L1674.3,1126.5 L1645.2,1134.2 L1616.2,1141.7 L1587.1,1149.0 L1557.9,1156.2 L1527.8,1163.5 L1497.6,1170.6 L1467.4,1177.6 L1437.1,1184.5 L1406.8,1191.1 L1375.5,1197.9 L1344.2,1204.4 L1312.8,1210.9 L1281.5,1217.1 L1250.0,1223.2 L1218.9,1229.0 L1187.6,1234.5 L1156.4,1240.0 L1125.1,1245.3 L1093.8,1250.7 L1063.0,1256.1 L1032.1,1261.6 L1001.3,1267.0 L970.4,1272.1 L939.4,1276.8 L902.5,1281.7 L865.6,1286.2 L828.6,1290.5 L791.5,1294.7 L754.5,1299.0 L715.5,1302.1 L676.4,1305.1 L637.4,1308.2 L598.3,1311.3 L559.3,1314.4 L540.6,1316.0 L522.0,1317.5 L503.4,1319.1 L484.8,1320.7 L466.2,1322.3 L448.3,1322.1 L430.4,1321.9 L412.5,1321.7 L394.6,1321.7 L376.7,1322.0 L356.4,1323.0 L336.2,1324.2 L316.0,1325.7 L295.8,1327.3 L275.6,1328.8 L265.4,1329.5 L255.3,1330.3 L245.2,1331.1 L235.0,1331.9 L224.9,1332.5 L215.7,1333.0 L206.4,1333.4 L197.2,1333.8 L188.0,1334.2 L178.8,1334.6 Z" fill="url(#g14)" stroke="url(#g14)" stroke-width="0.8"/>
<path d="M178.8,1334.6 L188.0,1334.2 L197.2,1333.8 L206.4,1333.4 L215.7,1333.0 L224.9,1332.5 L235.0,1331.9 L245.2,1331.1 L255.3,1330.3 L265.4,1329.5 L275.6,1328.8 L295.8,1327.3 L316.0,1325.7 L336.2,1324.2 L356.4,1323.0 L376.7,1322.0 L394.6,1321.7 L412.5,1321.7 L430.4,1321.9 L448.3,1322.1 L466.2,1322.3 L484.8,1320.7 L503.4,1319.1 L522.0,1317.5 L540.6,1316.0 L559.3,1314.4 L598.3,1311.3 L637.4,1308.2 L676.4,1305.1 L715.5,1302.1 L754.5,1299.0 L791.5,1294.7 L828.6,1290.5 L865.6,1286.2 L902.5,1281.7 L939.4,1276.8 L970.4,1272.1 L1001.3,1267.0 L1032.1,1261.6 L1063.0,1256.1 L1093.8,1250.7 L1125.1,1245.3 L1156.4,1240.0 L1187.6,1234.5 L1218.9,1229.0 L1250.0,1223.2 L1281.5,1217.1 L1312.8,1210.9 L1344.2,1204.4 L1375.5,1197.9 L1406.8,1191.1 L1437.1,1184.5 L1467.4,1177.6 L1497.6,1170.6 L1527.8,1163.5 L1557.9,1156.2 L1587.1,1149.0 L1616.2,1141.7 L1645.2,1134.2 L1674.3,1126.5 L1703.2,1118.7 L1730.2,1111.3 L1757.2,1103.7 L1784.1,1095.9 L1811.0,1088.0 L1837.8,1079.9 L1862.0,1072.3 L1886.1,1064.5 L1910.2,1056.6 L1934.3,1048.5 L1958.3,1040.3 L1981.6,1032.2 L2004.8,1024.0 L2028.0,1015.7 L2051.2,1007.2 L2074.3,998.6 L2096.5,990.2 L2118.7,981.6 L2140.8,972.9 L2162.9,964.1 L2184.9,955.3 L2205.5,947.0 L2226.1,938.7 L2246.6,930.3 L2267.0,921.7 L2287.4,912.9 L2306.0,904.6 L2324.5,896.1 L2342.9,887.5 L2361.3,878.7 L2379.6,869.7 L2397.1,861.1 L2414.6,852.3 L2431.9,843.4 L2449.2,834.2 L2466.3,824.8 L2481.4,816.1 L2496.4,807.0 L2511.3,797.7 L2526.1,788.3 L2540.9,779.0 L2553.6,771.1 L2566.3,763.2 L2579.0,755.3 L2591.6,747.2 L2604.0,738.9 L2614.2,731.8 L2624.3,724.5 L2634.3,717.0 L2644.1,709.5 L2654.0,701.9 L2662.2,695.9 L2670.8,690.0 L2679.1,684.0 L2686.3,677.5 L2691.6,670.5 L2692.6,666.1 L2691.8,661.1 L2689.8,655.7 L2687.4,650.3 L2685.3,645.2 L2683.2,639.8 L2680.9,634.4 L2678.5,629.1 L2675.8,623.9 L2673.0,618.8 L2669.7,613.2 L2666.1,607.7 L2662.4,602.3 L2658.6,596.9 L2654.8,591.6 L2650.0,585.1 L2645.2,578.6 L2640.4,572.1 L2635.5,565.7 L2630.5,559.4 L2626.0,553.7 L2621.4,548.0 L2616.7,542.4 L2612.0,536.8 L2607.3,531.2 L2603.0,526.3 L2598.7,521.5 L2594.4,516.6 L2590.0,511.8 L2585.7,507.0 L2585.7,507.0 L2590.1,511.9 L2594.5,516.7 L2598.8,521.6 L2603.2,526.5 L2607.5,531.4 L2612.3,537.0 L2617.0,542.7 L2621.7,548.3 L2626.4,554.0 L2631.0,559.8 L2636.0,566.2 L2641.0,572.6 L2645.9,579.1 L2650.7,585.6 L2655.5,592.2 L2659.4,597.6 L2663.2,603.0 L2667.0,608.4 L2670.6,614.0 L2674.0,619.6 L2676.9,624.8 L2679.6,630.1 L2682.1,635.5 L2684.4,640.9 L2686.5,646.5 L2688.7,651.8 L2691.2,657.5 L2693.1,663.1 L2694.0,668.4 L2693.0,673.1 L2687.8,680.4 L2680.7,687.3 L2672.4,693.7 L2663.8,700.0 L2655.7,706.2 L2645.9,714.2 L2636.0,722.1 L2626.0,729.8 L2615.9,737.4 L2605.6,744.8 L2593.3,753.5 L2580.8,761.9 L2568.1,770.2 L2555.5,778.4 L2542.8,786.5 L2527.8,796.1 L2512.9,805.5 L2497.8,814.9 L2482.7,824.1 L2467.5,833.1 L2450.5,842.8 L2433.4,852.3 L2416.3,861.6 L2399.0,870.7 L2381.7,879.6 L2363.4,888.7 L2345.0,897.6 L2326.6,906.4 L2308.0,914.9 L2289.4,923.3 L2269.0,932.3 L2248.5,941.0 L2227.9,949.5 L2207.3,958.0 L2186.7,966.4 L2164.7,975.5 L2142.7,984.5 L2120.7,993.4 L2098.6,1002.3 L2076.5,1010.9 L2053.4,1019.7 L2030.3,1028.3 L2007.2,1036.7 L1984.0,1045.1 L1960.8,1053.2 L1936.8,1061.4 L1912.7,1069.5 L1888.6,1077.4 L1864.4,1085.1 L1840.2,1092.7 L1813.4,1100.8 L1786.7,1108.9 L1759.8,1116.7 L1732.9,1124.4 L1706.0,1131.9 L1676.9,1139.9 L1647.9,1147.7 L1618.7,1155.3 L1589.5,1162.8 L1560.3,1170.0 L1530.4,1177.2 L1500.5,1184.2 L1470.5,1190.9 L1440.5,1197.6 L1410.4,1204.2 L1379.2,1210.9 L1348.0,1217.6 L1316.7,1224.1 L1285.4,1230.4 L1254.1,1236.6 L1222.9,1242.4 L1191.7,1247.9 L1160.4,1253.3 L1129.2,1258.6 L1097.9,1263.8 L1067.0,1269.1 L1036.2,1274.3 L1005.3,1279.5 L974.4,1284.3 L943.5,1288.8 L906.4,1293.4 L869.2,1297.6 L832.0,1301.5 L794.8,1305.3 L757.7,1309.3 L718.4,1312.1 L679.2,1314.8 L640.0,1317.6 L600.7,1320.4 L561.5,1323.2 L542.9,1324.5 L524.3,1325.8 L505.7,1327.2 L487.2,1328.5 L468.6,1329.9 L450.6,1329.7 L432.7,1329.4 L414.8,1329.2 L396.8,1329.1 L378.9,1329.4 L358.5,1330.1 L338.1,1331.2 L317.7,1332.4 L297.4,1333.7 L277.0,1335.0 L266.8,1335.6 L256.6,1336.3 L246.4,1337.0 L236.2,1337.8 L226.0,1338.4 L216.8,1338.9 L207.5,1339.3 L198.2,1339.7 L189.0,1340.1 L179.7,1340.5 Z" fill="url(#g15)" stroke="url(#g15)" stroke-width="0.8"/>
<path d="M179.7,1340.5 L189.0,1340.1 L198.2,1339.7 L207.5,1339.3 L216.8,1338.9 L226.0,1338.4 L236.2,1337.8 L246.4,1337.0 L256.6,1336.3 L266.8,1335.6 L277.0,1335.0 L297.4,1333.7 L317.7,1332.4 L338.1,1331.2 L358.5,1330.1 L378.9,1329.4 L396.8,1329.1 L414.8,1329.2 L432.7,1329.4 L450.6,1329.7 L468.6,1329.9 L487.2,1328.5 L505.7,1327.2 L524.3,1325.8 L542.9,1324.5 L561.5,1323.2 L600.7,1320.4 L640.0,1317.6 L679.2,1314.8 L718.4,1312.1 L757.7,1309.3 L794.8,1305.3 L832.0,1301.5 L869.2,1297.6 L906.4,1293.4 L943.5,1288.8 L974.4,1284.3 L1005.3,1279.5 L1036.2,1274.3 L1067.0,1269.1 L1097.9,1263.8 L1129.2,1258.6 L1160.4,1253.3 L1191.7,1247.9 L1222.9,1242.4 L1254.1,1236.6 L1285.4,1230.4 L1316.7,1224.1 L1348.0,1217.6 L1379.2,1210.9 L1410.4,1204.2 L1440.5,1197.6 L1470.5,1190.9 L1500.5,1184.2 L1530.4,1177.2 L1560.3,1170.0 L1589.5,1162.8 L1618.7,1155.3 L1647.9,1147.7 L1676.9,1139.9 L1706.0,1131.9 L1732.9,1124.4 L1759.8,1116.7 L1786.7,1108.9 L1813.4,1100.8 L1840.2,1092.7 L1864.4,1085.1 L1888.6,1077.4 L1912.7,1069.5 L1936.8,1061.4 L1960.8,1053.2 L1984.0,1045.1 L2007.2,1036.7 L2030.3,1028.3 L2053.4,1019.7 L2076.5,1010.9 L2098.6,1002.3 L2120.7,993.4 L2142.7,984.5 L2164.7,975.5 L2186.7,966.4 L2207.3,958.0 L2227.9,949.5 L2248.5,941.0 L2269.0,932.3 L2289.4,923.3 L2308.0,914.9 L2326.6,906.4 L2345.0,897.6 L2363.4,888.7 L2381.7,879.6 L2399.0,870.7 L2416.3,861.6 L2433.4,852.3 L2450.5,842.8 L2467.5,833.1 L2482.7,824.1 L2497.8,814.9 L2512.9,805.5 L2527.8,796.1 L2542.8,786.5 L2555.5,778.4 L2568.1,770.2 L2580.8,761.9 L2593.3,753.5 L2605.6,744.8 L2615.9,737.4 L2626.0,729.8 L2636.0,722.1 L2645.9,714.2 L2655.7,706.2 L2663.8,700.0 L2672.4,693.7 L2680.7,687.3 L2687.8,680.4 L2693.0,673.1 L2694.0,668.4 L2693.1,663.1 L2691.2,657.5 L2688.7,651.8 L2686.5,646.5 L2684.4,640.9 L2682.1,635.5 L2679.6,630.1 L2676.9,624.8 L2674.0,619.6 L2670.6,614.0 L2667.0,608.4 L2663.2,603.0 L2659.4,597.6 L2655.5,592.2 L2650.7,585.6 L2645.9,579.1 L2641.0,572.6 L2636.0,566.2 L2631.0,559.8 L2626.4,554.0 L2621.7,548.3 L2617.0,542.7 L2612.3,537.0 L2607.5,531.4 L2603.2,526.5 L2598.8,521.6 L2594.5,516.7 L2590.1,511.9 L2585.7,507.0 L2585.7,507.0 L2590.1,511.9 L2594.6,516.8 L2599.0,521.7 L2603.4,526.6 L2607.7,531.6 L2612.6,537.3 L2617.3,543.0 L2622.1,548.7 L2626.8,554.4 L2631.4,560.2 L2636.5,566.7 L2641.5,573.2 L2646.5,579.7 L2651.4,586.3 L2656.2,592.9 L2660.1,598.3 L2664.0,603.7 L2667.8,609.2 L2671.5,614.8 L2674.9,620.5 L2677.8,625.8 L2680.6,631.1 L2683.2,636.6 L2685.6,642.2 L2687.7,647.8 L2689.9,653.4 L2692.4,659.3 L2694.4,665.2 L2695.2,670.8 L2694.2,675.7 L2689.1,683.5 L2682.0,690.6 L2673.8,697.5 L2665.3,704.1 L2657.1,710.7 L2647.3,719.0 L2637.4,727.2 L2627.4,735.3 L2617.2,743.2 L2606.9,750.9 L2594.6,759.9 L2582.1,768.6 L2569.6,777.3 L2556.9,785.8 L2544.2,794.1 L2529.1,803.9 L2514.0,813.5 L2498.8,822.9 L2483.5,832.3 L2468.1,841.5 L2451.3,851.4 L2434.4,861.2 L2417.4,870.9 L2400.4,880.3 L2383.1,889.5 L2364.9,898.8 L2346.5,907.9 L2328.0,916.7 L2309.4,925.4 L2290.8,933.9 L2270.3,942.9 L2249.8,951.7 L2229.1,960.4 L2208.5,969.0 L2187.8,977.6 L2165.9,986.9 L2143.9,996.1 L2122.0,1005.4 L2100.0,1014.4 L2077.9,1023.3 L2054.9,1032.2 L2031.9,1041.0 L2008.8,1049.6 L1985.7,1058.0 L1962.5,1066.2 L1938.5,1074.5 L1914.4,1082.5 L1890.3,1090.3 L1866.1,1098.0 L1841.8,1105.6 L1815.1,1113.8 L1788.4,1121.9 L1761.6,1129.9 L1734.8,1137.7 L1707.9,1145.3 L1678.8,1153.4 L1649.7,1161.3 L1620.5,1169.1 L1591.2,1176.6 L1561.9,1183.9 L1532.2,1191.0 L1502.5,1197.8 L1472.8,1204.4 L1443.0,1210.9 L1413.3,1217.4 L1382.1,1224.2 L1351.0,1230.9 L1319.8,1237.6 L1288.6,1244.0 L1257.3,1250.2 L1226.1,1256.0 L1194.9,1261.5 L1163.7,1266.8 L1132.4,1272.0 L1101.1,1277.1 L1070.3,1282.2 L1039.5,1287.3 L1008.6,1292.2 L977.7,1296.8 L946.7,1301.0 L909.5,1305.3 L872.2,1309.2 L834.8,1312.7 L797.5,1316.2 L760.1,1319.8 L720.8,1322.3 L681.4,1324.7 L642.0,1327.2 L602.6,1329.6 L563.2,1332.0 L544.7,1333.2 L526.1,1334.3 L507.6,1335.4 L489.1,1336.5 L470.5,1337.6 L452.5,1337.4 L434.6,1337.1 L416.6,1336.8 L398.6,1336.7 L380.7,1336.9 L360.1,1337.4 L339.6,1338.2 L319.1,1339.1 L298.6,1340.2 L278.0,1341.2 L267.8,1341.7 L257.5,1342.4 L247.3,1343.1 L237.0,1343.7 L226.8,1344.3 L217.5,1344.8 L208.2,1345.2 L198.9,1345.6 L189.6,1346.1 L180.3,1346.5 Z" fill="url(#g16)" stroke="url(#g16)" stroke-width="0.8"/>
<path d="M180.3,1346.5 L189.6,1346.1 L198.9,1345.6 L208.2,1345.2 L217.5,1344.8 L226.8,1344.3 L237.0,1343.7 L247.3,1343.1 L257.5,1342.4 L267.8,1341.7 L278.0,1341.2 L298.6,1340.2 L319.1,1339.1 L339.6,1338.2 L360.1,1337.4 L380.7,1336.9 L398.6,1336.7 L416.6,1336.8 L434.6,1337.1 L452.5,1337.4 L470.5,1337.6 L489.1,1336.5 L507.6,1335.4 L526.1,1334.3 L544.7,1333.2 L563.2,1332.0 L602.6,1329.6 L642.0,1327.2 L681.4,1324.7 L720.8,1322.3 L760.1,1319.8 L797.5,1316.2 L834.8,1312.7 L872.2,1309.2 L909.5,1305.3 L946.7,1301.0 L977.7,1296.8 L1008.6,1292.2 L1039.5,1287.3 L1070.3,1282.2 L1101.1,1277.1 L1132.4,1272.0 L1163.7,1266.8 L1194.9,1261.5 L1226.1,1256.0 L1257.3,1250.2 L1288.6,1244.0 L1319.8,1237.6 L1351.0,1230.9 L1382.1,1224.2 L1413.3,1217.4 L1443.0,1210.9 L1472.8,1204.4 L1502.5,1197.8 L1532.2,1191.0 L1561.9,1183.9 L1591.2,1176.6 L1620.5,1169.1 L1649.7,1161.3 L1678.8,1153.4 L1707.9,1145.3 L1734.8,1137.7 L1761.6,1129.9 L1788.4,1121.9 L1815.1,1113.8 L1841.8,1105.6 L1866.1,1098.0 L1890.3,1090.3 L1914.4,1082.5 L1938.5,1074.5 L1962.5,1066.2 L1985.7,1058.0 L2008.8,1049.6 L2031.9,1041.0 L2054.9,1032.2 L2077.9,1023.3 L2100.0,1014.4 L2122.0,1005.4 L2143.9,996.1 L2165.9,986.9 L2187.8,977.6 L2208.5,969.0 L2229.1,960.4 L2249.8,951.7 L2270.3,942.9 L2290.8,933.9 L2309.4,925.4 L2328.0,916.7 L2346.5,907.9 L2364.9,898.8 L2383.1,889.5 L2400.4,880.3 L2417.4,870.9 L2434.4,861.2 L2451.3,851.4 L2468.1,841.5 L2483.5,832.3 L2498.8,822.9 L2514.0,813.5 L2529.1,803.9 L2544.2,794.1 L2556.9,785.8 L2569.6,777.3 L2582.1,768.6 L2594.6,759.9 L2606.9,750.9 L2617.2,743.2 L2627.4,735.3 L2637.4,727.2 L2647.3,719.0 L2657.1,710.7 L2665.3,704.1 L2673.8,697.5 L2682.0,690.6 L2689.1,683.5 L2694.2,675.7 L2695.2,670.8 L2694.4,665.2 L2692.4,659.3 L2689.9,653.4 L2687.7,647.8 L2685.6,642.2 L2683.2,636.6 L2680.6,631.1 L2677.8,625.8 L2674.9,620.5 L2671.5,614.8 L2667.8,609.2 L2664.0,603.7 L2660.1,598.3 L2656.2,592.9 L2651.4,586.3 L2646.5,579.7 L2641.5,573.2 L2636.5,566.7 L2631.4,560.2 L2626.8,554.4 L2622.1,548.7 L2617.3,543.0 L2612.6,537.3 L2607.7,531.6 L2603.4,526.6 L2599.0,521.7 L2594.6,516.8 L2590.1,511.9 L2585.7,507.0 L2585.7,507.0 L2590.2,512.0 L2594.6,516.9 L2599.1,521.9 L2603.6,526.8 L2607.9,531.9 L2612.8,537.6 L2617.7,543.3 L2622.4,549.1 L2627.2,554.9 L2631.9,560.7 L2637.0,567.2 L2642.0,573.7 L2647.0,580.3 L2652.0,586.9 L2656.8,593.6 L2660.8,599.0 L2664.7,604.5 L2668.6,610.1 L2672.3,615.7 L2675.8,621.4 L2678.7,626.8 L2681.6,632.3 L2684.2,637.8 L2686.6,643.5 L2688.7,649.2 L2691.0,655.1 L2693.5,661.3 L2695.5,667.4 L2696.3,673.2 L2695.3,678.5 L2690.2,686.5 L2683.2,694.1 L2675.0,701.3 L2666.5,708.3 L2658.3,715.2 L2648.5,723.9 L2638.5,732.4 L2628.4,740.8 L2618.2,749.0 L2607.8,757.0 L2595.5,766.3 L2583.1,775.5 L2570.6,784.4 L2557.9,793.2 L2545.1,801.8 L2529.9,811.8 L2514.6,821.5 L2499.2,831.0 L2483.8,840.5 L2468.3,849.9 L2451.6,860.1 L2434.8,870.2 L2418.0,880.3 L2401.1,890.1 L2384.0,899.5 L2365.8,909.1 L2347.4,918.2 L2328.9,927.2 L2310.2,935.9 L2291.6,944.5 L2271.0,953.7 L2250.4,962.6 L2229.7,971.4 L2208.9,980.2 L2188.2,989.0 L2166.3,998.4 L2144.5,1007.9 L2122.6,1017.4 L2100.6,1026.7 L2078.5,1035.7 L2055.7,1044.8 L2032.7,1053.8 L2009.7,1062.6 L1986.6,1071.1 L1963.4,1079.4 L1939.4,1087.7 L1915.3,1095.6 L1891.1,1103.4 L1866.9,1111.1 L1842.7,1118.6 L1816.0,1126.9 L1789.4,1135.1 L1762.7,1143.2 L1735.9,1151.1 L1709.1,1158.8 L1679.9,1167.0 L1650.7,1175.1 L1621.4,1183.0 L1592.0,1190.6 L1562.6,1198.0 L1533.2,1205.0 L1503.8,1211.6 L1474.3,1218.1 L1444.8,1224.4 L1415.3,1230.8 L1384.2,1237.6 L1353.1,1244.5 L1322.0,1251.2 L1290.9,1257.8 L1259.7,1264.0 L1228.6,1269.8 L1197.4,1275.3 L1166.1,1280.6 L1134.9,1285.7 L1103.6,1290.7 L1072.8,1295.6 L1042.0,1300.5 L1011.1,1305.2 L980.2,1309.5 L949.3,1313.4 L911.9,1317.4 L874.5,1320.9 L837.0,1324.1 L799.5,1327.2 L762.0,1330.5 L722.5,1332.6 L683.0,1334.7 L643.4,1336.8 L603.9,1338.9 L564.4,1341.0 L545.9,1341.9 L527.4,1342.8 L509.0,1343.7 L490.5,1344.6 L472.0,1345.5 L454.0,1345.2 L436.0,1344.9 L418.0,1344.6 L400.0,1344.5 L382.0,1344.5 L361.3,1344.8 L340.7,1345.3 L320.0,1346.0 L299.4,1346.7 L278.7,1347.5 L268.4,1348.0 L258.1,1348.5 L247.8,1349.1 L237.5,1349.7 L227.2,1350.3 L217.9,1350.8 L208.5,1351.2 L199.2,1351.6 L189.8,1352.1 L180.5,1352.5 Z" fill="url(#g17)" stroke="url(#g17)" stroke-width="0.8"/>
<path d="M180.5,1352.5 L189.8,1352.1 L199.2,1351.6 L208.5,1351.2 L217.9,1350.8 L227.2,1350.3 L237.5,1349.7 L247.8,1349.1 L258.1,1348.5 L268.4,1348.0 L278.7,1347.5 L299.4,1346.7 L320.0,1346.0 L340.7,1345.3 L361.3,1344.8 L382.0,1344.5 L400.0,1344.5 L418.0,1344.6 L436.0,1344.9 L454.0,1345.2 L472.0,1345.5 L490.5,1344.6 L509.0,1343.7 L527.4,1342.8 L545.9,1341.9 L564.4,1341.0 L603.9,1338.9 L643.4,1336.8 L683.0,1334.7 L722.5,1332.6 L762.0,1330.5 L799.5,1327.2 L837.0,1324.1 L874.5,1320.9 L911.9,1317.4 L949.3,1313.4 L980.2,1309.5 L1011.1,1305.2 L1042.0,1300.5 L1072.8,1295.6 L1103.6,1290.7 L1134.9,1285.7 L1166.1,1280.6 L1197.4,1275.3 L1228.6,1269.8 L1259.7,1264.0 L1290.9,1257.8 L1322.0,1251.2 L1353.1,1244.5 L1384.2,1237.6 L1415.3,1230.8 L1444.8,1224.4 L1474.3,1218.1 L1503.8,1211.6 L1533.2,1205.0 L1562.6,1198.0 L1592.0,1190.6 L1621.4,1183.0 L1650.7,1175.1 L1679.9,1167.0 L1709.1,1158.8 L1735.9,1151.1 L1762.7,1143.2 L1789.4,1135.1 L1816.0,1126.9 L1842.7,1118.6 L1866.9,1111.1 L1891.1,1103.4 L1915.3,1095.6 L1939.4,1087.7 L1963.4,1079.4 L1986.6,1071.1 L2009.7,1062.6 L2032.7,1053.8 L2055.7,1044.8 L2078.5,1035.7 L2100.6,1026.7 L2122.6,1017.4 L2144.5,1007.9 L2166.3,998.4 L2188.2,989.0 L2208.9,980.2 L2229.7,971.4 L2250.4,962.6 L2271.0,953.7 L2291.6,944.5 L2310.2,935.9 L2328.9,927.2 L2347.4,918.2 L2365.8,909.1 L2384.0,899.5 L2401.1,890.1 L2418.0,880.3 L2434.8,870.2 L2451.6,860.1 L2468.3,849.9 L2483.8,840.5 L2499.2,831.0 L2514.6,821.5 L2529.9,811.8 L2545.1,801.8 L2557.9,793.2 L2570.6,784.4 L2583.1,775.5 L2595.5,766.3 L2607.8,757.0 L2618.2,749.0 L2628.4,740.8 L2638.5,732.4 L2648.5,723.9 L2658.3,715.2 L2666.5,708.3 L2675.0,701.3 L2683.2,694.1 L2690.2,686.5 L2695.3,678.5 L2696.3,673.2 L2695.5,667.4 L2693.5,661.3 L2691.0,655.1 L2688.7,649.2 L2686.6,643.5 L2684.2,637.8 L2681.6,632.3 L2678.7,626.8 L2675.8,621.4 L2672.3,615.7 L2668.6,610.1 L2664.7,604.5 L2660.8,599.0 L2656.8,593.6 L2652.0,586.9 L2647.0,580.3 L2642.0,573.7 L2637.0,567.2 L2631.9,560.7 L2627.2,554.9 L2622.4,549.1 L2617.7,543.3 L2612.8,537.6 L2607.9,531.9 L2603.6,526.8 L2599.1,521.9 L2594.6,516.9 L2590.2,512.0 L2585.7,507.0 L2585.7,507.0 L2590.2,512.0 L2594.6,516.9 L2599.1,521.9 L2603.6,526.9 L2608.0,531.9 L2612.8,537.6 L2617.7,543.3 L2622.5,549.1 L2627.2,554.9 L2631.9,560.8 L2637.0,567.3 L2642.1,573.8 L2647.1,580.4 L2652.0,587.0 L2656.9,593.7 L2660.8,599.2 L2664.8,604.6 L2668.6,610.2 L2672.3,615.8 L2675.8,621.6 L2678.8,626.9 L2681.6,632.4 L2684.3,638.0 L2686.7,643.7 L2688.8,649.4 L2691.1,655.3 L2693.5,661.4 L2695.5,667.6 L2696.3,673.4 L2695.2,678.6 L2690.1,686.7 L2683.1,694.3 L2674.9,701.5 L2666.3,708.5 L2658.1,715.4 L2648.3,724.1 L2638.3,732.6 L2628.2,741.0 L2618.0,749.2 L2607.6,757.3 L2595.3,766.6 L2582.9,775.7 L2570.3,784.7 L2557.6,793.5 L2544.8,802.1 L2529.7,812.0 L2514.3,821.7 L2498.9,831.3 L2483.5,840.7 L2468.0,850.2 L2451.2,860.4 L2434.5,870.5 L2417.7,880.6 L2400.7,890.4 L2383.6,899.9 L2365.4,909.4 L2347.0,918.6 L2328.5,927.6 L2309.9,936.3 L2291.2,944.9 L2270.6,954.1 L2250.0,963.0 L2229.3,971.8 L2208.5,980.5 L2187.8,989.3 L2165.9,998.8 L2144.0,1008.3 L2122.1,1017.8 L2100.1,1027.2 L2078.1,1036.3 L2055.2,1045.5 L2032.3,1054.5 L2009.2,1063.3 L1986.1,1071.9 L1963.0,1080.3 L1939.0,1088.6 L1914.9,1096.7 L1890.7,1104.6 L1866.5,1112.3 L1842.3,1120.0 L1815.6,1128.4 L1789.0,1136.6 L1762.3,1144.8 L1735.5,1152.8 L1708.7,1160.7 L1679.7,1169.0 L1650.7,1177.3 L1621.6,1185.3 L1592.5,1193.1 L1563.3,1200.7 L1533.8,1207.9 L1504.2,1214.7 L1474.6,1221.4 L1444.9,1228.0 L1415.3,1234.5 L1384.3,1241.5 L1353.3,1248.4 L1322.2,1255.3 L1291.2,1262.0 L1260.0,1268.3 L1228.9,1274.4 L1197.7,1280.3 L1166.5,1285.9 L1135.2,1291.4 L1103.9,1296.7 L1073.3,1301.8 L1042.6,1306.8 L1011.9,1311.6 L981.1,1316.1 L950.3,1320.2 L913.3,1324.4 L876.2,1328.3 L839.2,1331.8 L802.1,1335.3 L765.0,1338.9 L725.3,1340.7 L685.6,1342.5 L645.8,1344.4 L606.1,1346.2 L566.4,1347.9 L547.8,1348.6 L529.1,1349.3 L510.5,1349.9 L491.9,1350.5 L473.2,1351.1 L455.3,1350.7 L437.3,1350.2 L419.4,1349.8 L401.4,1349.5 L383.5,1349.5 L362.9,1349.8 L342.4,1350.4 L321.8,1351.1 L301.3,1351.9 L280.7,1352.7 L270.3,1353.1 L260.0,1353.7 L249.6,1354.2 L239.2,1354.8 L228.9,1355.4 L219.5,1355.8 L210.1,1356.3 L200.8,1356.8 L191.4,1357.2 L182.0,1357.7 Z" fill="url(#g18)" stroke="url(#g18)" stroke-width="0.8"/>
<path d="M182.0,1357.7 L191.4,1357.2 L200.8,1356.8 L210.1,1356.3 L219.5,1355.8 L228.9,1355.4 L239.2,1354.8 L249.6,1354.2 L260.0,1353.7 L270.3,1353.1 L280.7,1352.7 L301.3,1351.9 L321.8,1351.1 L342.4,1350.4 L362.9,1349.8 L383.5,1349.5 L401.4,1349.5 L419.4,1349.8 L437.3,1350.2 L455.3,1350.7 L473.2,1351.1 L491.9,1350.5 L510.5,1349.9 L529.1,1349.3 L547.8,1348.6 L566.4,1347.9 L606.1,1346.2 L645.8,1344.4 L685.6,1342.5 L725.3,1340.7 L765.0,1338.9 L802.1,1335.3 L839.2,1331.8 L876.2,1328.3 L913.3,1324.4 L950.3,1320.2 L981.1,1316.1 L1011.9,1311.6 L1042.6,1306.8 L1073.3,1301.8 L1103.9,1296.7 L1135.2,1291.4 L1166.5,1285.9 L1197.7,1280.3 L1228.9,1274.4 L1260.0,1268.3 L1291.2,1262.0 L1322.2,1255.3 L1353.3,1248.4 L1384.3,1241.5 L1415.3,1234.5 L1444.9,1228.0 L1474.6,1221.4 L1504.2,1214.7 L1533.8,1207.9 L1563.3,1200.7 L1592.5,1193.1 L1621.6,1185.3 L1650.7,1177.3 L1679.7,1169.0 L1708.7,1160.7 L1735.5,1152.8 L1762.3,1144.8 L1789.0,1136.6 L1815.6,1128.4 L1842.3,1120.0 L1866.5,1112.3 L1890.7,1104.6 L1914.9,1096.7 L1939.0,1088.6 L1963.0,1080.3 L1986.1,1071.9 L2009.2,1063.3 L2032.3,1054.5 L2055.2,1045.5 L2078.1,1036.3 L2100.1,1027.2 L2122.1,1017.8 L2144.0,1008.3 L2165.9,998.8 L2187.8,989.3 L2208.5,980.5 L2229.3,971.8 L2250.0,963.0 L2270.6,954.1 L2291.2,944.9 L2309.9,936.3 L2328.5,927.6 L2347.0,918.6 L2365.4,909.4 L2383.6,899.9 L2400.7,890.4 L2417.7,880.6 L2434.5,870.5 L2451.2,860.4 L2468.0,850.2 L2483.5,840.7 L2498.9,831.3 L2514.3,821.7 L2529.7,812.0 L2544.8,802.1 L2557.6,793.5 L2570.3,784.7 L2582.9,775.7 L2595.3,766.6 L2607.6,757.3 L2618.0,749.2 L2628.2,741.0 L2638.3,732.6 L2648.3,724.1 L2658.1,715.4 L2666.3,708.5 L2674.9,701.5 L2683.1,694.3 L2690.1,686.7 L2695.2,678.6 L2696.3,673.4 L2695.5,667.6 L2693.5,661.4 L2691.1,655.3 L2688.8,649.4 L2686.7,643.7 L2684.3,638.0 L2681.6,632.4 L2678.8,626.9 L2675.8,621.6 L2672.3,615.8 L2668.6,610.2 L2664.8,604.6 L2660.8,599.2 L2656.9,593.7 L2652.0,587.0 L2647.1,580.4 L2642.1,573.8 L2637.0,567.3 L2631.9,560.8 L2627.2,554.9 L2622.5,549.1 L2617.7,543.3 L2612.8,537.6 L2608.0,531.9 L2603.6,526.9 L2599.1,521.9 L2594.6,516.9 L2590.2,512.0 L2585.7,507.0 L2585.7,507.0 L2590.2,512.0 L2594.7,516.9 L2599.1,521.9 L2603.6,526.9 L2608.0,531.9 L2612.8,537.6 L2617.7,543.4 L2622.5,549.2 L2627.2,555.0 L2631.9,560.9 L2637.0,567.4 L2642.1,573.9 L2647.1,580.5 L2652.0,587.1 L2656.9,593.8 L2660.9,599.3 L2664.8,604.8 L2668.7,610.3 L2672.4,616.0 L2675.9,621.7 L2678.9,627.1 L2681.7,632.6 L2684.4,638.2 L2686.8,643.8 L2688.9,649.6 L2691.1,655.5 L2693.5,661.6 L2695.5,667.7 L2696.2,673.5 L2695.1,678.7 L2690.0,686.8 L2683.0,694.4 L2674.8,701.6 L2666.2,708.6 L2658.0,715.6 L2648.1,724.3 L2638.2,732.8 L2628.0,741.2 L2617.8,749.5 L2607.4,757.5 L2595.1,766.8 L2582.6,776.0 L2570.1,785.0 L2557.4,793.8 L2544.5,802.4 L2529.4,812.3 L2514.1,822.0 L2498.6,831.6 L2483.2,841.0 L2467.7,850.4 L2450.9,860.6 L2434.2,870.9 L2417.3,880.9 L2400.4,890.8 L2383.2,900.3 L2365.0,909.8 L2346.6,919.0 L2328.1,927.9 L2309.5,936.7 L2290.8,945.2 L2270.2,954.4 L2249.6,963.4 L2228.8,972.2 L2208.1,980.9 L2187.4,989.7 L2165.4,999.2 L2143.6,1008.8 L2121.6,1018.3 L2099.7,1027.7 L2077.6,1036.9 L2054.7,1046.1 L2031.8,1055.2 L2008.8,1064.1 L1985.7,1072.8 L1962.5,1081.2 L1938.5,1089.6 L1914.4,1097.8 L1890.3,1105.7 L1866.1,1113.6 L1841.8,1121.3 L1815.2,1129.8 L1788.6,1138.2 L1761.9,1146.5 L1735.1,1154.6 L1708.3,1162.6 L1679.6,1171.1 L1650.7,1179.5 L1621.9,1187.7 L1593.0,1195.7 L1563.9,1203.3 L1534.3,1210.8 L1504.6,1217.9 L1474.9,1224.7 L1445.1,1231.5 L1415.3,1238.2 L1384.4,1245.3 L1353.4,1252.4 L1322.4,1259.3 L1291.4,1266.1 L1260.3,1272.7 L1229.2,1279.1 L1198.0,1285.2 L1166.8,1291.2 L1135.6,1297.0 L1104.3,1302.6 L1073.8,1307.9 L1043.2,1313.0 L1012.6,1318.0 L981.9,1322.6 L951.2,1326.9 L914.7,1331.5 L878.0,1335.6 L841.4,1339.5 L804.7,1343.3 L768.0,1347.2 L728.1,1348.8 L688.2,1350.3 L648.2,1351.9 L608.3,1353.4 L568.4,1354.8 L549.6,1355.3 L530.8,1355.7 L512.1,1356.0 L493.3,1356.4 L474.5,1356.8 L456.6,1356.2 L438.7,1355.6 L420.8,1355.0 L402.9,1354.5 L384.9,1354.5 L364.5,1354.8 L344.0,1355.4 L323.6,1356.2 L303.1,1357.1 L282.7,1357.9 L272.3,1358.3 L261.8,1358.8 L251.4,1359.4 L241.0,1359.9 L230.6,1360.4 L221.1,1360.9 L211.7,1361.4 L202.3,1361.9 L192.9,1362.4 L183.5,1362.9 Z" fill="url(#g19)" stroke="url(#g19)" stroke-width="0.8"/>
<path d="M183.5,1362.9 L192.9,1362.4 L202.3,1361.9 L211.7,1361.4 L221.1,1360.9 L230.6,1360.4 L241.0,1359.9 L251.4,1359.4 L261.8,1358.8 L272.3,1358.3 L282.7,1357.9 L303.1,1357.1 L323.6,1356.2 L344.0,1355.4 L364.5,1354.8 L384.9,1354.5 L402.9,1354.5 L420.8,1355.0 L438.7,1355.6 L456.6,1356.2 L474.5,1356.8 L493.3,1356.4 L512.1,1356.0 L530.8,1355.7 L549.6,1355.3 L568.4,1354.8 L608.3,1353.4 L648.2,1351.9 L688.2,1350.3 L728.1,1348.8 L768.0,1347.2 L804.7,1343.3 L841.4,1339.5 L878.0,1335.6 L914.7,1331.5 L951.2,1326.9 L981.9,1322.6 L1012.6,1318.0 L1043.2,1313.0 L1073.8,1307.9 L1104.3,1302.6 L1135.6,1297.0 L1166.8,1291.2 L1198.0,1285.2 L1229.2,1279.1 L1260.3,1272.7 L1291.4,1266.1 L1322.4,1259.3 L1353.4,1252.4 L1384.4,1245.3 L1415.3,1238.2 L1445.1,1231.5 L1474.9,1224.7 L1504.6,1217.9 L1534.3,1210.8 L1563.9,1203.3 L1593.0,1195.7 L1621.9,1187.7 L1650.7,1179.5 L1679.6,1171.1 L1708.3,1162.6 L1735.1,1154.6 L1761.9,1146.5 L1788.6,1138.2 L1815.2,1129.8 L1841.8,1121.3 L1866.1,1113.6 L1890.3,1105.7 L1914.4,1097.8 L1938.5,1089.6 L1962.5,1081.2 L1985.7,1072.8 L2008.8,1064.1 L2031.8,1055.2 L2054.7,1046.1 L2077.6,1036.9 L2099.7,1027.7 L2121.6,1018.3 L2143.6,1008.8 L2165.4,999.2 L2187.4,989.7 L2208.1,980.9 L2228.8,972.2 L2249.6,963.4 L2270.2,954.4 L2290.8,945.2 L2309.5,936.7 L2328.1,927.9 L2346.6,919.0 L2365.0,909.8 L2383.2,900.3 L2400.4,890.8 L2417.3,880.9 L2434.2,870.9 L2450.9,860.6 L2467.7,850.4 L2483.2,841.0 L2498.6,831.6 L2514.1,822.0 L2529.4,812.3 L2544.5,802.4 L2557.4,793.8 L2570.1,785.0 L2582.6,776.0 L2595.1,766.8 L2607.4,757.5 L2617.8,749.5 L2628.0,741.2 L2638.2,732.8 L2648.1,724.3 L2658.0,715.6 L2666.2,708.6 L2674.8,701.6 L2683.0,694.4 L2690.0,686.8 L2695.1,678.7 L2696.2,673.5 L2695.5,667.7 L2693.5,661.6 L2691.1,655.5 L2688.9,649.6 L2686.8,643.8 L2684.4,638.2 L2681.7,632.6 L2678.9,627.1 L2675.9,621.7 L2672.4,616.0 L2668.7,610.3 L2664.8,604.8 L2660.9,599.3 L2656.9,593.8 L2652.0,587.1 L2647.1,580.5 L2642.1,573.9 L2637.0,567.4 L2631.9,560.9 L2627.2,555.0 L2622.5,549.2 L2617.7,543.4 L2612.8,537.6 L2608.0,531.9 L2603.6,526.9 L2599.1,521.9 L2594.7,516.9 L2590.2,512.0 L2585.7,507.0 L2585.7,507.0 L2590.2,512.0 L2594.7,516.9 L2599.1,521.9 L2603.6,526.9 L2608.0,532.0 L2612.9,537.7 L2617.7,543.4 L2622.5,549.2 L2627.3,555.1 L2632.0,560.9 L2637.1,567.4 L2642.1,574.0 L2647.1,580.6 L2652.1,587.2 L2657.0,593.9 L2660.9,599.4 L2664.9,604.9 L2668.7,610.4 L2672.5,616.1 L2675.9,621.9 L2678.9,627.2 L2681.8,632.7 L2684.4,638.3 L2686.8,644.0 L2688.9,649.8 L2691.1,655.6 L2693.5,661.8 L2695.4,667.9 L2696.2,673.7 L2695.1,678.9 L2689.9,687.0 L2682.9,694.6 L2674.7,701.8 L2666.1,708.8 L2657.8,715.8 L2648.0,724.5 L2638.0,733.1 L2627.9,741.5 L2617.6,749.7 L2607.2,757.8 L2594.9,767.1 L2582.4,776.2 L2569.8,785.2 L2557.1,794.1 L2544.3,802.7 L2529.1,812.6 L2513.8,822.3 L2498.3,831.9 L2482.8,841.3 L2467.3,850.7 L2450.6,860.9 L2433.8,871.2 L2417.0,881.3 L2400.0,891.1 L2382.9,900.6 L2364.7,910.2 L2346.3,919.4 L2327.7,928.3 L2309.1,937.0 L2290.4,945.6 L2269.8,954.8 L2249.2,963.7 L2228.4,972.5 L2207.7,981.3 L2186.9,990.1 L2165.0,999.6 L2143.1,1009.2 L2121.2,1018.8 L2099.2,1028.2 L2077.2,1037.4 L2054.3,1046.7 L2031.3,1055.9 L2008.3,1064.8 L1985.2,1073.6 L1962.1,1082.1 L1938.1,1090.6 L1914.0,1098.8 L1889.8,1106.9 L1865.6,1114.8 L1841.4,1122.7 L1814.8,1131.2 L1788.1,1139.7 L1761.5,1148.1 L1734.7,1156.4 L1708.0,1164.5 L1679.4,1173.1 L1650.8,1181.6 L1622.1,1190.0 L1593.4,1198.2 L1564.6,1206.0 L1534.9,1213.7 L1505.0,1221.0 L1475.1,1228.1 L1445.2,1235.0 L1415.3,1242.0 L1384.4,1249.2 L1353.5,1256.3 L1322.6,1263.4 L1291.7,1270.3 L1260.7,1277.1 L1229.5,1283.7 L1198.4,1290.2 L1167.2,1296.5 L1135.9,1302.7 L1104.7,1308.5 L1074.2,1314.0 L1043.8,1319.3 L1013.3,1324.4 L982.8,1329.2 L952.2,1333.7 L916.0,1338.5 L879.8,1342.9 L843.5,1347.2 L807.3,1351.3 L771.0,1355.6 L730.9,1356.9 L690.8,1358.2 L650.6,1359.4 L610.5,1360.6 L570.4,1361.6 L551.5,1362.0 L532.5,1362.1 L513.6,1362.2 L494.7,1362.3 L475.8,1362.4 L457.9,1361.7 L440.0,1360.9 L422.2,1360.1 L404.3,1359.6 L386.4,1359.4 L366.1,1359.7 L345.7,1360.4 L325.4,1361.3 L305.0,1362.2 L284.7,1363.1 L274.2,1363.5 L263.7,1364.0 L253.2,1364.5 L242.7,1365.0 L232.2,1365.5 L222.8,1366.0 L213.3,1366.5 L203.9,1367.1 L194.4,1367.6 L185.0,1368.1 Z" fill="url(#g20)" stroke="url(#g20)" stroke-width="0.8"/>
<path d="M185.0,1368.1 L194.4,1367.6 L203.9,1367.1 L213.3,1366.5 L222.8,1366.0 L232.2,1365.5 L242.7,1365.0 L253.2,1364.5 L263.7,1364.0 L274.2,1363.5 L284.7,1363.1 L305.0,1362.2 L325.4,1361.3 L345.7,1360.4 L366.1,1359.7 L386.4,1359.4 L404.3,1359.6 L422.2,1360.1 L440.0,1360.9 L457.9,1361.7 L475.8,1362.4 L494.7,1362.3 L513.6,1362.2 L532.5,1362.1 L551.5,1362.0 L570.4,1361.6 L610.5,1360.6 L650.6,1359.4 L690.8,1358.2 L730.9,1356.9 L771.0,1355.6 L807.3,1351.3 L843.5,1347.2 L879.8,1342.9 L916.0,1338.5 L952.2,1333.7 L982.8,1329.2 L1013.3,1324.4 L1043.8,1319.3 L1074.2,1314.0 L1104.7,1308.5 L1135.9,1302.7 L1167.2,1296.5 L1198.4,1290.2 L1229.5,1283.7 L1260.7,1277.1 L1291.7,1270.3 L1322.6,1263.4 L1353.5,1256.3 L1384.4,1249.2 L1415.3,1242.0 L1445.2,1235.0 L1475.1,1228.1 L1505.0,1221.0 L1534.9,1213.7 L1564.6,1206.0 L1593.4,1198.2 L1622.1,1190.0 L1650.8,1181.6 L1679.4,1173.1 L1708.0,1164.5 L1734.7,1156.4 L1761.5,1148.1 L1788.1,1139.7 L1814.8,1131.2 L1841.4,1122.7 L1865.6,1114.8 L1889.8,1106.9 L1914.0,1098.8 L1938.1,1090.6 L1962.1,1082.1 L1985.2,1073.6 L2008.3,1064.8 L2031.3,1055.9 L2054.3,1046.7 L2077.2,1037.4 L2099.2,1028.2 L2121.2,1018.8 L2143.1,1009.2 L2165.0,999.6 L2186.9,990.1 L2207.7,981.3 L2228.4,972.5 L2249.2,963.7 L2269.8,954.8 L2290.4,945.6 L2309.1,937.0 L2327.7,928.3 L2346.3,919.4 L2364.7,910.2 L2382.9,900.6 L2400.0,891.1 L2417.0,881.3 L2433.8,871.2 L2450.6,860.9 L2467.3,850.7 L2482.8,841.3 L2498.3,831.9 L2513.8,822.3 L2529.1,812.6 L2544.3,802.7 L2557.1,794.1 L2569.8,785.2 L2582.4,776.2 L2594.9,767.1 L2607.2,757.8 L2617.6,749.7 L2627.9,741.5 L2638.0,733.1 L2648.0,724.5 L2657.8,715.8 L2666.1,708.8 L2674.7,701.8 L2682.9,694.6 L2689.9,687.0 L2695.1,678.9 L2696.2,673.7 L2695.4,667.9 L2693.5,661.8 L2691.1,655.6 L2688.9,649.8 L2686.8,644.0 L2684.4,638.3 L2681.8,632.7 L2678.9,627.2 L2675.9,621.9 L2672.5,616.1 L2668.7,610.4 L2664.9,604.9 L2660.9,599.4 L2657.0,593.9 L2652.1,587.2 L2647.1,580.6 L2642.1,574.0 L2637.1,567.4 L2632.0,560.9 L2627.3,555.1 L2622.5,549.2 L2617.7,543.4 L2612.9,537.7 L2608.0,532.0 L2603.6,526.9 L2599.1,521.9 L2594.7,516.9 L2590.2,512.0 L2585.7,507.0 L2585.7,507.0 L2590.2,512.0 L2594.7,517.0 L2599.2,521.9 L2603.6,526.9 L2608.0,532.0 L2612.9,537.7 L2617.7,543.5 L2622.5,549.3 L2627.3,555.1 L2632.0,561.0 L2637.1,567.5 L2642.2,574.1 L2647.2,580.7 L2652.1,587.3 L2657.0,594.0 L2661.0,599.5 L2664.9,605.0 L2668.8,610.6 L2672.5,616.2 L2676.0,622.0 L2679.0,627.4 L2681.8,632.9 L2684.5,638.5 L2686.9,644.2 L2689.0,650.0 L2691.2,655.8 L2693.5,661.9 L2695.4,668.0 L2696.1,673.8 L2695.0,679.0 L2689.8,687.1 L2682.7,694.7 L2674.5,702.0 L2665.9,709.0 L2657.7,716.0 L2647.8,724.7 L2637.8,733.3 L2627.7,741.7 L2617.4,749.9 L2607.0,758.0 L2594.6,767.3 L2582.2,776.5 L2569.6,785.5 L2556.8,794.3 L2544.0,803.0 L2528.8,812.9 L2513.5,822.6 L2498.0,832.1 L2482.5,841.6 L2467.0,851.0 L2450.2,861.2 L2433.5,871.5 L2416.6,881.6 L2399.7,891.5 L2382.5,901.0 L2364.3,910.5 L2345.9,919.7 L2327.3,928.7 L2308.7,937.4 L2290.0,946.0 L2269.4,955.2 L2248.7,964.1 L2228.0,972.9 L2207.2,981.7 L2186.5,990.5 L2164.6,1000.0 L2142.7,1009.7 L2120.7,1019.3 L2098.8,1028.8 L2076.7,1038.0 L2053.8,1047.3 L2030.9,1056.5 L2007.9,1065.6 L1984.8,1074.4 L1961.6,1083.0 L1937.6,1091.6 L1913.5,1099.9 L1889.4,1108.0 L1865.2,1116.0 L1841.0,1124.0 L1814.4,1132.7 L1787.7,1141.3 L1761.1,1149.7 L1734.3,1158.1 L1707.6,1166.4 L1679.2,1175.1 L1650.8,1183.8 L1622.4,1192.4 L1593.9,1200.7 L1565.3,1208.7 L1535.4,1216.6 L1505.5,1224.1 L1475.4,1231.4 L1445.4,1238.6 L1415.3,1245.7 L1384.5,1253.0 L1353.6,1260.3 L1322.8,1267.4 L1291.9,1274.5 L1261.0,1281.4 L1229.9,1288.3 L1198.7,1295.1 L1167.5,1301.8 L1136.3,1308.3 L1105.0,1314.5 L1074.7,1320.2 L1044.4,1325.6 L1014.0,1330.8 L983.6,1335.7 L953.2,1340.4 L917.4,1345.5 L881.6,1350.3 L845.7,1354.9 L809.9,1359.4 L774.0,1364.0 L733.7,1365.0 L693.4,1366.0 L653.0,1367.0 L612.7,1367.8 L572.4,1368.5 L553.3,1368.6 L534.2,1368.6 L515.2,1368.4 L496.1,1368.2 L477.0,1368.0 L459.2,1367.2 L441.4,1366.2 L423.5,1365.3 L405.7,1364.6 L387.9,1364.4 L367.7,1364.7 L347.4,1365.4 L327.2,1366.4 L306.9,1367.4 L286.7,1368.3 L276.1,1368.7 L265.6,1369.2 L255.0,1369.6 L244.5,1370.1 L233.9,1370.6 L224.4,1371.1 L214.9,1371.6 L205.5,1372.2 L196.0,1372.7 L186.5,1373.3 Z" fill="url(#g21)" stroke="url(#g21)" stroke-width="0.8"/>
<g filter="url(#zblur)">
<path d="M152,1118 L190,1100 L206,1077 L213,1080 L217,1112 L207,1150 L160,1160 Z" fill="url(#zmag1)"/>
<path d="M147,1097 L189,1081 L207,1076 L191,1104 L192,1118 L153.5,1134 Z" fill="url(#zblu)"/>
<path d="M149,1104.5 L188.6,1087.5 L190,1098 L150.5,1113 Z" fill="#7fb03a"/>
<path d="M149.5,1108 L188,1091.5" stroke="#aac630" stroke-width="2.2" fill="none"/>
<path d="M167,1243 L215,1240 L246,1262 L249,1304 L222,1300 L172,1282 Z" fill="url(#zmag2)"/>
<path d="M170.5,1272 L222,1268 L244,1302 L223,1311 L177,1312 Z" fill="url(#zblu)"/>
<path d="M175,1296 L221.5,1291 L223,1304.5 L176.7,1308.5 Z" fill="#7fb03a"/>
<path d="M176,1302.5 L222,1298" stroke="#aac630" stroke-width="2.2" fill="none"/>
</g>
<path d="M146.3,1099.8 L155.2,1096.3 L164.1,1092.9 L173.0,1089.5 L181.8,1086.0 L190.6,1082.2 L198.7,1078.5 L206.8,1074.4 L214.7,1070.3 L222.8,1066.3 L230.9,1062.5 L247.8,1055.3 L264.8,1048.3 L281.8,1041.3 L298.8,1034.3 L315.7,1027.1 L330.0,1020.7 L344.3,1014.1 L358.5,1007.4 L372.7,1000.7 L387.0,994.0 L402.3,987.1 L417.6,980.2 L432.8,973.2 L448.2,966.3 L463.5,959.6 L493.9,946.5 L524.3,933.6 L554.7,920.7 L585.1,907.9 L615.6,895.0 L644.4,884.2 L673.3,873.4 L702.2,862.6 L731.1,851.8 L760.0,840.9 L783.6,832.0 L807.1,823.0 L830.6,814.0 L854.2,805.1 L877.9,796.5 L902.8,787.8 L927.8,779.3 L952.8,771.0 L977.9,762.7 L1003.0,754.5 L1027.6,746.5 L1052.1,738.5 L1076.7,730.5 L1101.4,722.8 L1126.2,715.4 L1151.5,708.3 L1177.0,701.6 L1202.6,695.0 L1228.1,688.3 L1253.5,681.3 L1276.4,674.5 L1299.3,667.3 L1322.1,660.0 L1345.0,652.9 L1368.0,646.3 L1391.6,640.1 L1415.4,634.3 L1439.1,628.7 L1463.0,623.2 L1486.7,617.4 L1507.8,612.1 L1528.9,606.8 L1550.0,601.4 L1571.1,596.0 L1592.3,590.8 L1613.6,585.7 L1634.9,580.7 L1656.2,575.8 L1677.6,570.9 L1698.9,565.9 L1718.9,561.2 L1738.9,556.5 L1758.9,551.8 L1778.9,547.0 L1798.9,542.1 L1817.4,537.3 L1835.8,532.3 L1854.3,527.3 L1872.8,522.5 L1891.3,518.0 L1910.9,513.7 L1930.6,509.7 L1950.3,505.9 L1970.0,502.1 L1989.7,498.3 L2008.7,494.6 L2027.7,490.9 L2046.7,487.3 L2065.7,483.6 L2084.6,479.7 L2100.2,476.4 L2115.8,472.9 L2131.3,469.4 L2146.9,465.8 L2162.4,462.3 L2177.4,458.9 L2192.5,455.5 L2207.5,452.1 L2222.5,448.6 L2237.5,444.9 L2250.1,441.4 L2262.7,437.6 L2275.2,433.8 L2287.8,430.3 L2300.5,427.4 L2311.5,425.5 L2322.6,424.0 L2333.8,423.0 L2345.0,422.5 L2356.1,422.5 L2363.5,423.2 L2371.0,424.5 L2378.3,426.4 L2385.7,428.4 L2392.9,430.5 L2401.8,433.2 L2410.6,436.0 L2419.4,439.1 L2428.1,442.2 L2436.8,445.4 L2446.0,449.0 L2455.2,452.8 L2464.3,456.6 L2473.4,460.5 L2482.6,464.3 L2491.7,468.1 L2500.9,471.9 L2510.0,475.7 L2519.2,479.4 L2528.3,483.2 L2534.7,485.8 L2541.1,488.3 L2547.4,490.9 L2553.8,493.5 L2560.2,496.1 L2565.3,498.2 L2570.4,500.4 L2575.5,502.6 L2580.6,504.8 L2585.7,507.0" fill="none" stroke="#200600" stroke-width="1.5" stroke-opacity="0.80"/>
<path d="M148.2,1113.5 L157.0,1110.2 L166.0,1106.9 L174.9,1103.6 L183.7,1100.2 L192.5,1096.6 L200.8,1093.0 L208.9,1089.1 L217.0,1085.1 L225.2,1081.2 L233.4,1077.6 L250.5,1070.5 L267.6,1063.6 L284.7,1056.8 L301.9,1049.9 L318.9,1042.8 L333.4,1036.5 L347.9,1030.1 L362.3,1023.6 L376.7,1017.1 L391.1,1010.6 L406.6,1003.7 L422.0,996.7 L437.4,989.8 L452.9,983.0 L468.4,976.3 L499.1,963.5 L529.9,950.7 L560.7,938.1 L591.5,925.5 L622.3,912.8 L651.5,902.0 L680.7,891.1 L709.9,880.3 L739.1,869.5 L768.3,858.7 L792.3,849.9 L816.3,841.0 L840.3,832.2 L864.3,823.5 L888.5,815.1 L913.8,806.5 L939.3,798.1 L964.8,789.9 L990.3,781.8 L1015.8,773.7 L1040.9,765.6 L1066.0,757.6 L1091.1,749.7 L1116.3,742.0 L1141.5,734.6 L1167.3,727.5 L1193.2,720.8 L1219.1,714.2 L1245.0,707.5 L1270.8,700.5 L1294.3,693.6 L1317.6,686.4 L1340.9,679.1 L1364.2,671.9 L1387.7,665.2 L1411.6,659.0 L1435.7,653.1 L1459.8,647.4 L1483.9,641.7 L1507.9,635.9 L1529.3,630.5 L1550.7,625.0 L1572.1,619.5 L1593.5,614.0 L1614.9,608.6 L1636.4,603.4 L1658.0,598.3 L1679.5,593.2 L1701.1,588.1 L1722.6,583.0 L1742.9,578.1 L1763.1,573.2 L1783.4,568.3 L1803.6,563.3 L1823.8,558.2 L1842.4,553.2 L1861.0,548.1 L1879.6,542.8 L1898.2,537.8 L1916.9,533.0 L1936.4,528.5 L1956.1,524.3 L1975.7,520.2 L1995.4,516.2 L2015.1,512.2 L2033.9,508.3 L2052.8,504.5 L2071.6,500.6 L2090.5,496.7 L2109.3,492.7 L2124.8,489.1 L2140.2,485.5 L2155.7,481.7 L2171.1,477.9 L2186.6,474.1 L2201.4,470.6 L2216.3,467.1 L2231.1,463.6 L2245.9,460.0 L2260.7,456.2 L2273.0,452.8 L2285.3,449.0 L2297.5,445.3 L2309.8,441.8 L2322.2,439.0 L2332.8,437.1 L2343.6,435.6 L2354.4,434.5 L2365.2,433.9 L2375.9,433.8 L2382.8,434.3 L2389.7,435.4 L2396.6,436.9 L2403.4,438.7 L2410.2,440.5 L2418.4,442.7 L2426.5,445.2 L2434.6,447.8 L2442.7,450.5 L2450.8,453.4 L2459.2,456.5 L2467.7,459.9 L2476.0,463.3 L2484.4,466.7 L2492.8,470.1 L2501.1,473.4 L2509.5,476.7 L2517.8,480.0 L2526.1,483.3 L2534.4,486.6 L2540.2,488.8 L2545.9,491.0 L2551.6,493.2 L2557.3,495.4 L2563.0,497.6 L2567.5,499.5 L2572.1,501.3 L2576.6,503.2 L2581.2,505.1 L2585.7,507.0" fill="none" stroke="#200600" stroke-width="1.5" stroke-opacity="0.80"/>
<path d="M150.0,1127.3 L158.9,1124.1 L167.9,1120.9 L176.8,1117.8 L185.7,1114.5 L194.5,1111.1 L202.8,1107.5 L211.1,1103.8 L219.3,1100.0 L227.6,1096.2 L235.9,1092.7 L253.1,1085.9 L270.4,1079.2 L287.7,1072.7 L305.0,1066.1 L322.3,1059.3 L337.0,1053.3 L351.6,1047.2 L366.3,1041.0 L380.9,1034.8 L395.5,1028.6 L411.2,1022.0 L426.8,1015.2 L442.4,1008.6 L458.0,1001.9 L473.8,995.5 L504.9,983.1 L536.2,970.8 L567.4,958.6 L598.7,946.5 L630.0,934.2 L659.6,923.7 L689.2,913.1 L718.8,902.5 L748.4,891.9 L778.0,881.4 L802.4,872.6 L826.8,863.8 L851.2,855.1 L875.6,846.5 L900.1,838.1 L925.8,829.6 L951.6,821.2 L977.4,813.0 L1003.2,804.9 L1029.1,796.8 L1054.5,788.8 L1079.9,780.7 L1105.3,772.8 L1130.8,765.0 L1156.4,757.5 L1182.5,750.3 L1208.8,743.5 L1235.1,736.8 L1261.3,730.0 L1287.5,722.9 L1311.3,715.9 L1335.0,708.6 L1358.7,701.2 L1382.5,693.9 L1406.3,687.1 L1430.5,680.7 L1454.7,674.7 L1479.1,668.8 L1503.4,663.0 L1527.6,657.0 L1549.3,651.4 L1570.8,645.7 L1592.4,639.9 L1614.0,634.2 L1635.6,628.6 L1657.3,623.2 L1678.9,617.9 L1700.6,612.6 L1722.2,607.3 L1743.9,601.9 L1764.3,596.8 L1784.6,591.7 L1805.0,586.6 L1825.3,581.3 L1845.6,576.0 L1864.4,570.8 L1883.1,565.4 L1901.8,560.0 L1920.5,554.7 L1939.3,549.7 L1958.8,544.9 L1978.4,540.4 L1998.0,536.1 L2017.6,531.8 L2037.2,527.5 L2055.9,523.4 L2074.6,519.4 L2093.3,515.4 L2112.0,511.3 L2130.7,507.0 L2146.1,503.2 L2161.4,499.3 L2176.8,495.3 L2192.1,491.3 L2207.4,487.3 L2222.1,483.6 L2236.7,479.9 L2251.4,476.3 L2266.0,472.5 L2280.6,468.7 L2292.7,465.2 L2304.6,461.4 L2316.6,457.6 L2328.7,454.2 L2340.8,451.3 L2351.2,449.3 L2361.7,447.7 L2372.2,446.5 L2382.7,445.8 L2393.2,445.4 L2399.6,445.7 L2406.1,446.5 L2412.5,447.7 L2418.9,449.1 L2425.2,450.6 L2432.8,452.5 L2440.4,454.5 L2447.9,456.7 L2455.5,459.1 L2462.9,461.5 L2470.8,464.2 L2478.5,467.1 L2486.2,470.1 L2494.0,473.1 L2501.7,476.0 L2509.3,478.9 L2516.9,481.7 L2524.5,484.5 L2532.1,487.4 L2539.7,490.1 L2544.9,492.0 L2550.0,493.8 L2555.2,495.6 L2560.3,497.4 L2565.4,499.3 L2569.5,500.8 L2573.6,502.3 L2577.6,503.9 L2581.6,505.4 L2585.7,507.0" fill="none" stroke="#200600" stroke-width="1.5" stroke-opacity="0.80"/>
<path d="M151.9,1141.1 L160.8,1138.0 L169.8,1135.0 L178.7,1132.0 L187.6,1128.9 L196.5,1125.6 L204.9,1122.2 L213.3,1118.6 L221.6,1114.9 L230.0,1111.3 L238.5,1107.9 L255.9,1101.3 L273.3,1095.0 L290.8,1088.7 L308.3,1082.3 L325.7,1075.9 L340.6,1070.2 L355.5,1064.4 L370.3,1058.5 L385.1,1052.7 L400.0,1046.9 L415.8,1040.4 L431.6,1033.9 L447.4,1027.5 L463.3,1021.1 L479.2,1014.9 L510.8,1002.9 L542.6,991.1 L574.3,979.4 L606.1,967.7 L637.8,956.0 L667.9,945.6 L697.9,935.3 L728.0,925.0 L758.0,914.7 L788.1,904.4 L812.9,895.8 L837.7,887.1 L862.5,878.5 L887.4,869.9 L912.3,861.6 L938.4,853.2 L964.5,844.9 L990.7,836.8 L1016.9,828.7 L1043.0,820.7 L1068.9,812.7 L1094.7,804.6 L1120.5,796.7 L1146.4,788.9 L1172.3,781.3 L1198.8,774.1 L1225.4,767.2 L1252.0,760.4 L1278.6,753.5 L1305.1,746.2 L1329.4,739.2 L1353.5,731.7 L1377.6,724.2 L1401.7,716.9 L1426.0,709.9 L1450.4,703.4 L1474.9,697.2 L1499.4,691.2 L1523.9,685.1 L1548.4,678.9 L1570.2,673.1 L1592.0,667.2 L1613.8,661.3 L1635.6,655.3 L1657.4,649.5 L1679.1,643.9 L1700.9,638.4 L1722.7,632.9 L1744.5,627.4 L1766.2,621.8 L1786.7,616.4 L1807.2,611.1 L1827.7,605.7 L1848.2,600.2 L1868.6,594.6 L1887.5,589.1 L1906.3,583.5 L1925.1,577.9 L1943.9,572.3 L1962.8,567.1 L1982.2,562.1 L2001.7,557.3 L2021.2,552.7 L2040.8,548.2 L2060.3,543.6 L2078.9,539.3 L2097.5,535.1 L2116.0,530.9 L2134.6,526.5 L2153.1,522.0 L2168.4,518.0 L2183.6,513.8 L2198.8,509.5 L2214.1,505.2 L2229.3,501.0 L2243.7,497.1 L2258.2,493.3 L2272.7,489.5 L2287.1,485.6 L2301.5,481.6 L2313.3,478.1 L2325.0,474.3 L2336.8,470.5 L2348.5,467.0 L2360.5,464.0 L2370.5,462.0 L2380.7,460.3 L2390.9,459.0 L2401.2,458.0 L2411.4,457.5 L2417.3,457.6 L2423.3,458.1 L2429.2,458.9 L2435.1,460.0 L2441.0,461.1 L2448.0,462.6 L2455.0,464.2 L2462.0,466.0 L2468.9,467.9 L2475.8,470.0 L2482.9,472.2 L2489.9,474.6 L2497.0,477.2 L2504.0,479.7 L2511.1,482.2 L2517.9,484.5 L2524.8,486.9 L2531.6,489.2 L2538.5,491.5 L2545.3,493.8 L2549.9,495.3 L2554.4,496.7 L2558.9,498.1 L2563.5,499.5 L2568.0,500.9 L2571.6,502.1 L2575.1,503.3 L2578.6,504.6 L2582.2,505.8 L2585.7,507.0" fill="none" stroke="#200600" stroke-width="1.5" stroke-opacity="0.80"/>
<path d="M153.8,1154.9 L162.7,1151.9 L171.7,1149.1 L180.6,1146.2 L189.5,1143.2 L198.4,1140.1 L207.0,1136.8 L215.5,1133.3 L223.9,1129.8 L232.4,1126.3 L241.0,1123.0 L258.6,1116.7 L276.2,1110.6 L293.8,1104.6 L311.5,1098.5 L329.1,1092.4 L344.2,1087.0 L359.3,1081.5 L374.3,1076.0 L389.4,1070.5 L404.5,1065.0 L420.5,1058.7 L436.5,1052.5 L452.5,1046.2 L468.5,1040.1 L484.6,1034.1 L516.8,1022.6 L549.0,1011.2 L581.2,999.9 L613.4,988.7 L645.7,977.4 L676.1,967.3 L706.6,957.3 L737.1,947.2 L767.6,937.1 L798.1,927.1 L823.4,918.6 L848.7,910.2 L874.0,901.8 L899.3,893.4 L924.7,885.3 L951.2,877.0 L977.8,868.9 L1004.3,861.0 L1031.0,853.1 L1057.6,845.1 L1083.8,837.2 L1110.1,829.3 L1136.4,821.4 L1162.8,813.7 L1189.1,806.2 L1216.0,798.9 L1242.9,791.9 L1269.9,784.9 L1296.8,777.9 L1323.7,770.6 L1348.3,763.4 L1372.9,755.9 L1397.4,748.3 L1422.0,740.8 L1446.6,733.7 L1471.2,727.0 L1495.9,720.7 L1520.7,714.5 L1545.4,708.3 L1570.1,701.9 L1592.1,695.9 L1614.1,689.8 L1636.1,683.6 L1658.1,677.5 L1680.1,671.5 L1702.0,665.6 L1723.8,659.9 L1745.8,654.1 L1767.6,648.4 L1789.5,642.6 L1810.1,637.0 L1830.8,631.4 L1851.4,625.7 L1871.9,620.0 L1892.5,614.1 L1911.5,608.5 L1930.4,602.6 L1949.3,596.7 L1968.2,591.0 L1987.2,585.5 L2006.6,580.2 L2026.0,575.2 L2045.5,570.3 L2064.9,565.5 L2084.4,560.6 L2102.8,556.1 L2121.2,551.6 L2139.7,547.2 L2158.1,542.6 L2176.4,537.8 L2191.6,533.6 L2206.7,529.1 L2221.9,524.5 L2237.0,520.0 L2252.1,515.5 L2266.3,511.4 L2280.6,507.4 L2294.8,503.4 L2309.1,499.4 L2323.3,495.2 L2334.8,491.6 L2346.3,487.8 L2357.8,483.9 L2369.3,480.4 L2381.0,477.3 L2390.7,475.2 L2400.6,473.4 L2410.5,472.0 L2420.5,470.8 L2430.4,470.0 L2435.9,469.9 L2441.3,470.1 L2446.8,470.6 L2452.2,471.3 L2457.6,472.1 L2464.0,473.1 L2470.3,474.3 L2476.6,475.7 L2482.9,477.2 L2489.2,478.8 L2495.6,480.5 L2501.9,482.5 L2508.3,484.6 L2514.6,486.6 L2520.9,488.6 L2527.0,490.5 L2533.0,492.3 L2539.0,494.1 L2545.1,495.9 L2551.2,497.6 L2555.1,498.7 L2559.0,499.7 L2562.9,500.7 L2566.8,501.7 L2570.7,502.7 L2573.7,503.5 L2576.7,504.4 L2579.7,505.3 L2582.7,506.1 L2585.7,507.0" fill="none" stroke="#200600" stroke-width="1.5" stroke-opacity="0.80"/>
<path d="M155.7,1169.1 L164.7,1166.4 L173.7,1163.7 L182.6,1161.0 L191.6,1158.1 L200.5,1155.2 L209.1,1152.1 L217.8,1148.8 L226.4,1145.4 L235.0,1142.1 L243.7,1139.0 L261.4,1133.0 L279.2,1127.2 L297.1,1121.5 L314.9,1115.7 L332.7,1109.9 L348.0,1104.9 L363.4,1099.8 L378.7,1094.6 L394.0,1089.5 L409.3,1084.4 L425.5,1078.4 L441.7,1072.5 L458.0,1066.5 L474.2,1060.6 L490.6,1054.9 L523.2,1043.9 L556.0,1033.1 L588.7,1022.3 L621.5,1011.6 L654.3,1000.9 L685.3,991.1 L716.2,981.4 L747.2,971.6 L778.2,961.8 L809.2,952.1 L835.0,943.8 L860.8,935.5 L886.6,927.2 L912.4,918.9 L938.3,910.9 L965.2,902.7 L992.2,894.7 L1019.2,886.8 L1046.2,878.9 L1073.2,871.1 L1100.0,863.2 L1126.7,855.2 L1153.4,847.3 L1180.2,839.6 L1207.0,832.0 L1234.2,824.6 L1261.5,817.5 L1288.9,810.5 L1316.1,803.4 L1343.3,796.0 L1368.4,788.7 L1393.4,781.1 L1418.3,773.4 L1443.3,765.8 L1468.3,758.5 L1493.2,751.8 L1518.1,745.3 L1543.1,738.9 L1568.0,732.5 L1592.9,725.9 L1615.2,719.7 L1637.3,713.4 L1659.5,707.0 L1681.7,700.7 L1703.9,694.4 L1725.9,688.3 L1747.9,682.4 L1769.9,676.4 L1791.9,670.4 L1813.9,664.4 L1834.6,658.5 L1855.4,652.7 L1876.1,646.7 L1896.8,640.7 L1917.5,634.6 L1936.6,628.7 L1955.6,622.7 L1974.6,616.5 L1993.7,610.5 L2012.8,604.8 L2032.0,599.3 L2051.4,594.0 L2070.7,588.8 L2090.1,583.6 L2109.5,578.5 L2127.8,573.7 L2146.1,569.0 L2164.3,564.3 L2182.6,559.5 L2200.8,554.5 L2215.9,549.9 L2230.9,545.2 L2245.9,540.3 L2260.9,535.4 L2275.9,530.7 L2290.0,526.4 L2304.0,522.2 L2318.1,518.0 L2332.1,513.8 L2346.2,509.5 L2357.4,505.8 L2368.6,501.8 L2379.9,498.0 L2391.1,494.3 L2402.5,491.1 L2412.0,488.9 L2421.5,487.0 L2431.2,485.5 L2440.8,484.2 L2450.5,483.0 L2455.4,482.7 L2460.3,482.6 L2465.2,482.7 L2470.1,483.0 L2475.0,483.4 L2480.7,484.0 L2486.4,484.8 L2492.1,485.7 L2497.7,486.8 L2503.3,487.9 L2508.9,489.2 L2514.5,490.7 L2520.1,492.2 L2525.7,493.8 L2531.2,495.3 L2536.4,496.6 L2541.6,497.9 L2546.9,499.2 L2552.1,500.4 L2557.3,501.6 L2560.5,502.3 L2563.8,502.8 L2567.0,503.4 L2570.3,503.9 L2573.5,504.5 L2576.0,505.0 L2578.4,505.5 L2580.8,506.0 L2583.3,506.5 L2585.7,507.0" fill="none" stroke="#200600" stroke-width="1.5" stroke-opacity="0.80"/>
<path d="M157.7,1183.6 L166.7,1181.1 L175.7,1178.5 L184.7,1175.9 L193.6,1173.3 L202.5,1170.5 L211.3,1167.6 L220.1,1164.4 L228.8,1161.2 L237.5,1158.1 L246.3,1155.2 L264.3,1149.5 L282.3,1144.0 L300.3,1138.5 L318.3,1133.1 L336.3,1127.7 L351.9,1122.9 L367.4,1118.2 L382.9,1113.5 L398.5,1108.7 L414.0,1104.0 L430.5,1098.3 L446.9,1092.6 L463.3,1086.9 L479.8,1081.3 L496.3,1075.9 L529.5,1065.4 L562.8,1055.1 L596.1,1044.9 L629.3,1034.8 L662.6,1024.5 L694.1,1015.1 L725.5,1005.7 L757.0,996.3 L788.5,986.8 L819.9,977.3 L846.2,969.3 L872.4,961.1 L898.6,952.9 L924.9,944.8 L951.2,936.9 L978.5,928.9 L1005.9,921.0 L1033.3,913.3 L1060.7,905.5 L1088.1,897.7 L1115.2,889.9 L1142.4,882.0 L1169.5,874.1 L1196.7,866.4 L1223.9,858.8 L1251.5,851.4 L1279.1,844.2 L1306.8,837.1 L1334.4,829.9 L1361.9,822.4 L1387.4,815.1 L1412.8,807.4 L1438.1,799.7 L1463.5,792.0 L1488.9,784.6 L1514.0,777.7 L1539.2,771.1 L1564.4,764.6 L1589.5,758.0 L1614.6,751.2 L1637.1,744.8 L1659.4,738.3 L1681.8,731.8 L1704.2,725.2 L1726.6,718.7 L1748.7,712.5 L1770.8,706.3 L1792.9,700.1 L1815.1,693.9 L1837.2,687.6 L1858.1,681.5 L1878.9,675.4 L1899.8,669.2 L1920.6,663.0 L1941.4,656.6 L1960.6,650.5 L1979.8,644.2 L1998.9,637.9 L2018.1,631.6 L2037.3,625.6 L2056.5,619.8 L2075.7,614.2 L2095.0,608.8 L2114.3,603.3 L2133.6,597.9 L2151.8,592.9 L2170.0,587.9 L2188.1,583.0 L2206.3,577.9 L2224.3,572.5 L2239.3,567.7 L2254.3,562.7 L2269.2,557.5 L2284.1,552.3 L2299.0,547.2 L2312.9,542.7 L2326.7,538.3 L2340.6,533.9 L2354.5,529.5 L2368.3,525.0 L2379.4,521.2 L2390.4,517.2 L2401.4,513.2 L2412.4,509.4 L2423.6,506.0 L2432.8,503.7 L2442.1,501.7 L2451.5,499.9 L2460.8,498.3 L2470.2,496.9 L2474.6,496.3 L2479.0,495.9 L2483.4,495.6 L2487.8,495.5 L2492.2,495.5 L2497.2,495.6 L2502.3,495.9 L2507.3,496.4 L2512.3,496.9 L2517.2,497.6 L2522.1,498.4 L2526.9,499.4 L2531.7,500.4 L2536.6,501.5 L2541.4,502.4 L2545.8,503.2 L2550.2,503.9 L2554.6,504.6 L2558.9,505.3 L2563.3,505.9 L2565.9,506.1 L2568.5,506.2 L2571.1,506.3 L2573.7,506.4 L2576.3,506.5 L2578.2,506.6 L2580.1,506.7 L2582.0,506.8 L2583.8,506.9 L2585.7,507.0" fill="none" stroke="#200600" stroke-width="1.5" stroke-opacity="0.80"/>
<path d="M159.7,1198.3 L168.7,1195.9 L177.7,1193.5 L186.7,1191.1 L195.7,1188.6 L204.6,1186.0 L213.5,1183.2 L222.4,1180.3 L231.3,1177.2 L240.1,1174.3 L249.0,1171.5 L267.2,1166.1 L285.4,1160.9 L303.6,1155.8 L321.8,1150.6 L340.0,1145.5 L355.7,1141.1 L371.5,1136.8 L387.2,1132.4 L403.0,1128.1 L418.8,1123.7 L435.4,1118.3 L452.1,1112.9 L468.7,1107.5 L485.4,1102.2 L502.1,1097.0 L535.8,1087.1 L569.6,1077.3 L603.4,1067.6 L637.2,1058.0 L671.0,1048.3 L702.9,1039.2 L734.8,1030.1 L766.7,1021.0 L798.7,1011.8 L830.6,1002.6 L857.3,994.9 L884.1,987.0 L910.8,979.1 L937.6,971.3 L964.4,963.6 L992.2,955.9 L1020.0,948.3 L1047.8,940.7 L1075.6,933.2 L1103.5,925.6 L1131.1,918.0 L1158.8,910.3 L1186.4,902.6 L1214.1,895.0 L1241.8,887.5 L1269.7,880.1 L1297.7,872.9 L1325.7,865.7 L1353.6,858.4 L1381.5,850.9 L1407.4,843.4 L1433.2,835.7 L1459.0,827.9 L1484.8,820.2 L1510.6,812.7 L1535.9,805.7 L1561.3,798.9 L1586.7,792.2 L1612.1,785.5 L1637.4,778.5 L1660.1,772.0 L1682.6,765.3 L1705.2,758.5 L1727.8,751.7 L1750.3,745.0 L1772.6,738.6 L1794.8,732.2 L1817.1,725.8 L1839.3,719.3 L1861.6,712.8 L1882.6,706.5 L1903.6,700.1 L1924.6,693.6 L1945.6,687.1 L1966.5,680.5 L1985.8,674.1 L2005.1,667.6 L2024.4,661.1 L2043.6,654.6 L2063.0,648.3 L2082.1,642.3 L2101.3,636.4 L2120.5,630.6 L2139.7,624.9 L2158.9,619.1 L2177.0,613.8 L2195.0,608.6 L2213.1,603.3 L2231.1,598.0 L2249.0,592.3 L2263.9,587.2 L2278.8,581.8 L2293.6,576.3 L2308.4,570.8 L2323.3,565.4 L2337.0,560.6 L2350.7,556.0 L2364.4,551.3 L2378.1,546.7 L2391.7,541.9 L2402.6,538.0 L2413.3,533.8 L2424.1,529.7 L2435.0,525.7 L2445.9,522.2 L2454.8,519.7 L2463.9,517.5 L2473.0,515.5 L2482.1,513.6 L2491.2,511.8 L2495.1,510.9 L2498.9,510.2 L2502.8,509.5 L2506.6,508.9 L2510.5,508.4 L2514.8,508.1 L2519.1,507.9 L2523.4,507.9 L2527.7,507.9 L2532.0,508.1 L2536.1,508.3 L2540.1,508.8 L2544.1,509.2 L2548.2,509.7 L2552.2,510.1 L2555.7,510.3 L2559.2,510.4 L2562.7,510.5 L2566.3,510.6 L2569.8,510.4 L2571.7,510.2 L2573.6,509.9 L2575.5,509.5 L2577.4,509.0 L2579.3,508.6 L2580.6,508.3 L2581.9,508.0 L2583.1,507.6 L2584.4,507.3 L2585.7,507.0" fill="none" stroke="#200600" stroke-width="1.5" stroke-opacity="0.80"/>
<path d="M161.7,1213.2 L170.8,1210.9 L179.8,1208.7 L188.8,1206.5 L197.8,1204.1 L206.7,1201.7 L215.8,1199.1 L224.7,1196.3 L233.7,1193.4 L242.7,1190.6 L251.8,1187.9 L270.1,1182.9 L288.5,1178.0 L306.8,1173.1 L325.2,1168.3 L343.6,1163.6 L359.6,1159.5 L375.6,1155.5 L391.6,1151.5 L407.6,1147.6 L423.6,1143.6 L440.4,1138.5 L457.2,1133.3 L474.1,1128.1 L491.0,1123.1 L507.9,1118.2 L542.1,1108.8 L576.4,1099.5 L610.7,1090.4 L645.0,1081.3 L679.3,1072.1 L711.7,1063.3 L744.1,1054.5 L776.5,1045.7 L808.8,1036.9 L841.2,1028.0 L868.5,1020.5 L895.7,1012.9 L923.0,1005.3 L950.2,997.8 L977.5,990.4 L1005.7,982.9 L1034.0,975.5 L1062.3,968.3 L1090.5,961.0 L1118.8,953.6 L1147.0,946.2 L1175.1,938.7 L1203.2,931.2 L1231.4,923.8 L1259.5,916.3 L1287.8,909.0 L1316.2,901.7 L1344.5,894.5 L1372.8,887.1 L1401.0,879.4 L1427.2,872.0 L1453.4,864.2 L1479.6,856.4 L1505.8,848.6 L1532.1,841.0 L1557.6,833.9 L1583.2,827.0 L1608.8,820.2 L1634.4,813.2 L1659.9,806.1 L1682.7,799.4 L1705.5,792.6 L1728.3,785.6 L1751.0,778.6 L1773.8,771.7 L1796.1,765.0 L1818.5,758.4 L1840.9,751.8 L1863.3,745.1 L1885.6,738.3 L1906.8,731.8 L1927.9,725.2 L1949.0,718.5 L1970.1,711.7 L1991.2,704.8 L2010.7,698.3 L2030.1,691.5 L2049.4,684.8 L2068.8,678.0 L2088.3,671.4 L2107.3,665.2 L2126.4,659.0 L2145.6,653.0 L2164.7,646.9 L2183.8,640.8 L2201.7,635.2 L2219.7,629.7 L2237.6,624.2 L2255.5,618.5 L2273.3,612.5 L2288.2,607.1 L2303.0,601.4 L2317.8,595.5 L2332.5,589.6 L2347.3,583.9 L2360.8,578.9 L2374.3,574.0 L2387.9,569.1 L2401.4,564.2 L2414.9,559.2 L2425.5,555.1 L2436.1,550.8 L2446.7,546.5 L2457.3,542.4 L2468.1,538.5 L2476.8,535.9 L2485.6,533.5 L2494.5,531.3 L2503.4,529.1 L2512.2,526.8 L2515.5,525.7 L2518.8,524.6 L2522.1,523.5 L2525.4,522.4 L2528.8,521.5 L2532.3,520.7 L2535.9,520.1 L2539.5,519.5 L2543.2,519.0 L2546.8,518.6 L2550.0,518.4 L2553.3,518.2 L2556.5,518.2 L2559.8,518.1 L2563.0,517.8 L2565.7,517.4 L2568.3,517.0 L2571.0,516.5 L2573.6,515.9 L2576.2,515.1 L2577.5,514.4 L2578.7,513.6 L2579.9,512.7 L2581.1,511.7 L2582.2,510.7 L2583.0,510.0 L2583.7,509.3 L2584.4,508.5 L2585.0,507.8 L2585.7,507.0" fill="none" stroke="#200600" stroke-width="1.5" stroke-opacity="0.80"/>
<path d="M163.8,1228.5 L172.9,1226.4 L181.9,1224.4 L190.9,1222.4 L199.9,1220.3 L208.9,1218.1 L218.1,1215.6 L227.2,1213.0 L236.3,1210.4 L245.5,1207.8 L254.6,1205.4 L273.2,1200.7 L291.8,1196.2 L310.3,1191.7 L328.9,1187.2 L347.6,1182.9 L363.8,1179.3 L380.0,1175.7 L396.2,1172.2 L412.5,1168.8 L428.7,1165.3 L445.8,1160.5 L462.9,1155.7 L479.9,1150.9 L497.0,1146.2 L514.2,1141.7 L549.0,1132.9 L583.8,1124.3 L618.7,1115.9 L653.6,1107.4 L688.5,1098.9 L721.4,1090.5 L754.4,1082.2 L787.3,1073.8 L820.2,1065.4 L853.2,1056.9 L880.9,1049.7 L908.7,1042.4 L936.4,1035.0 L964.2,1027.7 L991.9,1020.6 L1020.6,1013.3 L1049.3,1006.2 L1078.0,999.1 L1106.7,992.0 L1135.4,984.8 L1164.0,977.6 L1192.7,970.2 L1221.3,962.9 L1249.9,955.5 L1278.5,948.1 L1307.1,940.8 L1335.8,933.5 L1364.5,926.2 L1393.1,918.8 L1421.6,911.1 L1448.3,903.6 L1475.0,895.8 L1501.5,888.0 L1528.2,880.1 L1554.8,872.5 L1580.6,865.3 L1606.4,858.3 L1632.2,851.3 L1658.0,844.2 L1683.7,836.9 L1706.8,830.0 L1729.8,823.0 L1752.7,815.8 L1775.6,808.7 L1798.6,801.5 L1821.1,794.7 L1843.6,787.8 L1866.1,781.0 L1888.6,774.1 L1911.1,767.0 L1932.4,760.2 L1953.7,753.4 L1975.0,746.4 L1996.2,739.4 L2017.4,732.2 L2037.0,725.4 L2056.5,718.5 L2076.1,711.5 L2095.6,704.5 L2115.1,697.6 L2134.1,691.1 L2153.2,684.7 L2172.2,678.2 L2191.2,671.8 L2210.3,665.4 L2228.1,659.5 L2245.9,653.7 L2263.8,647.8 L2281.6,641.8 L2299.2,635.4 L2314.1,629.7 L2328.8,623.6 L2343.5,617.3 L2358.2,611.0 L2372.9,605.0 L2386.3,599.7 L2399.6,594.5 L2413.0,589.3 L2426.4,584.1 L2439.7,578.8 L2450.2,574.5 L2460.6,570.0 L2471.0,565.4 L2481.4,561.1 L2492.0,556.9 L2500.5,554.0 L2509.1,551.4 L2517.8,548.9 L2526.4,546.4 L2534.9,543.5 L2537.7,542.2 L2540.4,540.7 L2543.1,539.1 L2545.8,537.5 L2548.5,536.0 L2551.3,534.8 L2554.2,533.6 L2557.0,532.5 L2559.9,531.4 L2562.8,530.4 L2565.2,529.6 L2567.6,528.9 L2570.0,528.2 L2572.4,527.4 L2574.6,526.4 L2576.5,525.4 L2578.3,524.3 L2580.1,523.1 L2581.7,521.7 L2583.1,520.2 L2583.8,519.0 L2584.4,517.6 L2584.8,516.1 L2585.1,514.6 L2585.4,513.1 L2585.6,511.9 L2585.7,510.7 L2585.7,509.4 L2585.7,508.2 L2585.7,507.0" fill="none" stroke="#200600" stroke-width="1.5" stroke-opacity="0.80"/>
<path d="M166.0,1244.2 L175.0,1242.3 L184.1,1240.5 L193.1,1238.7 L202.1,1236.8 L211.2,1234.8 L220.5,1232.5 L229.7,1230.2 L239.0,1227.8 L248.3,1225.4 L257.6,1223.1 L276.3,1218.9 L295.1,1214.6 L313.9,1210.5 L332.7,1206.5 L351.6,1202.6 L368.0,1199.3 L384.5,1196.2 L401.0,1193.2 L417.5,1190.2 L433.9,1187.2 L451.3,1182.8 L468.6,1178.3 L485.9,1173.8 L503.2,1169.5 L520.6,1165.3 L556.0,1157.2 L591.4,1149.3 L626.9,1141.5 L662.3,1133.7 L697.8,1125.8 L731.3,1117.8 L764.8,1109.9 L798.3,1101.9 L831.7,1094.0 L865.2,1085.9 L893.5,1079.0 L921.8,1072.0 L950.1,1064.9 L978.4,1057.9 L1006.7,1051.0 L1035.9,1044.1 L1065.0,1037.2 L1094.2,1030.4 L1123.4,1023.6 L1152.6,1016.7 L1181.7,1009.6 L1210.9,1002.5 L1240.1,995.3 L1269.2,988.1 L1298.3,980.8 L1327.3,973.6 L1356.3,966.3 L1385.3,958.9 L1414.2,951.4 L1443.1,943.7 L1470.2,936.1 L1497.3,928.4 L1524.3,920.5 L1551.3,912.7 L1578.3,904.9 L1604.3,897.7 L1630.4,890.5 L1656.4,883.4 L1682.4,876.1 L1708.3,868.7 L1731.5,861.7 L1754.7,854.4 L1777.9,847.1 L1801.0,839.7 L1824.1,832.4 L1846.8,825.4 L1869.4,818.3 L1892.0,811.2 L1914.6,804.1 L1937.2,796.8 L1958.7,789.8 L1980.1,782.6 L2001.5,775.4 L2022.9,768.1 L2044.3,760.7 L2064.0,753.7 L2083.7,746.5 L2103.3,739.3 L2123.0,732.0 L2142.7,724.9 L2161.6,718.1 L2180.5,711.3 L2199.4,704.6 L2218.4,697.9 L2237.3,691.1 L2255.0,684.8 L2272.8,678.7 L2290.6,672.4 L2308.2,666.0 L2325.8,659.3 L2340.6,653.2 L2355.3,646.7 L2369.9,640.0 L2384.6,633.3 L2399.2,626.8 L2412.4,621.3 L2425.6,615.8 L2438.9,610.3 L2452.1,604.8 L2465.2,599.2 L2475.5,594.6 L2485.8,589.8 L2496.0,585.0 L2506.3,580.4 L2516.6,575.9 L2525.0,572.7 L2533.4,569.9 L2541.9,567.1 L2550.3,564.1 L2558.4,560.7 L2560.8,559.2 L2562.9,557.3 L2564.9,555.2 L2566.9,553.0 L2569.0,551.0 L2571.1,549.2 L2573.1,547.6 L2575.2,545.9 L2577.3,544.2 L2579.3,542.4 L2580.9,541.1 L2582.5,539.7 L2584.0,538.4 L2585.5,536.9 L2586.7,535.3 L2587.7,533.5 L2588.6,531.6 L2589.3,529.6 L2589.9,527.6 L2590.2,525.5 L2590.3,523.6 L2590.1,521.5 L2589.7,519.5 L2589.2,517.5 L2588.7,515.5 L2588.2,513.8 L2587.6,512.1 L2587.0,510.4 L2586.3,508.7 L2585.7,507.0" fill="none" stroke="#200600" stroke-width="1.5" stroke-opacity="0.80"/>
<path d="M168.2,1260.2 L177.2,1258.6 L186.3,1257.1 L195.4,1255.5 L204.5,1253.9 L213.5,1252.2 L222.9,1250.2 L232.4,1248.1 L241.8,1245.9 L251.2,1243.8 L260.7,1241.8 L279.7,1238.0 L298.7,1234.2 L317.7,1230.5 L336.8,1226.9 L355.8,1223.5 L372.6,1220.8 L389.3,1218.2 L406.1,1215.8 L422.9,1213.3 L439.7,1210.9 L457.3,1206.9 L474.8,1202.9 L492.4,1198.9 L510.0,1195.0 L527.7,1191.2 L563.8,1183.9 L599.9,1176.8 L636.0,1169.7 L672.1,1162.7 L708.3,1155.6 L742.4,1148.2 L776.5,1140.8 L810.7,1133.4 L844.8,1126.0 L878.9,1118.4 L907.8,1111.8 L936.7,1105.0 L965.6,1098.2 L994.4,1091.4 L1023.3,1084.7 L1053.0,1078.0 L1082.6,1071.3 L1112.3,1064.7 L1142.0,1058.0 L1171.6,1051.2 L1201.4,1044.3 L1231.1,1037.3 L1260.8,1030.2 L1290.4,1023.1 L1320.1,1015.8 L1349.4,1008.5 L1378.7,1001.2 L1408.0,993.8 L1437.3,986.3 L1466.5,978.5 L1494.1,971.0 L1521.5,963.3 L1549.0,955.5 L1576.4,947.6 L1603.8,939.8 L1630.0,932.4 L1656.3,925.2 L1682.5,917.9 L1708.7,910.5 L1734.9,902.8 L1758.3,895.7 L1781.7,888.3 L1805.0,880.8 L1828.3,873.2 L1851.6,865.7 L1874.4,858.4 L1897.1,851.1 L1919.9,843.8 L1942.6,836.4 L1965.3,828.9 L1986.9,821.6 L2008.5,814.2 L2030.1,806.7 L2051.6,799.1 L2073.1,791.5 L2092.9,784.2 L2112.8,776.8 L2132.6,769.4 L2152.3,761.9 L2172.1,754.4 L2191.0,747.3 L2209.8,740.3 L2228.6,733.2 L2247.4,726.1 L2266.2,718.9 L2283.9,712.3 L2301.6,705.8 L2319.2,699.1 L2336.8,692.3 L2354.3,685.2 L2369.1,678.6 L2383.7,671.7 L2398.3,664.6 L2412.9,657.5 L2427.5,650.5 L2440.5,644.6 L2453.6,638.8 L2466.7,633.0 L2479.7,627.1 L2492.7,621.1 L2502.9,616.2 L2512.9,611.2 L2523.0,606.1 L2533.1,601.1 L2543.3,596.2 L2551.5,592.8 L2559.8,589.6 L2568.1,586.5 L2576.2,583.0 L2583.8,579.0 L2585.8,577.2 L2587.4,574.9 L2588.7,572.3 L2589.9,569.5 L2591.2,566.9 L2592.5,564.7 L2593.8,562.4 L2595.0,560.1 L2596.2,557.7 L2597.2,555.4 L2598.0,553.3 L2598.6,551.2 L2599.2,549.1 L2599.5,546.9 L2599.7,544.8 L2599.7,542.1 L2599.5,539.3 L2599.1,536.6 L2598.6,533.9 L2597.9,531.2 L2597.1,528.5 L2596.0,525.9 L2594.8,523.3 L2593.6,520.7 L2592.3,518.1 L2591.1,515.9 L2589.8,513.6 L2588.4,511.4 L2587.0,509.2 L2585.7,507.0" fill="none" stroke="#200600" stroke-width="1.5" stroke-opacity="0.80"/>
<path d="M170.4,1276.7 L179.5,1275.4 L188.6,1274.1 L197.7,1272.7 L206.8,1271.4 L215.9,1269.9 L225.5,1268.2 L235.1,1266.4 L244.6,1264.5 L254.2,1262.6 L263.8,1260.9 L283.1,1257.5 L302.3,1254.2 L321.6,1250.9 L340.9,1247.7 L360.2,1244.8 L377.2,1242.5 L394.2,1240.5 L411.3,1238.6 L428.3,1236.7 L445.4,1234.8 L463.2,1231.3 L481.1,1227.7 L499.0,1224.1 L516.8,1220.7 L534.7,1217.3 L571.5,1210.8 L608.3,1204.4 L645.0,1198.2 L681.8,1191.9 L718.6,1185.6 L753.4,1178.7 L788.2,1171.9 L822.9,1165.1 L857.7,1158.1 L892.4,1151.0 L921.9,1144.7 L951.3,1138.1 L980.7,1131.5 L1010.1,1124.9 L1039.5,1118.3 L1069.6,1111.8 L1099.8,1105.3 L1129.9,1098.9 L1160.0,1092.3 L1190.1,1085.7 L1220.3,1078.8 L1250.5,1071.9 L1280.7,1064.9 L1310.9,1057.7 L1341.0,1050.5 L1370.6,1043.3 L1400.3,1036.0 L1429.9,1028.6 L1459.4,1021.0 L1489.0,1013.3 L1516.9,1005.8 L1544.7,998.1 L1572.5,990.3 L1600.4,982.5 L1628.2,974.6 L1654.6,967.2 L1681.0,959.9 L1707.5,952.5 L1733.8,944.9 L1760.1,937.1 L1783.8,929.8 L1807.3,922.3 L1830.8,914.7 L1854.3,906.9 L1877.8,899.2 L1900.7,891.7 L1923.6,884.2 L1946.4,876.7 L1969.3,869.1 L1992.1,861.3 L2013.8,853.8 L2035.5,846.1 L2057.2,838.4 L2078.9,830.6 L2100.5,822.6 L2120.5,815.2 L2140.5,807.6 L2160.4,799.9 L2180.3,792.2 L2200.2,784.4 L2219.0,777.1 L2237.7,769.7 L2256.4,762.3 L2275.1,754.8 L2293.8,747.3 L2311.4,740.3 L2329.0,733.4 L2346.6,726.4 L2364.1,719.1 L2381.5,711.5 L2396.3,704.6 L2410.9,697.2 L2425.4,689.7 L2440.0,682.1 L2454.6,674.7 L2467.5,668.4 L2480.4,662.2 L2493.4,656.1 L2506.3,649.8 L2519.1,643.5 L2529.2,638.2 L2539.2,632.9 L2549.1,627.5 L2559.1,622.1 L2569.1,616.8 L2577.2,613.0 L2585.5,609.5 L2593.7,605.9 L2601.5,602.0 L2608.6,597.4 L2610.3,595.2 L2611.3,592.5 L2611.9,589.3 L2612.3,586.0 L2612.7,582.9 L2613.3,580.0 L2613.9,577.1 L2614.3,574.2 L2614.6,571.2 L2614.6,568.3 L2614.5,565.5 L2614.2,562.7 L2613.7,559.8 L2613.1,557.0 L2612.4,554.3 L2611.3,550.7 L2610.0,547.2 L2608.6,543.7 L2607.1,540.3 L2605.4,536.9 L2603.7,533.6 L2601.8,530.3 L2599.8,527.1 L2597.8,523.9 L2595.7,520.8 L2593.8,518.0 L2591.8,515.2 L2589.8,512.5 L2587.7,509.7 L2585.7,507.0" fill="none" stroke="#200600" stroke-width="1.5" stroke-opacity="0.80"/>
<path d="M172.7,1293.4 L181.8,1292.3 L190.9,1291.3 L200.1,1290.3 L209.2,1289.2 L218.3,1288.0 L228.0,1286.6 L237.8,1285.0 L247.5,1283.5 L257.3,1281.9 L267.0,1280.4 L286.5,1277.6 L306.0,1274.6 L325.5,1271.8 L345.0,1269.2 L364.6,1266.8 L381.8,1265.0 L399.1,1263.6 L416.5,1262.3 L433.8,1261.1 L451.1,1259.7 L469.2,1256.7 L487.3,1253.6 L505.5,1250.6 L523.6,1247.6 L541.7,1244.7 L579.1,1239.1 L616.6,1233.6 L654.0,1228.1 L691.5,1222.7 L728.9,1217.3 L764.3,1211.1 L799.8,1204.9 L835.2,1198.7 L870.6,1192.4 L905.9,1185.7 L935.8,1179.8 L965.8,1173.5 L995.6,1167.1 L1025.5,1160.7 L1055.4,1154.4 L1085.9,1148.1 L1116.4,1141.8 L1146.9,1135.6 L1177.4,1129.3 L1207.9,1122.8 L1238.5,1116.1 L1269.1,1109.3 L1299.7,1102.4 L1330.3,1095.4 L1360.8,1088.2 L1390.7,1081.1 L1420.7,1073.8 L1450.6,1066.5 L1480.4,1058.9 L1510.2,1051.3 L1538.5,1043.9 L1566.8,1036.3 L1595.0,1028.5 L1623.2,1020.8 L1651.3,1012.9 L1678.0,1005.5 L1704.6,998.1 L1731.2,990.6 L1757.8,982.9 L1784.3,975.0 L1808.1,967.6 L1831.8,960.0 L1855.5,952.2 L1879.1,944.3 L1902.8,936.4 L1925.8,928.8 L1948.8,921.1 L1971.8,913.3 L1994.8,905.5 L2017.7,897.5 L2039.6,889.7 L2061.5,881.8 L2083.4,873.9 L2105.2,865.8 L2127.0,857.6 L2147.1,849.9 L2167.2,842.1 L2187.3,834.3 L2207.4,826.3 L2227.4,818.3 L2246.1,810.7 L2264.7,803.0 L2283.4,795.2 L2302.0,787.4 L2320.5,779.5 L2338.1,772.1 L2355.7,764.7 L2373.3,757.2 L2390.7,749.6 L2408.0,741.5 L2422.9,734.1 L2437.5,726.3 L2452.1,718.2 L2466.6,710.2 L2481.2,702.3 L2494.0,695.6 L2506.9,689.0 L2519.7,682.5 L2532.5,675.8 L2545.3,669.0 L2555.3,663.3 L2565.2,657.6 L2575.1,651.7 L2585.0,645.8 L2595.0,640.0 L2603.0,635.8 L2611.4,631.7 L2619.6,627.6 L2627.2,623.1 L2633.7,617.9 L2635.2,615.2 L2635.7,611.9 L2635.5,608.2 L2635.0,604.3 L2634.7,600.7 L2634.5,597.1 L2634.2,593.4 L2633.7,589.8 L2633.1,586.3 L2632.3,582.7 L2631.2,579.1 L2629.9,575.5 L2628.5,571.9 L2626.9,568.4 L2625.2,564.9 L2623.0,560.5 L2620.6,556.1 L2618.2,551.8 L2615.7,547.5 L2613.0,543.3 L2610.4,539.3 L2607.7,535.3 L2604.9,531.4 L2602.1,527.6 L2599.2,523.7 L2596.6,520.3 L2593.9,517.0 L2591.2,513.6 L2588.4,510.3 L2585.7,507.0" fill="none" stroke="#200600" stroke-width="1.5" stroke-opacity="0.80"/>
<path d="M175.0,1310.3 L184.1,1309.5 L193.3,1308.8 L202.4,1308.1 L211.6,1307.3 L220.7,1306.4 L230.7,1305.3 L240.6,1304.1 L250.5,1302.8 L260.4,1301.6 L270.3,1300.4 L290.0,1298.1 L309.8,1295.7 L329.5,1293.3 L349.3,1291.2 L369.1,1289.4 L386.6,1288.2 L404.2,1287.4 L421.8,1286.8 L439.5,1286.2 L457.1,1285.5 L475.5,1283.0 L493.8,1280.5 L512.2,1278.0 L530.6,1275.5 L549.0,1273.2 L587.2,1268.5 L625.3,1263.9 L663.5,1259.4 L701.6,1254.9 L739.7,1250.4 L775.8,1244.8 L812.0,1239.4 L848.1,1233.9 L884.1,1228.2 L920.1,1222.2 L950.7,1216.6 L981.1,1210.8 L1011.5,1204.7 L1042.0,1198.6 L1072.4,1192.5 L1103.4,1186.6 L1134.3,1180.7 L1165.3,1174.7 L1196.2,1168.7 L1227.2,1162.5 L1258.3,1156.0 L1289.4,1149.5 L1320.5,1142.8 L1351.6,1136.0 L1382.6,1129.0 L1412.9,1121.9 L1443.1,1114.7 L1473.2,1107.4 L1503.4,1099.9 L1533.5,1092.4 L1562.1,1085.0 L1590.8,1077.5 L1619.4,1070.0 L1647.9,1062.3 L1676.5,1054.5 L1703.3,1047.0 L1730.2,1039.6 L1757.0,1032.0 L1783.7,1024.2 L1810.4,1016.2 L1834.3,1008.7 L1858.2,1000.9 L1882.1,993.0 L1905.9,985.0 L1929.7,976.9 L1952.9,969.1 L1976.1,961.2 L1999.2,953.2 L2022.3,945.1 L2045.3,936.9 L2067.4,928.9 L2089.4,920.8 L2111.4,912.6 L2133.4,904.3 L2155.3,895.8 L2175.7,887.9 L2195.9,880.0 L2216.2,871.9 L2236.4,863.7 L2256.5,855.3 L2275.1,847.5 L2293.7,839.4 L2312.2,831.3 L2330.7,823.1 L2349.2,814.8 L2366.8,806.9 L2384.3,799.1 L2401.9,791.1 L2419.3,782.9 L2436.5,774.3 L2451.4,766.4 L2466.1,758.1 L2480.7,749.5 L2495.3,740.9 L2509.9,732.5 L2522.6,725.4 L2535.4,718.3 L2548.2,711.3 L2560.9,704.1 L2573.5,696.8 L2583.5,690.7 L2593.4,684.4 L2603.3,678.1 L2613.1,671.6 L2623.0,665.2 L2631.0,660.4 L2639.5,655.8 L2647.7,651.0 L2655.1,645.9 L2661.0,640.0 L2662.3,636.8 L2662.1,632.8 L2661.1,628.5 L2659.7,624.1 L2658.5,619.9 L2657.5,615.5 L2656.2,611.1 L2654.9,606.8 L2653.3,602.5 L2651.6,598.3 L2649.4,593.8 L2647.0,589.4 L2644.5,585.0 L2641.9,580.7 L2639.2,576.5 L2635.8,571.1 L2632.3,565.8 L2628.7,560.6 L2625.0,555.4 L2621.3,550.2 L2617.8,545.5 L2614.1,540.8 L2610.5,536.1 L2606.8,531.5 L2603.0,526.9 L2599.6,522.9 L2596.2,518.9 L2592.7,514.9 L2589.2,511.0 L2585.7,507.0" fill="none" stroke="#200600" stroke-width="1.5" stroke-opacity="0.80"/>
<path d="M177.5,1328.7 L186.7,1328.3 L195.9,1328.0 L205.0,1327.6 L214.2,1327.2 L223.4,1326.7 L233.5,1326.0 L243.6,1325.2 L253.6,1324.4 L263.7,1323.5 L273.8,1322.7 L293.8,1321.0 L313.9,1319.2 L333.9,1317.4 L353.9,1315.9 L374.0,1314.8 L391.8,1314.3 L409.7,1314.3 L427.6,1314.4 L445.4,1314.7 L463.3,1314.8 L481.9,1313.0 L500.6,1311.1 L519.2,1309.3 L537.9,1307.5 L556.5,1305.8 L595.4,1302.3 L634.2,1298.9 L673.1,1295.5 L711.9,1292.2 L750.8,1288.8 L787.6,1284.2 L824.4,1279.6 L861.2,1275.1 L898.0,1270.3 L934.7,1265.0 L965.6,1260.1 L996.5,1254.7 L1027.3,1249.1 L1058.2,1243.4 L1089.0,1237.8 L1120.3,1232.3 L1151.5,1226.9 L1182.8,1221.4 L1214.0,1215.8 L1245.2,1210.0 L1276.7,1204.0 L1308.2,1197.8 L1339.6,1191.5 L1371.0,1185.0 L1402.4,1178.3 L1432.9,1171.5 L1463.4,1164.5 L1493.9,1157.3 L1524.3,1149.9 L1554.7,1142.5 L1583.8,1135.4 L1612.8,1128.1 L1641.8,1120.8 L1670.8,1113.3 L1699.7,1105.6 L1726.8,1098.3 L1753.8,1090.8 L1780.8,1083.1 L1807.7,1075.3 L1834.6,1067.2 L1858.8,1059.6 L1882.9,1051.8 L1907.0,1043.8 L1931.0,1035.7 L1955.0,1027.5 L1978.3,1019.5 L2001.7,1011.4 L2025.0,1003.2 L2048.2,994.9 L2071.4,986.5 L2093.7,978.3 L2116.0,969.9 L2138.2,961.4 L2160.4,952.9 L2182.5,944.2 L2203.0,936.1 L2223.5,927.9 L2244.0,919.7 L2264.4,911.2 L2284.7,902.6 L2303.3,894.4 L2321.8,886.0 L2340.3,877.4 L2358.6,868.7 L2377.0,860.0 L2394.7,851.6 L2412.3,843.2 L2429.9,834.6 L2447.3,825.8 L2464.6,816.6 L2479.6,808.0 L2494.5,799.1 L2509.2,789.9 L2523.9,780.7 L2538.6,771.6 L2551.3,763.9 L2564.1,756.3 L2576.8,748.7 L2589.5,741.0 L2602.0,733.0 L2612.2,726.2 L2622.3,719.2 L2632.2,712.1 L2642.1,704.9 L2652.0,697.6 L2660.2,692.0 L2668.9,686.5 L2677.3,680.8 L2684.6,674.7 L2690.0,668.0 L2691.0,663.9 L2690.3,659.2 L2688.4,654.0 L2686.0,648.9 L2684.0,644.0 L2682.0,638.7 L2679.7,633.4 L2677.3,628.2 L2674.7,623.0 L2672.0,618.0 L2668.7,612.4 L2665.2,607.0 L2661.5,601.6 L2657.8,596.3 L2654.0,591.0 L2649.3,584.5 L2644.6,578.1 L2639.8,571.7 L2634.9,565.3 L2630.0,559.0 L2625.5,553.3 L2620.9,547.7 L2616.3,542.1 L2611.7,536.5 L2607.0,531.0 L2602.8,526.1 L2598.6,521.3 L2594.3,516.6 L2590.0,511.8 L2585.7,507.0" fill="none" stroke="#200600" stroke-width="1.5" stroke-opacity="0.80"/>
<path d="M180.5,1352.5 L189.8,1352.1 L199.2,1351.6 L208.5,1351.2 L217.9,1350.8 L227.2,1350.3 L237.5,1349.7 L247.8,1349.1 L258.1,1348.5 L268.4,1348.0 L278.7,1347.5 L299.4,1346.7 L320.0,1346.0 L340.7,1345.3 L361.3,1344.8 L382.0,1344.5 L400.0,1344.5 L418.0,1344.6 L436.0,1344.9 L454.0,1345.2 L472.0,1345.5 L490.5,1344.6 L509.0,1343.7 L527.4,1342.8 L545.9,1341.9 L564.4,1341.0 L603.9,1338.9 L643.4,1336.8 L683.0,1334.7 L722.5,1332.6 L762.0,1330.5 L799.5,1327.2 L837.0,1324.1 L874.5,1320.9 L911.9,1317.4 L949.3,1313.4 L980.2,1309.5 L1011.1,1305.2 L1042.0,1300.5 L1072.8,1295.6 L1103.6,1290.7 L1134.9,1285.7 L1166.1,1280.6 L1197.4,1275.3 L1228.6,1269.8 L1259.7,1264.0 L1290.9,1257.8 L1322.0,1251.2 L1353.1,1244.5 L1384.2,1237.6 L1415.3,1230.8 L1444.8,1224.4 L1474.3,1218.1 L1503.8,1211.6 L1533.2,1205.0 L1562.6,1198.0 L1592.0,1190.6 L1621.4,1183.0 L1650.7,1175.1 L1679.9,1167.0 L1709.1,1158.8 L1735.9,1151.1 L1762.7,1143.2 L1789.4,1135.1 L1816.0,1126.9 L1842.7,1118.6 L1866.9,1111.1 L1891.1,1103.4 L1915.3,1095.6 L1939.4,1087.7 L1963.4,1079.4 L1986.6,1071.1 L2009.7,1062.6 L2032.7,1053.8 L2055.7,1044.8 L2078.5,1035.7 L2100.6,1026.7 L2122.6,1017.4 L2144.5,1007.9 L2166.3,998.4 L2188.2,989.0 L2208.9,980.2 L2229.7,971.4 L2250.4,962.6 L2271.0,953.7 L2291.6,944.5 L2310.2,935.9 L2328.9,927.2 L2347.4,918.2 L2365.8,909.1 L2384.0,899.5 L2401.1,890.1 L2418.0,880.3 L2434.8,870.2 L2451.6,860.1 L2468.3,849.9 L2483.8,840.5 L2499.2,831.0 L2514.6,821.5 L2529.9,811.8 L2545.1,801.8 L2557.9,793.2 L2570.6,784.4 L2583.1,775.5 L2595.5,766.3 L2607.8,757.0 L2618.2,749.0 L2628.4,740.8 L2638.5,732.4 L2648.5,723.9 L2658.3,715.2 L2666.5,708.3 L2675.0,701.3 L2683.2,694.1 L2690.2,686.5 L2695.3,678.5 L2696.3,673.2 L2695.5,667.4 L2693.5,661.3 L2691.0,655.1 L2688.7,649.2 L2686.6,643.5 L2684.2,637.8 L2681.6,632.3 L2678.7,626.8 L2675.8,621.4 L2672.3,615.7 L2668.6,610.1 L2664.7,604.5 L2660.8,599.0 L2656.8,593.6 L2652.0,586.9 L2647.0,580.3 L2642.0,573.7 L2637.0,567.2 L2631.9,560.7 L2627.2,554.9 L2622.4,549.1 L2617.7,543.3 L2612.8,537.6 L2607.9,531.9 L2603.6,526.8 L2599.1,521.9 L2594.6,516.9 L2590.2,512.0 L2585.7,507.0" fill="none" stroke="#200600" stroke-width="1.5" stroke-opacity="0.80"/>
<path d="M1245.2,1210.0 L1276.7,1203.7 L1308.1,1197.6 L1339.6,1191.3 L1371.0,1185.0 L1402.4,1178.3 L1432.9,1171.5 L1463.4,1164.5 L1493.9,1157.3 L1524.3,1149.9 L1554.7,1142.5 L1583.7,1135.3 L1612.7,1127.9 L1641.7,1120.5 L1670.7,1113.0 L1699.7,1105.6" fill="none" stroke="#0c0200" stroke-width="1.8"/>
<path d="M1699.7,1105.6 L1726.7,1098.0 L1753.7,1090.5 L1780.8,1082.9 L1807.7,1075.2 L1834.6,1067.2 L1858.8,1059.6 L1882.9,1051.8 L1907.0,1043.8 L1931.0,1035.7 L1955.0,1027.5 L1978.3,1019.5 L2001.7,1011.4 L2025.0,1003.2 L2048.2,994.9 L2071.4,986.5 L2093.7,978.3 L2116.0,969.9 L2138.2,961.4 L2160.4,952.9 L2182.5,944.2 L2203.0,936.1 L2223.5,927.9 L2244.0,919.7 L2264.4,911.2 L2284.7,902.6 L2303.3,894.4 L2321.8,886.0 L2340.3,877.4 L2358.6,868.7 L2377.0,860.0 L2394.7,851.6 L2412.3,843.2 L2429.9,834.6 L2447.3,825.8 L2464.6,816.6 L2479.6,808.0 L2494.5,799.1 L2509.2,789.9 L2523.9,780.7 L2538.6,771.6 L2551.3,763.9 L2564.1,756.3 L2576.8,748.7 L2589.5,741.0 L2602.0,733.0 L2612.2,726.2 L2622.3,719.2 L2632.2,712.1 L2642.1,704.9 L2652.0,697.6 L2660.2,692.0 L2668.9,686.5 L2677.3,680.8 L2684.6,674.7 L2690.0,668.0 L2691.0,663.9 L2690.3,659.2 L2688.4,654.0 L2686.0,648.9 L2684.0,644.0 L2682.0,638.7 L2679.7,633.4 L2677.3,628.2 L2674.7,623.0 L2672.0,618.0 L2668.7,612.4 L2665.2,607.0 L2661.5,601.6 L2657.8,596.3 L2654.0,591.0 L2649.3,584.5 L2644.6,578.1 L2639.8,571.7 L2634.9,565.3 L2630.0,559.0 L2625.5,553.3 L2620.9,547.7 L2616.3,542.1 L2611.7,536.5 L2607.0,531.0 L2602.8,526.1 L2598.6,521.3 L2594.3,516.6 L2590.0,511.8 L2585.7,507.0" fill="none" stroke="#0c0200" stroke-width="2.2"/>
<path d="M180.5,1352.5 L189.8,1352.1 L199.2,1351.6 L208.5,1351.2 L217.9,1350.8 L227.2,1350.3 L237.5,1349.7 L247.8,1349.1 L258.1,1348.5 L268.4,1348.0 L278.7,1347.5 L299.4,1346.7 L320.0,1346.0 L340.7,1345.3 L361.3,1344.8 L382.0,1344.5 L400.0,1344.5 L418.0,1344.6 L436.0,1344.9 L454.0,1345.2 L472.0,1345.5 L490.5,1344.6 L509.0,1343.7 L527.4,1342.8 L545.9,1341.9 L564.4,1341.0 L603.9,1338.9 L643.4,1336.8 L683.0,1334.7 L722.5,1332.6 L762.0,1330.5 L799.5,1327.2 L837.0,1324.1 L874.5,1320.9 L911.9,1317.4 L949.3,1313.4 L980.2,1309.5 L1011.1,1305.2 L1042.0,1300.5 L1072.8,1295.6 L1103.6,1290.7 L1134.9,1285.7 L1166.1,1280.6 L1197.4,1275.3 L1228.6,1269.8 L1259.7,1264.0 L1290.9,1257.8 L1322.0,1251.2 L1353.1,1244.4 L1384.2,1237.5 L1415.3,1230.8" fill="none" stroke="#0c0200" stroke-width="1.9"/>
<path d="M144.4,1086.0 L146.3,1099.7 L148.2,1113.5 L150.0,1127.3 L151.9,1141.1 L153.8,1154.9 L155.7,1169.1 L157.7,1183.6 L159.7,1198.3 L161.7,1213.2 L163.8,1228.5 L166.0,1244.2 L168.2,1260.2 L170.4,1276.7 L172.7,1293.4 L175.0,1310.3 L176.2,1319.5 L177.5,1328.7 L178.8,1334.6 L179.7,1340.5 L180.3,1346.5 L180.5,1352.5 L183.5,1362.9 L186.5,1373.3" fill="none" stroke="#200600" stroke-width="1.9" stroke-opacity="0.85"/>
<path d="M188.8,1069.0 L190.7,1082.8 L192.5,1096.6 L194.5,1111.1 L196.5,1125.6 L198.4,1140.1 L200.5,1155.2 L202.5,1170.5 L204.6,1186.0 L206.7,1201.7 L208.9,1218.1 L211.2,1234.8 L213.5,1252.2 L215.9,1269.9 L218.3,1288.0 L220.7,1306.4 L222.1,1316.5 L223.4,1326.7 L224.9,1332.5 L226.0,1338.4 L226.8,1344.3 L227.2,1350.3 L230.6,1360.4 L233.9,1370.6" fill="none" stroke="#200600" stroke-width="1.9" stroke-opacity="0.85"/>
<path d="M228.8,1050.0 L231.1,1063.8 L233.4,1077.6 L235.9,1092.7 L238.5,1107.9 L241.0,1123.0 L243.7,1139.0 L246.3,1155.2 L249.0,1171.5 L251.8,1187.9 L254.6,1205.4 L257.6,1223.1 L260.7,1241.8 L263.8,1260.9 L267.0,1280.4 L270.3,1300.4 L272.0,1311.6 L273.8,1322.7 L275.6,1328.8 L277.0,1335.0 L278.0,1341.2 L278.7,1347.5 L282.7,1357.9 L286.7,1368.3" fill="none" stroke="#200600" stroke-width="1.9" stroke-opacity="0.85"/>
<path d="M313.0,1014.3 L316.0,1028.6 L318.9,1042.8 L322.3,1059.3 L325.7,1075.9 L329.1,1092.4 L332.7,1109.9 L336.3,1127.7 L340.0,1145.5 L343.6,1163.6 L347.6,1182.9 L351.6,1202.6 L355.8,1223.5 L360.2,1244.8 L364.6,1266.8 L369.1,1289.4 L371.5,1302.1 L374.0,1314.8 L376.7,1322.0 L378.9,1329.4 L380.7,1336.9 L382.0,1344.5 L384.9,1354.5 L387.9,1364.4" fill="none" stroke="#200600" stroke-width="1.9" stroke-opacity="0.85"/>
<path d="M383.7,981.0 L387.4,995.8 L391.1,1010.6 L395.5,1028.6 L400.0,1046.9 L404.5,1065.0 L409.3,1084.4 L414.0,1104.0 L418.8,1123.7 L423.6,1143.6 L428.7,1165.3 L433.9,1187.2 L439.7,1210.9 L445.4,1234.8 L451.1,1259.7 L457.1,1285.5 L460.2,1300.2 L463.3,1314.8 L466.2,1322.3 L468.6,1329.9 L470.5,1337.6 L472.0,1345.5 L474.5,1356.8 L477.0,1368.0" fill="none" stroke="#200600" stroke-width="1.9" stroke-opacity="0.85"/>
<path d="M459.8,946.8 L464.1,961.6 L468.4,976.3 L473.8,995.5 L479.2,1014.9 L484.6,1034.1 L490.6,1054.9 L496.3,1075.9 L502.1,1097.0 L507.9,1118.2 L514.2,1141.7 L520.6,1165.3 L527.7,1191.2 L534.7,1217.3 L541.7,1244.7 L549.0,1273.2 L552.8,1289.5 L556.5,1305.8 L559.3,1314.4 L561.5,1323.2 L563.2,1332.0 L564.4,1341.0 L568.4,1354.8 L572.4,1368.5" fill="none" stroke="#200600" stroke-width="1.9" stroke-opacity="0.85"/>
<path d="M610.6,882.0 L616.5,897.4 L622.3,912.8 L630.0,934.2 L637.8,956.0 L645.7,977.4 L654.3,1000.9 L662.6,1024.5 L671.0,1048.3 L679.3,1072.1 L688.5,1098.9 L697.8,1125.8 L708.3,1155.6 L718.6,1185.6 L728.9,1217.3 L739.7,1250.4 L745.3,1269.6 L750.8,1288.8 L754.5,1299.0 L757.7,1309.3 L760.1,1319.8 L762.0,1330.5 L768.0,1347.2 L774.0,1364.0" fill="none" stroke="#200600" stroke-width="1.9" stroke-opacity="0.85"/>
<path d="M754.2,828.5 L761.2,843.6 L768.3,858.7 L778.0,881.4 L788.1,904.4 L798.1,927.1 L809.2,952.1 L819.9,977.3 L830.6,1002.6 L841.2,1028.0 L853.2,1056.9 L865.2,1085.9 L878.9,1118.4 L892.4,1151.0 L905.9,1185.7 L920.1,1222.2 L927.4,1243.6 L934.7,1265.0 L939.4,1276.8 L943.5,1288.8 L946.7,1301.0 L949.3,1313.4 L951.2,1326.9 L953.2,1340.4" fill="none" stroke="#200600" stroke-width="1.9" stroke-opacity="0.85"/>
<path d="M872.0,786.2 L880.2,800.6 L888.5,815.1 L900.1,838.1 L912.3,861.6 L924.7,885.3 L938.3,910.9 L951.2,936.9 L964.4,963.6 L977.5,990.4 L991.9,1020.6 L1006.7,1051.0 L1023.3,1084.7 L1039.5,1118.3 L1055.4,1154.4 L1072.4,1192.5 L1080.7,1215.2 L1089.0,1237.8 L1093.8,1250.7 L1097.9,1263.8 L1101.1,1277.1 L1103.6,1290.7 L1104.3,1302.6 L1105.0,1314.5" fill="none" stroke="#200600" stroke-width="1.7" stroke-opacity="0.85"/>
<path d="M997.6,746.5 L1006.7,760.1 L1015.8,773.7 L1029.1,796.8 L1043.0,820.7 L1057.6,845.1 L1073.2,871.1 L1088.1,897.7 L1103.5,925.6 L1118.8,953.6 L1135.4,984.8 L1152.6,1016.7 L1171.6,1051.2 L1190.1,1085.7 L1207.9,1122.8 L1227.2,1162.5 L1236.2,1186.2 L1245.2,1210.0 L1250.0,1223.2 L1254.1,1236.6 L1257.3,1250.2 L1259.7,1264.0 L1260.3,1272.7 L1261.0,1281.4" fill="none" stroke="#200600" stroke-width="1.7" stroke-opacity="0.85"/>
<path d="M1121.7,709.8 L1131.6,722.2 L1141.5,734.6 L1156.4,757.5 L1172.3,781.3 L1189.1,806.2 L1207.0,832.0 L1223.9,858.8 L1241.8,887.5 L1259.5,916.3 L1278.5,948.1 L1298.3,980.8 L1320.1,1015.8 L1341.0,1050.5 L1360.8,1088.2 L1382.6,1129.0 L1392.5,1153.6 L1402.4,1178.3 L1406.8,1191.1 L1410.4,1204.2 L1413.3,1217.4 L1415.3,1230.8 L1415.3,1238.2 L1415.3,1245.7" fill="none" stroke="#200600" stroke-width="1.7" stroke-opacity="0.85"/>
<path d="M1249.0,676.4 L1259.9,688.4 L1270.8,700.5 L1287.5,722.9 L1305.1,746.2 L1323.7,770.6 L1343.3,796.0 L1361.9,822.4 L1381.5,850.9 L1401.0,879.4 L1421.6,911.1 L1443.1,943.7 L1466.5,978.5 L1489.0,1013.3 L1510.2,1051.3 L1533.5,1092.4 L1544.1,1117.4 L1554.7,1142.5 L1557.9,1156.2 L1560.3,1170.0 L1561.9,1183.9 L1562.6,1198.0 L1563.9,1203.3 L1565.3,1208.7" fill="none" stroke="#200600" stroke-width="1.7" stroke-opacity="0.85"/>
<path d="M1363.5,642.0 L1375.6,653.6 L1387.7,665.2 L1406.3,687.1 L1426.0,709.9 L1446.6,733.7 L1468.3,758.5 L1488.9,784.6 L1510.6,812.7 L1532.1,841.0 L1554.8,872.5 L1578.3,904.9 L1603.8,939.8 L1628.2,974.6 L1651.3,1012.9 L1676.5,1054.5 L1688.1,1080.0 L1699.7,1105.6 L1703.2,1118.7 L1706.0,1131.9 L1707.9,1145.3 L1709.1,1158.8 L1708.3,1162.6 L1707.6,1166.4" fill="none" stroke="#200600" stroke-width="1.7" stroke-opacity="0.85"/>
<path d="M1482.5,613.8 L1495.2,624.8 L1507.9,635.9 L1527.6,657.0 L1548.4,678.9 L1570.1,701.9 L1592.9,725.9 L1614.6,751.2 L1637.4,778.5 L1659.9,806.1 L1683.7,836.9 L1708.3,868.7 L1734.9,902.8 L1760.1,937.1 L1784.3,975.0 L1810.4,1016.2 L1822.5,1041.6 L1834.6,1067.2 L1837.8,1079.9 L1840.2,1092.7 L1841.8,1105.6 L1842.7,1118.6 L1841.8,1121.3 L1841.0,1124.0" fill="none" stroke="#200600" stroke-width="1.7" stroke-opacity="0.85"/>
<path d="M1588.4,587.8 L1601.7,598.2 L1614.9,608.6 L1635.6,628.6 L1657.4,649.5 L1680.1,671.5 L1703.9,694.4 L1726.6,718.7 L1750.3,745.0 L1773.8,771.7 L1798.6,801.5 L1824.1,832.4 L1851.6,865.7 L1877.8,899.2 L1902.8,936.4 L1929.7,976.9 L1942.5,1002.1 L1955.0,1027.5 L1958.3,1040.3 L1960.8,1053.2 L1962.5,1066.2 L1963.4,1079.4 L1962.5,1081.2 L1961.6,1083.0" fill="none" stroke="#200600" stroke-width="1.7" stroke-opacity="0.85"/>
<path d="M1695.5,563.5 L1709.1,573.2 L1722.6,583.0 L1743.9,601.9 L1766.2,621.8 L1789.5,642.6 L1813.9,664.4 L1837.2,687.6 L1861.6,712.8 L1885.6,738.3 L1911.1,767.0 L1937.2,796.8 L1965.3,828.9 L1992.1,861.3 L2017.7,897.5 L2045.3,936.9 L2058.4,961.6 L2071.4,986.5 L2074.3,998.6 L2076.5,1010.9 L2077.9,1023.3 L2078.5,1035.7 L2077.6,1036.9 L2076.7,1038.0" fill="none" stroke="#200600" stroke-width="1.7" stroke-opacity="0.85"/>
<path d="M1796.0,540.2 L1809.9,549.2 L1823.8,558.2 L1845.6,576.0 L1868.6,594.6 L1892.5,614.1 L1917.5,634.6 L1941.4,656.6 L1966.5,680.5 L1991.2,704.8 L2017.4,732.2 L2044.3,760.7 L2073.1,791.5 L2100.5,822.6 L2127.0,857.6 L2155.3,895.8 L2169.0,919.9 L2182.5,944.2 L2184.9,955.3 L2186.7,966.4 L2187.8,977.6 L2188.2,989.0 L2187.4,989.7 L2186.5,990.5" fill="none" stroke="#200600" stroke-width="1.7" stroke-opacity="0.85"/>
<path d="M1888.6,516.4 L1902.8,524.7 L1916.9,533.0 L1939.3,549.7 L1962.8,567.1 L1987.2,585.5 L2012.8,604.8 L2037.3,625.6 L2063.0,648.3 L2088.3,671.4 L2115.1,697.6 L2142.7,724.9 L2172.1,754.4 L2200.2,784.4 L2227.4,818.3 L2256.5,855.3 L2270.7,878.9 L2284.7,902.6 L2287.4,912.9 L2289.4,923.3 L2290.8,933.9 L2291.6,944.5 L2290.8,945.2 L2290.0,946.0" fill="none" stroke="#200600" stroke-width="1.7" stroke-opacity="0.85"/>
<path d="M1987.3,497.0 L2001.2,504.5 L2015.1,512.2 L2037.2,527.5 L2060.3,543.6 L2084.4,560.6 L2109.5,578.5 L2133.6,597.9 L2158.9,619.1 L2183.8,640.8 L2210.3,665.4 L2237.3,691.1 L2266.2,718.9 L2293.8,747.3 L2320.5,779.5 L2349.2,814.8 L2363.2,837.3 L2377.0,860.0 L2379.6,869.7 L2381.7,879.6 L2383.1,889.5 L2384.0,899.5 L2383.2,900.3 L2382.5,901.0" fill="none" stroke="#200600" stroke-width="1.7" stroke-opacity="0.85"/>
<path d="M2082.5,478.6 L2095.9,485.6 L2109.3,492.7 L2130.7,507.0 L2153.1,522.0 L2176.4,537.8 L2200.8,554.5 L2224.3,572.5 L2249.0,592.3 L2273.3,612.5 L2299.2,635.4 L2325.8,659.3 L2354.3,685.2 L2381.5,711.5 L2408.0,741.5 L2436.5,774.3 L2450.7,795.4 L2464.6,816.6 L2466.3,824.8 L2467.5,833.1 L2468.1,841.5 L2468.3,849.9 L2467.7,850.4 L2467.0,851.0" fill="none" stroke="#200600" stroke-width="1.7" stroke-opacity="0.85"/>
<path d="M2160.6,461.4 L2173.6,467.7 L2186.6,474.1 L2207.4,487.3 L2229.3,501.0 L2252.1,515.5 L2275.9,530.7 L2299.0,547.2 L2323.3,565.4 L2347.3,583.9 L2372.9,605.0 L2399.2,626.8 L2427.5,650.5 L2454.6,674.7 L2481.2,702.3 L2509.9,732.5 L2524.3,751.9 L2538.6,771.6 L2540.9,779.0 L2542.8,786.5 L2544.2,794.1 L2545.1,801.8 L2544.5,802.4 L2544.0,803.0" fill="none" stroke="#200600" stroke-width="1.7" stroke-opacity="0.85"/>
<path d="M2236.0,444.2 L2248.4,450.2 L2260.7,456.2 L2280.6,468.7 L2301.5,481.6 L2323.3,495.2 L2346.2,509.5 L2368.3,525.0 L2391.7,541.9 L2414.9,559.2 L2439.7,578.8 L2465.2,599.2 L2492.7,621.1 L2519.1,643.5 L2545.3,669.0 L2573.5,696.8 L2587.8,714.8 L2602.0,733.0 L2604.0,738.9 L2605.6,744.8 L2606.9,750.9 L2607.8,757.0 L2607.4,757.5 L2607.0,758.0" fill="none" stroke="#200600" stroke-width="1.7" stroke-opacity="0.85"/>
<path d="M2299.3,426.8 L2310.8,432.9 L2322.2,439.0 L2340.8,451.3 L2360.5,464.0 L2381.0,477.3 L2402.5,491.1 L2423.6,506.0 L2445.9,522.2 L2468.1,538.5 L2492.0,556.9 L2516.6,575.9 L2543.3,596.2 L2569.1,616.8 L2595.0,640.0 L2623.0,665.2 L2637.5,681.4 L2652.0,697.6 L2654.0,701.9 L2655.7,706.2 L2657.1,710.7 L2658.3,715.2 L2658.0,715.6 L2657.7,716.0" fill="none" stroke="#200600" stroke-width="1.7" stroke-opacity="0.85"/>
<path d="M2355.0,421.9 L2365.5,427.9 L2375.9,433.8 L2393.2,445.4 L2411.4,457.5 L2430.4,470.0 L2450.5,483.0 L2470.2,496.9 L2491.2,511.8 L2512.2,526.8 L2534.9,543.5 L2558.4,560.7 L2583.8,579.0 L2608.6,597.4 L2633.7,617.9 L2661.0,640.0 L2675.5,654.0 L2690.0,668.0 L2691.6,670.5 L2693.0,673.1 L2694.2,675.7 L2695.3,678.5 L2695.1,678.7 L2695.0,679.0" fill="none" stroke="#200600" stroke-width="1.7" stroke-opacity="0.85"/>
<path d="M2392.0,430.0 L2401.1,435.2 L2410.2,440.5 L2425.2,450.6 L2441.0,461.1 L2457.6,472.1 L2475.0,483.4 L2492.2,495.5 L2510.5,508.4 L2528.8,521.5 L2548.5,536.0 L2569.0,551.0 L2591.2,566.9 L2612.7,582.9 L2634.7,600.7 L2658.5,619.9 L2671.3,631.9 L2684.0,644.0 L2685.3,645.2 L2686.5,646.5 L2687.7,647.8 L2688.7,649.2 L2688.9,649.6 L2689.0,650.0" fill="none" stroke="#200600" stroke-width="1.7" stroke-opacity="0.85"/>
<path d="M2436.0,445.0 L2443.4,449.2 L2450.8,453.4 L2462.9,461.5 L2475.8,470.0 L2489.2,478.8 L2503.3,487.9 L2517.2,497.6 L2532.0,508.1 L2546.8,518.6 L2562.8,530.4 L2579.3,542.4 L2597.2,555.4 L2614.6,568.3 L2632.3,582.7 L2651.6,598.3 L2661.8,608.2 L2672.0,618.0 L2673.0,618.8 L2674.0,619.6 L2674.9,620.5 L2675.8,621.4 L2675.9,621.7 L2676.0,622.0" fill="none" stroke="#200600" stroke-width="1.7" stroke-opacity="0.85"/>
<path d="M2482.0,464.0 L2487.4,467.0 L2492.8,470.1 L2501.7,476.0 L2511.1,482.2 L2520.9,488.6 L2531.2,495.3 L2541.4,502.4 L2552.2,510.1 L2563.0,517.8 L2574.6,526.4 L2586.7,535.3 L2599.7,544.8 L2612.4,554.3 L2625.2,564.9 L2639.2,576.5 L2646.6,583.7 L2654.0,591.0 L2654.8,591.6 L2655.5,592.2 L2656.2,592.9 L2656.8,593.6 L2656.9,593.8 L2657.0,594.0" fill="none" stroke="#200600" stroke-width="1.7" stroke-opacity="0.85"/>
<path d="M2528.0,483.0 L2531.2,484.8 L2534.4,486.6 L2539.7,490.1 L2545.3,493.8 L2551.2,497.6 L2557.3,501.6 L2563.3,505.9 L2569.8,510.4 L2576.2,515.1 L2583.1,520.2 L2590.2,525.5 L2597.9,531.2 L2605.4,536.9 L2613.0,543.3 L2621.3,550.2 L2625.6,554.6 L2630.0,559.0 L2630.5,559.4 L2631.0,559.8 L2631.4,560.2 L2631.9,560.7 L2631.9,560.9 L2632.0,561.0" fill="none" stroke="#200600" stroke-width="1.7" stroke-opacity="0.85"/>
<path d="M2560.0,496.0 L2561.5,496.8 L2563.0,497.6 L2565.4,499.3 L2568.0,500.9 L2570.7,502.7 L2573.5,504.5 L2576.3,506.5 L2579.3,508.6 L2582.2,510.7 L2585.4,513.1 L2588.7,515.5 L2592.3,518.1 L2595.7,520.8 L2599.2,523.7 L2603.0,526.9 L2605.0,529.0 L2607.0,531.0 L2607.3,531.2 L2607.5,531.4 L2607.7,531.6 L2607.9,531.9 L2608.0,531.9 L2608.0,532.0" fill="none" stroke="#200600" stroke-width="1.7" stroke-opacity="0.85"/>
<path d="M735.9,1234.1 L741.3,1250.7 L752.4,1289.1 L763.6,1330.8 L775.6,1364.3" fill="none" stroke="#c48a28" stroke-width="1.3" stroke-opacity="0.9"/>
<path d="M2388.0,442.0 L2393.2,445.4 L2411.4,457.5 L2430.4,470.0 L2450.5,483.0 L2470.2,496.9 L2491.2,511.8 L2512.2,526.8 L2534.9,543.5 L2558.4,560.7 L2583.8,579.0 L2608.6,597.4 L2633.7,617.9 L2639.1,622.3" stroke="url(#bl)" stroke-width="1.5" stroke-opacity="0.78" fill="none"/>
</g>
</svg>
</div>
</body>
</html>
